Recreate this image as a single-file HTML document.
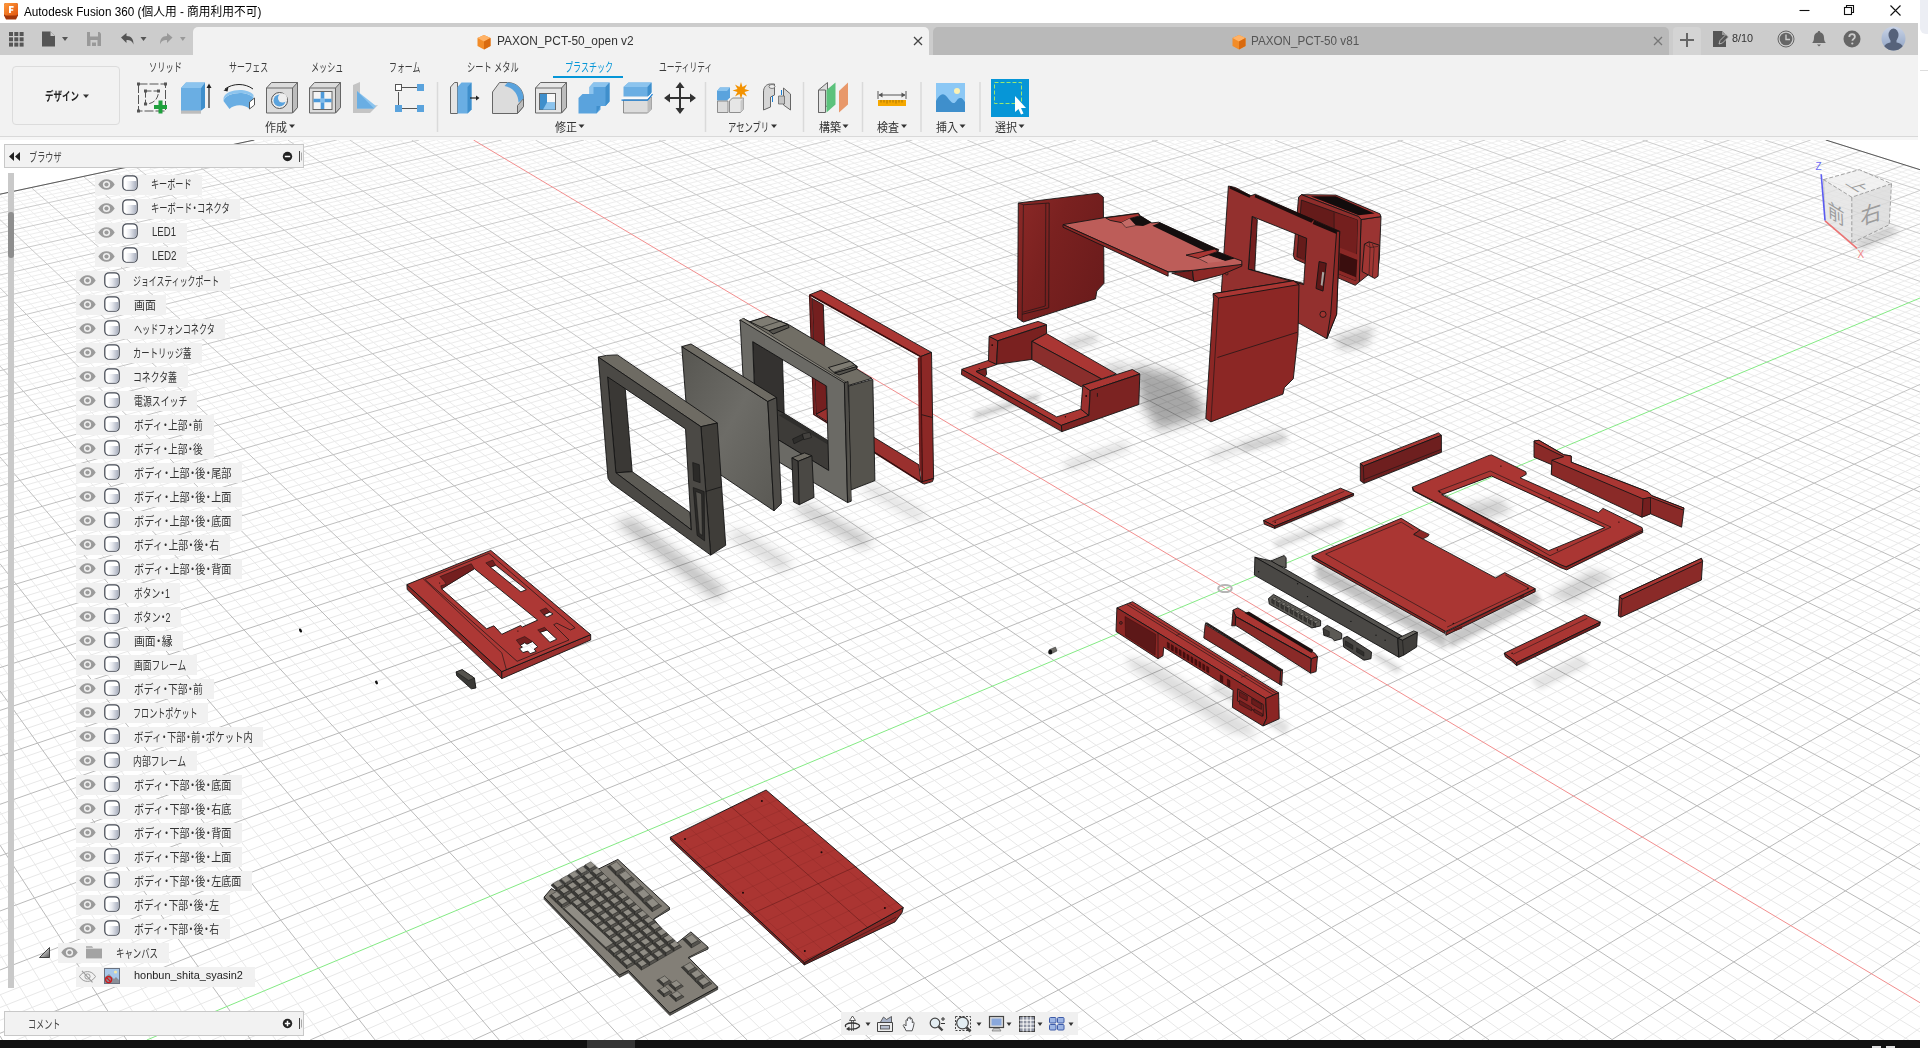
<!DOCTYPE html>
<html lang="ja"><head><meta charset="utf-8"><title>Autodesk Fusion 360</title>
<style>
html,body{margin:0;padding:0}
body{width:1928px;height:1048px;overflow:hidden;position:relative;background:#fff;font-family:"Liberation Sans","Noto Sans CJK JP",sans-serif;font-size:12px;color:#333}
#win{position:absolute;left:0;top:0;width:1920px;height:1040px;overflow:hidden;background:#fff}
.abs{position:absolute}
#titlebar{position:absolute;left:0;top:0;width:1920px;height:23px;background:#fff}
#tabbar{position:absolute;left:0;top:23px;width:1918px;height:32px;background:#cccccc}
#toolbar{position:absolute;left:0;top:55px;width:1918px;overflow:hidden;height:85px;background:#f2f2f2}
#vp{position:absolute;left:0;top:140px;width:1920px;height:900px;background:#fff;overflow:hidden}
.t{position:absolute;white-space:nowrap;line-height:1;transform-origin:0 0}
.d{display:inline-block;margin:0 -0.22em}
.row{position:absolute;height:20px;background:#f1f1f1}
</style></head><body>

<div id="win">
<div id="titlebar">
<svg class="abs" style="left:4px;top:3px" width="14" height="17" viewBox="0 0 14 17"><defs><linearGradient id="fl" x1="0" y1="0" x2="1" y2="1"><stop offset="0" stop-color="#ff9a3c"/><stop offset="1" stop-color="#e2560f"/></linearGradient></defs><path d="M2 0h10a2 2 0 0 1 2 2v10.5l-2 4H2l-2-4V2a2 2 0 0 1 2-2z" fill="#a3360a"/><rect x="0" y="0" width="14" height="12.5" rx="2" fill="url(#fl)"/><path d="M5 3h4.6v1.7H6.9v1.5h2.3v1.6H6.9V10H5z" fill="#fff"/></svg>
<svg class="abs" style="left:1790px;top:0" width="130" height="23" viewBox="0 0 130 23" fill="none" stroke="#111" stroke-width="1.1"><path d="M9.5 10.5h10"/><rect x="54.5" y="7.5" width="7" height="7"/><path d="M56.5 7.5v-2h7v7h-2"/><path d="M100.5 5.5l10 10M110.5 5.5l-10 10"/></svg>
</div>
<div id="tabbar">
<svg class="abs" style="left:0;top:0" width="193" height="32" viewBox="0 0 193 32">
<g fill="#555"><rect x="9" y="9" width="4" height="4"/><rect x="14.3" y="9" width="4" height="4"/><rect x="19.6" y="9" width="4" height="4"/><rect x="9" y="14.3" width="4" height="4"/><rect x="14.3" y="14.3" width="4" height="4"/><rect x="19.6" y="14.3" width="4" height="4"/><rect x="9" y="19.6" width="4" height="4"/><rect x="14.3" y="19.6" width="4" height="4"/><rect x="19.6" y="19.6" width="4" height="4"/>
<path d="M42 8.5h8.5l4.5 4.5v10.500h-13z"/><path d="M62 14l3 4 3-4z"/>
<path d="M140.500 14l3 4 3-4z"/></g>
<path d="M50.500 8.500v4.500h4.500" fill="#ccc"/>
<g fill="#999"><path d="M87 9h12.500l1.500 1.500V23H87z"/><path d="M180 14l2.800 4 2.800-4z"/></g>
<path d="M90 9h8v4.500h-8zM90.500 17h7v6h-7z" fill="#ccc"/><rect x="92" y="19.500" width="4" height="3.500" fill="#999"/>
<path d="M121 14.500l5.500-4.500v3c5 0 7 3 7 8.500-1.500-3.500-3-4.500-7-4.500v3z" fill="#555"/>
<path d="M172.500 14.500l-5.500-4.500v3c-5 0-7 3-7 8.500 1.500-3.500 3-4.500 7-4.500v3z" fill="#999"/>
</svg>
<div class="abs" style="left:193px;top:4px;width:736px;height:28px;background:#f2f2f2;border-radius:5px 5px 0 0"></div>
<div class="abs" style="left:933px;top:4px;width:736px;height:28px;background:#b9b9b9;border-radius:5px 5px 0 0"></div>
<div class="abs" style="left:1673px;top:4px;width:28px;height:28px;background:#d4d4d4;border-radius:4px 4px 0 0"></div>
<svg class="abs" style="left:476px;top:11px" width="16" height="16" viewBox="0 0 16 16"><path d="M8 1l6.500 3v8L8 15.500 1.500 12V4z" fill="#f28c28"/><path d="M8 1l6.500 3L8 7.500 1.500 4z" fill="#ffb266"/><path d="M8 7.500l6.500-3.500v8L8 15.500z" fill="#d96a0f"/></svg>
<svg class="abs" style="left:1231px;top:11px" width="16" height="16" viewBox="0 0 16 16"><path d="M8 1l6.500 3v8L8 15.500 1.500 12V4z" fill="#f28c28"/><path d="M8 1l6.500 3L8 7.500 1.500 4z" fill="#ffb266"/><path d="M8 7.500l6.500-3.500v8L8 15.500z" fill="#d96a0f"/></svg>
<svg class="abs" style="left:913px;top:13px" width="10" height="10" viewBox="0 0 10 10" stroke="#444" stroke-width="1.3"><path d="M1 1l8 8M9 1l-8 8"/></svg>
<svg class="abs" style="left:1653px;top:13px" width="10" height="10" viewBox="0 0 10 10" stroke="#777" stroke-width="1.3"><path d="M1 1l8 8M9 1l-8 8"/></svg>
<svg class="abs" style="left:1680px;top:10px" width="14" height="14" viewBox="0 0 14 14" stroke="#666" stroke-width="2"><path d="M7 0v14M0 7h14"/></svg>
<svg class="abs" style="left:1712px;top:8px" width="17" height="17" viewBox="0 0 17 17"><path d="M1 0h9l4 4v12H1z" fill="#555"/><path d="M10 0v4h4" fill="#999"/><path d="M7 13l1-3.500 6-6 2.500 2.500-6 6z" fill="#555" stroke="#ccc" stroke-width=".8"/></svg>
<svg class="abs" style="left:1777px;top:7px" width="18" height="18" viewBox="0 0 18 18"><circle cx="9" cy="9" r="8" fill="none" stroke="#666" stroke-width="1"/><circle cx="9" cy="9" r="6.300" fill="#666"/><path d="M9 4.500V9.500h4" stroke="#ccc" stroke-width="1.400" fill="none"/></svg>
<svg class="abs" style="left:1811px;top:7px" width="16" height="18" viewBox="0 0 16 18"><path d="M8 1c.8 0 1.200.5 1.200 1.200 2.600.6 3.800 2.800 3.800 5.300 0 3 .8 4.500 2 5.500H1c1.200-1 2-2.500 2-5.500 0-2.500 1.200-4.700 3.800-5.300C6.800 1.500 7.200 1 8 1z" fill="#666"/><path d="M6 14.500h4L8 16.500z" fill="#666"/></svg>
<svg class="abs" style="left:1843px;top:7px" width="18" height="18" viewBox="0 0 18 18"><circle cx="9" cy="9" r="8.500" fill="#666"/><path d="M6.300 7c0-1.800 1.200-2.800 2.800-2.800s2.800 1 2.800 2.500c0 2-2.500 2.200-2.500 4" stroke="#ccc" stroke-width="1.800" fill="none"/><circle cx="9.300" cy="13.500" r="1.100" fill="#ccc"/></svg>
<svg class="abs" style="left:1881px;top:3px" width="25" height="25" viewBox="0 0 25 25"><defs><linearGradient id="av" x1="0" y1="0" x2="0" y2="1"><stop offset="0" stop-color="#c9d3e6"/><stop offset="1" stop-color="#8fa3c4"/></linearGradient><clipPath id="avc"><circle cx="12.500" cy="12.500" r="12"/></clipPath></defs><circle cx="12.500" cy="12.500" r="12" fill="url(#av)"/><g clip-path="url(#avc)" fill="#56627a"><ellipse cx="12.500" cy="9" rx="5" ry="6.500"/><path d="M2 25c0-6 4-8 7.500-8.500V14h6v2.500C19 17 23 19 23 25z"/></g></svg>
</div>
<div id="toolbar">
<div class="abs" style="left:0;top:81px;width:1920px;height:1px;background:#d9d9d9"></div>
<div class="abs" style="left:0;top:82px;width:1920px;height:3px;background:#f6f6f6"></div>
<div class="abs" style="left:12px;top:10.500px;width:108px;height:59px;border:1px solid #dcdcdc;border-radius:4px;box-sizing:border-box"></div>
<div class="abs" style="left:553px;top:21px;width:70px;height:2px;background:#0696d7"></div>
<svg class="abs" style="left:0;top:0" width="1100" height="82" viewBox="0 55 1100 82">
<g fill="#333"><path d="M83 94.500h6l-3 3.500z"/><path d="M289 124.500h6l-3 3.500z"/><path d="M578.500 124.500h6l-3 3.500z"/><path d="M771 124.500h6l-3 3.500z"/><path d="M842.500 124.500h6l-3 3.500z"/><path d="M901 124.500h6l-3 3.500z"/><path d="M959.500 124.500h6l-3 3.500z"/><path d="M1018.500 124.500h6l-3 3.500z"/></g>
<g stroke="#dadada" stroke-width="1.500"><path d="M437.500 82v50M705.500 82v50M803.500 82v50M862.500 82v50M921 82v50M980 82v50"/></g>
<!-- sketch -->
<g fill="none" stroke="#555" stroke-width="1"><path d="M138.500 84h27v27h-27z" stroke-dasharray="9 2"/><path d="M145.500 91h13c0 8-5 13-13 13z" stroke-dasharray="6 2"/></g>
<g fill="#555"><rect x="137" y="82.500" width="3" height="3"/><rect x="164" y="82.500" width="3" height="3"/><rect x="137" y="109.500" width="3" height="3"/><rect x="144" y="89.500" width="3" height="3"/><rect x="157" y="89.500" width="3" height="3"/><rect x="144" y="102.500" width="3" height="3"/></g>
<path d="M160.500 100.500v13M154 107h13" stroke="#1ea03c" stroke-width="4" fill="none"/>
<!-- extrude -->
<path d="M181 110l4-3h20l-4 3v3.500h-20z" fill="#c9c9c9"/><path d="M181 110h20v3.500h-20z" fill="#bdbdbd"/>
<path d="M181 88l5-5.500h19v25l-4 3h-20z" fill="#6aaee3"/><path d="M201 88l4-5.500v25l-4 3z" fill="#3f8fcc"/><path d="M181 88l5-5.500h19l-4 5.500z" fill="#8cc4ee"/>
<path d="M209 108V86" stroke="#222" stroke-width="1.200"/><path d="M206.500 88l2.500-4.500 2.500 4.500z" fill="#222"/>
<!-- revolve -->
<path d="M223.500 101c2-9 24-11 30-3l-4 11c-5-5-15-5-20 0z" fill="#6aaee3"/><path d="M223.500 101c2-9 24-11 30-3v-3c-6-8-28-6-30 3z" fill="#8cc4ee"/><path d="M249.500 102l5-4v7l-5 4z" fill="#fff" stroke="#555" stroke-width="1"/>
<path d="M225 89c8-6 20-6 28 0" stroke="#222" stroke-width="1" fill="none"/><path d="M223.500 90.500l5-3.500-1 4.500z" fill="#222"/>
<!-- hole -->
<path d="M266.500 88l5-5.500h26v25l-5 5.500h-26z" fill="#dcdcdc" stroke="#666" stroke-width="1"/><path d="M292.500 88l5-5.500v25l-5 5.500z" fill="#bdbdbd" stroke="#666" stroke-width="1"/><path d="M266.500 88h26v25" fill="none" stroke="#666" stroke-width="1"/>
<circle cx="279.500" cy="100.500" r="8" fill="#eee" stroke="#555" stroke-width="1"/><circle cx="279.500" cy="100.500" r="6" fill="#5aa3dd"/><circle cx="282.500" cy="98" r="4.500" fill="#eee"/>
<!-- mesh box -->
<path d="M309.500 88l5-5.500h26v25l-5 5.500h-26z" fill="#dcdcdc" stroke="#666" stroke-width="1"/><path d="M335.500 88l5-5.500v25l-5 5.500z" fill="#bdbdbd" stroke="#666" stroke-width="1"/><path d="M309.500 88h26v25" fill="none" stroke="#666" stroke-width="1"/>
<rect x="313" y="91.500" width="19" height="18" fill="#f4f4f4" stroke="#666" stroke-width="1"/><path d="M320.700 92v17h3.600V92zM313.500 98.700h18v3.600h-18z" fill="#4d9ada"/><path d="M320.700 98.700h3.600v3.600h-3.600z" fill="#7fbdee"/>
<!-- rib -->
<path d="M353 85l7-3v26l18-3-8 8h-17z" fill="#c4c4c4"/><path d="M357 91l19 15-2 2.500h-17z" fill="#8cc4ee"/><path d="M357 91v17.500h17z" fill="#6aaee3"/>
<!-- pattern -->
<path d="M398.500 92v16M402 87.500h18M402 108.500h18" stroke="#555" stroke-width="1" fill="none"/><rect x="395.500" y="84.500" width="6" height="6" fill="#fff" stroke="#555"/><rect x="417" y="84" width="7" height="7" fill="#5aa3dd"/><rect x="395" y="105" width="7" height="7" fill="#5aa3dd"/><rect x="417" y="105" width="7" height="7" fill="#5aa3dd"/>
<!-- press pull -->
<path d="M450.500 87l4-4.500h3v31h-7z" fill="#e4e4e4" stroke="#666" stroke-width="1"/><path d="M457.500 87l4-4.500h10v27l-4 4h-10z" fill="#6aaee3"/><path d="M467.500 87l4-4.500v27l-4 4z" fill="#3f8fcc"/>
<path d="M470 98h7" stroke="#222" stroke-width="1.200"/><path d="M476 95.500l3.500 2.500-3.500 2.500z" fill="#222"/>
<!-- fillet -->
<path d="M492.500 113.500V92l7-9.500h8c9 0 16 7 16 16v8l-6 7z" fill="#dcdcdc" stroke="#666" stroke-width="1"/><path d="M517.500 113.500v-8l6-7v8z" fill="#bdbdbd" stroke="#666" stroke-width="1"/><path d="M504.500 86l3-3.500c9 0 16 7 16 16l-5 4c0-9-6-15-14-16.500z" fill="#5aa3dd"/>
<!-- shell -->
<path d="M535.500 88l5-5.500h26v25l-5 5.500h-26z" fill="#e6e6e6" stroke="#666" stroke-width="1"/><path d="M561.500 88l5-5.500v25l-5 5.500z" fill="#bdbdbd" stroke="#666" stroke-width="1"/><path d="M535.500 88h26v25" fill="none" stroke="#666" stroke-width="1"/>
<rect x="539.500" y="93.500" width="16" height="16" fill="#f8f8f8" stroke="#666" stroke-width="1"/><path d="M540 94h7v8.500h8v7h-15z" fill="#3f8fcc"/><path d="M547 102.500h8v7h-12z" fill="#8cc4ee"/>
<!-- combine -->
<path d="M578.500 98l4-4h7v-7l4-4.500h16v19l-4 4.500h-5v3.500l-4 4h-18z" fill="#5aa3dd"/><path d="M578.500 98l4-4h7v-7l4-4.500h16l-4 4.500h-12v7h-11z" fill="#8cc4ee"/><path d="M605.500 87l4-4.500v19l-4 4.500zM596.500 106h4l-4 7.500z" fill="#3f8fcc"/>
<!-- split -->
<path d="M623.500 100h24l4-3v12l-4 4h-24z" fill="#dcdcdc" stroke="#777" stroke-width=".8"/><path d="M647.500 100l4-3v12l-4 4z" fill="#bdbdbd"/>
<path d="M623.500 87l5-4.500h23v11l-4 3h-24z" fill="#6aaee3"/><path d="M623.500 87l5-4.500h23l-4 4.500z" fill="#8cc4ee"/><path d="M647.500 87l4-4.500v11l-4 3z" fill="#3f8fcc"/>
<path d="M621.500 100.200h26l5-6" stroke="#1a7fd4" stroke-width="1.300" fill="none"/><path d="M621.500 98.200h26l5-6" stroke="#fff" stroke-width="1" fill="none"/>
<!-- move -->
<path d="M680 84v28M666 98h28" stroke="#333" stroke-width="2"/><path d="M680 82l4.500 6h-9zM680 114l4.500-6h-9zM664 98l6-4.500v9zM696 98l-6-4.500v9z" fill="#333"/>
<!-- assembly new component -->
<path d="M717 91l3-3.500h10l0 10-3 3h-10z" fill="#5aa3dd"/><path d="M717 91l3-3.500h10l-3 3.500z" fill="#8cc4ee"/>
<path d="M717.500 101h10.500v11.500h-10.500z" fill="#dcdcdc" stroke="#777" stroke-width=".8"/><path d="M729.500 101l3-3h11v11l-3 3.500h-11z" fill="#e6e6e6" stroke="#777" stroke-width=".8"/><path d="M740.500 101l3-3v11l-3 3.500z" fill="#c9c9c9"/>
<path d="M741 82l1.500 5 4.500-2.500-2.500 4.500 5 1.500-5 1.500 2.500 4.500-4.500-2.500-1.500 5-1.500-5-4.500 2.500 2.500-4.500-5-1.500 5-1.500-2.500-4.500 4.500 2.500z" fill="#f39200"/>
<!-- joint -->
<path d="M763.500 110V92c0-5 3-8 7-8h4v11l-4 2v10z" fill="#d6d6d6" stroke="#666" stroke-width="1"/><ellipse cx="772" cy="86.500" rx="3" ry="2" fill="#eee" stroke="#666" stroke-width=".8"/>
<path d="M783.500 88l7 6v16l-7-5z" fill="#d6d6d6" stroke="#666" stroke-width="1"/><path d="M778.500 96h6v8h-6z" fill="#c4c4c4" stroke="#666" stroke-width=".8"/><path d="M772.500 96v6M781.500 90v5" stroke="#1a7fd4" stroke-width="1"/>
<!-- construct -->
<path d="M818.500 90l9-7.500v23l-9 7z" fill="#dcdcdc" stroke="#666" stroke-width="1"/><path d="M818.500 90h7v22.500h-7z" fill="#e4e4e4" stroke="#666" stroke-width="1"/>
<path d="M826.500 90l9-7.500v22l-9 8z" fill="#5cc27c"/><path d="M839 91l9-8.500v22l-9 8z" fill="#e8986a"/>
<!-- inspect -->
<path d="M878 91v8M906 91v8M879 95h26" stroke="#555" stroke-width="1" fill="none"/><path d="M878.500 95l4-2.500v5zM905.500 95l-4-2.500v5z" fill="#555"/><rect x="878" y="100" width="28" height="6" fill="#f5a800"/><path d="M881 100v2.500M884 100v2.500M887 100v3.500M890 100v2.500M893 100v2.500M896 100v3.500M899 100v2.500M902 100v2.500" stroke="#7a5200" stroke-width=".6"/>
<!-- insert -->
<rect x="936" y="83" width="29" height="29" fill="#8cc8f5"/><path d="M936 101c3-6 6-8 9-6s5 7 8 8 4-5 7-5 3 2 5 4v10h-29z" fill="#3f8fcc"/><circle cx="957" cy="91" r="3" fill="#fbf1b4"/>
<!-- select -->
<rect x="991" y="79" width="38" height="38" fill="#0696d7"/><rect x="994.500" y="82.500" width="27" height="21" fill="none" stroke="#9be870" stroke-width="1" stroke-dasharray="4 2"/><path d="M1015 96v16l3.500-3 2.500 5.500 2.500-1-2.500-5.500h5z" fill="#fff"/>
</svg>
</div>

<div id="vp">
<svg class="abs" style="left:0;top:0" width="1920" height="900" viewBox="0 0 1920 900" fill="none"><defs><path id="gmin" d="M0.0 57.9L270.9 0.0M0.0 61.7L287.4 0.0M0.0 65.5L303.9 0.0M0.0 69.3L320.4 0.0M0.0 77.0L353.4 0.0M0.0 81.0L369.9 0.0M0.0 84.9L386.4 0.0M0.0 88.9L402.9 0.0M0.0 97.0L435.8 0.0M0.0 101.1L452.3 0.0M0.0 105.2L468.8 0.0M0.0 109.3L485.2 0.0M0.0 117.7L518.1 0.0M0.0 122.0L534.6 0.0M0.0 126.3L551.1 0.0M0.0 130.6L567.5 0.0M0.0 139.4L600.4 0.0M0.0 143.8L616.9 0.0M0.0 148.3L633.3 0.0M0.0 152.8L649.8 0.0M0.0 162.0L682.6 0.0M0.0 166.6L699.1 0.0M0.0 171.3L715.5 0.0M0.0 176.0L731.9 0.0M0.0 185.5L764.8 0.0M0.0 190.4L781.2 0.0M0.0 195.3L797.6 0.0M0.0 200.2L814.0 0.0M0.0 210.2L846.9 0.0M0.0 215.2L863.3 0.0M0.0 220.4L879.7 0.0M0.0 225.5L896.1 0.0M0.0 236.0L928.9 0.0M0.0 241.3L945.3 0.0M0.0 246.6L961.7 0.0M0.0 252.0L978.1 0.0M0.0 263.0L1010.8 0.0M-0.0 268.5L1027.2 0.0M0.0 274.1L1043.6 0.0M0.0 279.8L1060.0 0.0M0.0 291.3L1092.7 0.0M0.0 297.1L1109.1 0.0M0.0 303.0L1125.5 0.0M0.0 309.0L1141.8 0.0M0.0 321.0L1174.6 0.0M0.0 327.1L1190.9 0.0M0.0 333.3L1207.3 0.0M0.0 339.6L1223.6 0.0M0.0 352.3L1256.3 0.0M0.0 358.7L1272.7 0.0M0.0 365.2L1289.0 0.0M0.0 371.8L1305.4 0.0M0.0 385.2L1338.0 0.0M0.0 391.9L1354.4 0.0M0.0 398.8L1370.7 0.0M0.0 405.7L1387.0 0.0M0.0 419.8L1419.7 0.0M0.0 427.0L1436.0 0.0M0.0 434.2L1452.3 0.0M0.0 441.5L1468.6 0.0M0.0 456.4L1501.3 0.0M0.0 463.9L1517.6 0.0M0.0 471.6L1533.9 0.0M0.0 479.3L1550.2 0.0M0.0 495.0L1582.8 0.0M0.0 503.0L1599.1 0.0M0.0 511.1L1615.4 0.0M0.0 519.3L1631.7 0.0M0.0 535.9L1664.3 0.0M0.0 544.4L1680.5 0.0M0.0 553.0L1696.8 0.0M0.0 561.6L1713.1 0.0M0.0 579.3L1745.6 0.0M0.0 588.3L1761.9 0.0M0.0 597.4L1778.2 0.0M0.0 606.6L1794.5 0.0M0.0 625.4L1826.4 0.2M0.0 634.9L1834.9 2.9M0.0 644.6L1843.4 5.6M0.0 654.4L1852.0 8.3M0.0 674.4L1869.3 13.7M0.0 684.6L1878.1 16.5M0.0 694.9L1886.9 19.3M0.0 705.3L1895.7 22.1M0.0 726.7L1913.6 27.7M0.0 737.5L1920.0 31.5M0.0 748.6L1920.0 37.7M0.0 759.7L1920.0 44.0M0.0 782.5L1920.0 56.9M0.0 794.2L1920.0 63.5M0.0 806.0L1920.0 70.2M0.0 817.9L1920.0 76.9M0.0 842.3L1920.0 90.7M0.0 854.8L1920.0 97.8M0.0 867.5L1920.0 104.9M-0.0 880.3L1920.0 112.2M16.2 900.0L1920.0 127.0M48.8 900.0L1920.0 134.6M81.5 900.0L1920.0 142.2M114.2 900.0L1920.0 150.1M179.5 900.0L1920.0 166.0M212.1 900.0L1920.0 174.2M244.8 900.0L1920.0 182.5M277.4 900.0L1920.0 190.9M342.7 900.0L1920.0 208.2M375.3 900.0L1920.0 217.0M407.9 900.0L1920.0 226.0M440.5 900.0L1920.0 235.1M505.8 900.0L1920.0 253.8M538.4 900.0L1920.0 263.4M571.0 900.0L1920.0 273.1M603.5 900.0L1920.0 283.0M668.7 900.0L1920.0 303.4M701.3 900.0L1920.0 313.8M733.9 900.0L1920.0 324.4M766.4 900.0L1920.0 335.2M831.5 900.0L1920.0 357.4M864.1 900.0L1920.0 368.8M896.6 900.0L1920.0 380.4M929.2 900.0L1920.0 392.2M994.2 900.0L1920.0 416.5M1026.8 900.0L1920.0 429.0M1059.3 900.0L1920.0 441.8M1091.8 900.0L1920.0 454.8M1156.8 900.0L1920.0 481.5M1189.3 900.0L1920.0 495.3M1221.8 900.0L1920.0 509.4M1254.3 900.0L1920.0 523.7M1319.3 900.0L1920.0 553.3M1351.7 900.0L1920.0 568.6M1384.2 900.0L1920.0 584.2M1416.7 900.0L1920.0 600.1M1481.6 900.0L1920.0 633.0M1514.1 900.0L1920.0 650.0M1546.5 900.0L1920.0 667.3M1578.9 900.0L1920.0 685.1M1643.8 900.0L1920.0 721.9M1676.2 900.0L1920.0 741.0M1708.7 900.0L1920.0 760.5M1741.1 900.0L1920.0 780.4M1805.9 900.0L1920.0 821.8M1838.3 900.0L1920.0 843.3M1870.7 900.0L1920.0 865.4M1903.1 900.0L1920.0 888.0M0.0 854.2L27.3 900.0M0.0 814.4L52.1 900.0M0.0 776.4L77.0 900.0M0.0 740.0L101.8 900.0M0.0 671.7L151.5 900.0M0.0 639.7L176.4 900.0M0.0 608.9L201.2 900.0M0.0 579.3L226.1 900.0M0.0 523.6L275.8 900.0M0.0 497.2L300.6 900.0M0.0 471.8L325.4 900.0M0.0 447.3L350.2 900.0M0.0 400.9L399.9 900.0M0.0 378.8L424.7 900.0M0.0 357.5L449.5 900.0M0.0 336.9L474.3 900.0M0.0 297.6L524.0 900.0M0.0 278.9L548.8 900.0M0.0 260.8L573.6 900.0M0.0 243.2L598.4 900.0M0.0 209.5L648.0 900.0M0.0 193.4L672.8 900.0M0.0 177.8L697.5 900.0M0.0 162.6L722.3 900.0M0.0 133.5L771.9 900.0M0.0 119.5L796.7 900.0M0.0 105.9L821.4 900.0M0.0 92.6L846.2 900.0M0.0 67.1L895.7 900.0M0.0 54.9L920.5 900.0M10.0 52.0L945.3 900.0M20.6 49.8L970.0 900.0M41.7 45.3L1019.5 900.0M52.2 43.0L1044.3 900.0M62.6 40.8L1069.0 900.0M73.0 38.6L1093.8 900.0M93.6 34.2L1143.2 900.0M103.8 32.1L1168.0 900.0M114.0 29.9L1192.7 900.0M124.1 27.7L1217.4 900.0M144.2 23.5L1266.9 900.0M154.2 21.3L1291.6 900.0M164.1 19.2L1316.3 900.0M174.0 17.1L1341.0 900.0M193.6 12.9L1390.4 900.0M203.4 10.9L1415.1 900.0M213.1 8.8L1439.9 900.0M222.8 6.7L1464.6 900.0M242.0 2.7L1513.9 900.0M251.5 0.6L1538.6 900.0M263.0 0.0L1563.3 900.0M275.4 0.0L1588.0 900.0M300.2 0.0L1637.4 900.0M312.6 0.0L1662.0 900.0M325.0 0.0L1686.7 900.0M337.3 0.0L1711.4 900.0M362.1 0.0L1760.7 900.0M374.5 0.0L1785.4 900.0M386.9 0.0L1810.0 900.0M399.3 0.0L1834.7 900.0M424.0 0.0L1884.0 900.0M436.4 0.0L1908.7 900.0M448.8 0.0L1920.0 891.9M461.1 0.0L1920.0 877.2M485.9 0.0L1920.0 848.4M498.3 0.0L1920.0 834.4M510.6 0.0L1920.0 820.5M523.0 0.0L1920.0 806.9M547.7 0.0L1920.0 780.4M560.1 0.0L1920.0 767.4M572.4 0.0L1920.0 754.6M584.8 0.0L1920.0 742.0M609.5 0.0L1920.0 717.5M621.9 0.0L1920.0 705.4M634.2 0.0L1920.0 693.6M646.6 0.0L1920.0 681.9M671.3 0.0L1920.0 659.1M683.6 0.0L1920.0 647.9M696.0 0.0L1920.0 636.9M708.3 0.0L1920.0 626.1M733.0 0.0L1920.0 604.8M745.3 0.0L1920.0 594.4M757.7 0.0L1920.0 584.1M770.0 0.0L1920.0 574.0M794.7 0.0L1920.0 554.2M807.0 0.0L1920.0 544.5M819.4 0.0L1920.0 534.9M831.7 0.0L1920.0 525.4M856.4 0.0L1920.0 506.9M868.7 0.0L1920.0 497.8M881.0 0.0L1920.0 488.8M893.3 0.0L1920.0 479.9M918.0 0.0L1920.0 462.5M930.3 -0.0L1920.0 454.0M942.6 -0.0L1920.0 445.6M954.9 0.0L1920.0 437.3M979.6 -0.0L1920.0 420.9M991.9 0.0L1920.0 412.9M1004.2 0.0L1920.0 405.0M1016.5 0.0L1920.0 397.2M1041.1 0.0L1920.0 381.8M1053.4 0.0L1920.0 374.2M1065.7 -0.0L1920.0 366.8M1078.0 0.0L1920.0 359.4M1102.6 0.0L1920.0 344.9M1114.9 0.0L1920.0 337.8M1127.2 0.0L1920.0 330.8M1139.5 0.0L1920.0 323.8M1164.1 0.0L1920.0 310.1M1176.4 0.0L1920.0 303.4M1188.7 0.0L1920.0 296.7M1201.0 0.0L1920.0 290.1M1225.5 0.0L1920.0 277.2M1237.8 0.0L1920.0 270.8M1250.1 0.0L1920.0 264.5M1262.4 0.0L1920.0 258.3M1286.9 0.0L1920.0 246.0M1299.2 0.0L1920.0 240.0M1311.5 0.0L1920.0 234.0M1323.8 0.0L1920.0 228.1M1348.3 0.0L1920.0 216.5M1360.6 0.0L1920.0 210.8M1372.9 -0.0L1920.0 205.1M1385.1 0.0L1920.0 199.5M1409.7 0.0L1920.0 188.5M1421.9 0.0L1920.0 183.0M1434.2 0.0L1920.0 177.6M1446.4 0.0L1920.0 172.3M1471.0 0.0L1920.0 161.8M1483.2 0.0L1920.0 156.6M1495.5 0.0L1920.0 151.5M1507.7 0.0L1920.0 146.4M1532.2 0.0L1920.0 136.4M1544.5 0.0L1920.0 131.5M1556.7 0.0L1920.0 126.6M1569.0 0.0L1920.0 121.7M1593.5 0.0L1920.0 112.2M1605.7 0.0L1920.0 107.5M1617.9 0.0L1920.0 102.8M1630.2 0.0L1920.0 98.2M1654.6 0.0L1920.0 89.1M1666.9 0.0L1920.0 84.6M1679.1 0.0L1920.0 80.2M1691.3 0.0L1920.0 75.8M1715.8 0.0L1920.0 67.1M1728.0 0.0L1920.0 62.8M1740.3 0.0L1920.0 58.5M1752.5 0.0L1920.0 54.3M1776.9 0.0L1920.0 46.0M1789.2 0.0L1920.0 41.9M1801.4 0.0L1920.0 37.8M1813.6 0.0L1920.0 33.7"/><path id="gmaj" d="M0.0 54.2L254.4 -0.0M0.0 73.2L336.9 0.0M0.0 92.9L419.3 0.0M0.0 113.5L501.7 0.0M0.0 135.0L584.0 0.0M0.0 157.4L666.2 0.0M0.0 180.7L748.4 -0.0M0.0 205.2L830.4 0.0M0.0 230.7L912.5 0.0M0.0 257.5L994.5 0.0M0.0 285.5L1076.4 0.0M0.0 315.0L1158.2 0.0M-0.0 345.9L1240.0 0.0M0.0 378.4L1321.7 0.0M0.0 412.7L1403.4 0.0M0.0 448.9L1485.0 0.0M0.0 487.1L1566.5 0.0M0.0 527.6L1648.0 0.0M0.0 570.4L1729.4 0.0M0.0 615.9L1810.7 0.0M0.0 664.3L1860.7 11.0M0.0 715.9L1904.6 24.9M0.0 771.0L1920.0 50.4M0.0 830.0L1920.0 83.8M0.0 893.3L1920.0 119.5M310.1 900.0L1920.0 199.5M473.2 900.0L1920.0 244.4M636.1 900.0L1920.0 293.1M799.0 900.0L1920.0 346.2M961.7 900.0L1920.0 404.3M1124.3 900.0L1920.0 468.0M1286.8 900.0L1920.0 538.4M1449.1 900.0L1920.0 616.3M1611.4 900.0L1920.0 703.3M1773.5 900.0L1920.0 800.9M0.0 895.9L2.4 900.0M0.0 705.1L126.7 900.0M0.0 550.9L250.9 900.0M0.0 423.7L375.1 900.0M0.0 317.0L499.2 900.0M0.0 226.1L623.2 900.0M0.0 147.8L747.1 900.0M0.0 79.7L871.0 900.0M31.2 47.5L994.8 900.0M83.3 36.4L1118.5 900.0M134.2 25.6L1242.2 900.0M183.9 15.0L1365.7 900.0M232.4 4.7L1489.2 900.0M287.8 0.0L1612.7 900.0M349.7 0.0L1736.1 900.0M411.6 0.0L1859.4 900.0M535.4 0.0L1920.0 793.6M597.2 0.0L1920.0 729.7M658.9 0.0L1920.0 670.4M720.7 0.0L1920.0 615.4M782.4 0.0L1920.0 564.0M844.0 0.0L1920.0 516.1M905.7 0.0L1920.0 471.2M967.2 0.0L1920.0 429.0M1028.8 0.0L1920.0 389.4M1090.3 0.0L1920.0 352.1M1151.8 0.0L1920.0 316.9M1213.3 0.0L1920.0 283.6M1274.7 0.0L1920.0 252.1M1336.0 0.0L1920.0 222.3M1397.4 0.0L1920.0 194.0M1458.7 0.0L1920.0 167.0M1520.0 0.0L1920.0 141.4M1581.2 0.0L1920.0 116.9M1642.4 0.0L1920.0 93.6M1703.6 0.0L1920.0 71.4M1764.7 0.0L1920.0 50.1M1825.8 0.0L1920.0 29.7"/></defs><use href="#gmin" stroke="#e8e8e8" stroke-width="1"/><use href="#gmaj" stroke="#bababa" stroke-width="1"/><defs><linearGradient id="fade" x1="0" y1="0" x2="0" y2="1"><stop offset="0" stop-color="#fff" stop-opacity=".3"/><stop offset=".55" stop-color="#fff" stop-opacity="0"/></linearGradient></defs><rect x="0" y="0" width="1920" height="900" fill="url(#fade)"/><path d="M473.5 0.0L1920.0 862.7" stroke="#f28e8e" stroke-width="1"/><path d="M146.8 900.0L1920.0 158.0" stroke="#84ea84" stroke-width="1"/><path d="M0.0 54.2L254.4 -0.0M1825.8 0.0L1920.0 29.7" stroke="#5a5a5a" stroke-width="1"/></svg>
<svg class="abs" style="left:0;top:0" width="1920" height="900" viewBox="0 140 1920 900">
<defs><filter id="b3" x="-30%" y="-30%" width="160%" height="160%"><feGaussianBlur stdDeviation="2.5"/></filter><filter id="b4" x="-30%" y="-30%" width="160%" height="160%"><feGaussianBlur stdDeviation="4"/></filter><filter id="b6" x="-30%" y="-30%" width="160%" height="160%"><feGaussianBlur stdDeviation="6"/></filter><filter id="b8" x="-30%" y="-30%" width="160%" height="160%"><feGaussianBlur stdDeviation="8"/></filter><linearGradient id="gpanel" x1="0" y1="0" x2="1" y2="1"><stop offset="0" stop-color="#565550"/><stop offset=".5" stop-color="#6d6c67"/><stop offset="1" stop-color="#5a5954"/></linearGradient><linearGradient id="gE" x1="0" y1="0" x2="1" y2="0.6"><stop offset="0" stop-color="#8c2927"/><stop offset=".45" stop-color="#7a2120"/><stop offset="1" stop-color="#6c1c1c"/></linearGradient><linearGradient id="gR" x1="0" y1="0" x2="1" y2="1"><stop offset="0" stop-color="#962e2c"/><stop offset="1" stop-color="#7e2423"/></linearGradient><pattern id="grill" width="1.6" height="1.6" patternUnits="userSpaceOnUse" patternTransform="rotate(30)"><rect width="1.6" height="1.6" fill="#7a2120"/><circle cx=".8" cy=".8" r=".55" fill="#2a0808"/></pattern></defs>
<polygon points="615.0,522.0 632.0,518.0 726.0,590.0 716.0,600.0" fill="#000" opacity="0.26" filter="url(#b6)"/>
<polygon points="726.0,534.0 740.0,530.0 792.0,562.0 784.0,572.0" fill="#000" opacity="0.16" filter="url(#b6)"/>
<polygon points="792.0,508.0 806.0,504.0 874.0,540.0 862.0,548.0" fill="#000" opacity="0.24" filter="url(#b6)"/>
<polygon points="858.0,487.0 870.0,483.0 927.0,514.0 918.0,521.0" fill="#000" opacity="0.14" filter="url(#b6)"/>
<polygon points="1064.0,342.0 1095.0,334.0 1098.0,341.0 1067.0,349.0" fill="#000" opacity="0.22" filter="url(#b4)"/>
<polygon points="1131.0,365.0 1178.0,375.0 1199.0,398.0 1207.0,417.0 1158.0,430.0 1142.0,404.0" fill="#000" opacity="0.34" filter="url(#b6)"/>
<polygon points="973.0,413.0 1038.0,393.0 1040.0,399.0 975.0,419.0" fill="#000" opacity="0.2" filter="url(#b3)"/>
<polygon points="1064.0,463.0 1126.0,442.0 1129.0,449.0 1067.0,470.0" fill="#000" opacity="0.16" filter="url(#b4)"/>
<polygon points="1209.0,453.0 1284.0,429.0 1286.0,436.0 1211.0,460.0" fill="#000" opacity="0.14" filter="url(#b4)"/>
<polygon points="1334.0,337.0 1375.0,326.0 1367.0,346.0 1340.0,350.0" fill="#000" opacity="0.2" filter="url(#b4)"/>
<polygon points="1100.0,366.0 1125.0,362.0 1130.0,374.0 1105.0,380.0" fill="#000" opacity="0.16" filter="url(#b4)"/>
<polygon points="1316.0,562.0 1446.0,634.0 1446.0,649.0 1316.0,577.0" fill="#000" opacity="0.24" filter="url(#b3)"/>
<polygon points="1446.0,634.0 1536.0,591.0 1541.0,601.0 1450.0,648.0" fill="#000" opacity="0.22" filter="url(#b3)"/>
<polygon points="1462.0,505.0 1500.0,498.0 1512.0,512.0 1470.0,522.0" fill="#000" opacity="0.18" filter="url(#b4)"/>
<polygon points="1548.0,596.0 1592.0,570.0 1615.0,576.0 1572.0,602.0" fill="#000" opacity="0.18" filter="url(#b4)"/>
<polygon points="1272.0,542.0 1340.0,518.0 1345.0,524.0 1278.0,548.0" fill="#000" opacity="0.14" filter="url(#b3)"/>
<polygon points="1240.0,445.0 1285.0,434.0 1288.0,442.0 1245.0,452.0" fill="#000" opacity="0.12" filter="url(#b3)"/>
<polygon points="1372.0,656.0 1378.0,653.0 1402.0,668.0 1397.0,674.0" fill="#000" opacity="0.14" filter="url(#b3)"/>
<polygon points="1530.0,680.0 1580.0,655.0 1590.0,665.0 1540.0,690.0" fill="#000" opacity="0.1" filter="url(#b3)"/>
<polygon points="1126.0,656.0 1160.0,666.0 1250.0,724.0 1258.0,738.0 1228.0,732.0 1130.0,668.0" fill="#000" opacity="0.13" filter="url(#b4)"/>
<polygon points="1215.0,680.0 1290.0,725.0 1285.0,735.0 1210.0,690.0" fill="#000" opacity="0.12" filter="url(#b3)"/>
<polygon points="812.2,298.5 823.3,304.8 826.9,408.5 816.0,414.4" fill="#741f1f" stroke="#141414" stroke-width="0.9" stroke-linejoin="round"/>
<polygon points="816.0,414.4 826.9,408.5 918.9,464.8 921.0,482.0" fill="#9a302e" stroke="#141414" stroke-width="0.9" stroke-linejoin="round"/>
<polygon points="809.7,294.7 821.2,290.1 931.5,352.4 920.6,356.6" fill="#aa3633" stroke="#141414" stroke-width="0.9" stroke-linejoin="round"/>
<polygon points="920.6,356.6 931.5,352.4 933.6,478.4 922.0,482.6" fill="#8c2826" stroke="#141414" stroke-width="0.9" stroke-linejoin="round"/>
<polyline points="809.7,294.7 920.6,356.6 922.0,482.6 813.9,414.4 809.7,294.7" fill="none" stroke="#3a0d0d" stroke-width="1.6"/>
<polyline points="920.6,414.4 932.5,417.5" fill="none" stroke="#141414" stroke-width="0.8"/>
<polygon points="917.8,358.1 920.6,356.6 922.0,482.6 919.3,465.8" fill="#741f1f"/>
<polygon points="809.7,294.7 812.2,298.5 816.0,414.4 813.9,414.4" fill="#741f1f"/>
<polygon points="921.0,482.0 933.6,478.4 932.5,481.6 924.1,484.1" fill="#8c2826" stroke="#141414" stroke-width="0.9" stroke-linejoin="round"/>
<polygon points="743.6,318.6 750.0,321.8 767.6,316.3 788.5,324.5 850.1,361.2 857.4,366.6 856.5,368.9 871.9,378.4 847.4,385.7 845.1,382.9" fill="#716e65" stroke="#141414" stroke-width="0.9" stroke-linejoin="round"/>
<polygon points="750.0,321.8 767.6,316.3 788.0,324.5 769.0,330.8" fill="#7f7c73" stroke="#141414" stroke-width="0.9" stroke-linejoin="round"/>
<polyline points="761.3,327.2 781.7,320.6" fill="none" stroke="#141414" stroke-width="0.6"/>
<polygon points="769.0,330.8 788.0,324.5 789.1,327.5 773.1,334.0" fill="#55534d" stroke="#141414" stroke-width="0.9" stroke-linejoin="round"/>
<polygon points="828.4,367.5 850.1,361.2 856.9,366.6 834.7,373.0" fill="#7f7c73" stroke="#141414" stroke-width="0.9" stroke-linejoin="round"/>
<polyline points="833.8,372.3 854.6,365.0" fill="none" stroke="#141414" stroke-width="0.6"/>
<polygon points="834.7,373.0 856.9,366.6 856.5,369.0 839.2,375.0" fill="#55534d" stroke="#141414" stroke-width="0.9" stroke-linejoin="round"/>
<polygon points="739.5,320.4 743.2,318.3 846.0,382.2 843.3,384.0" fill="#8a877e" stroke="#141414" stroke-width="0.6" stroke-linejoin="round"/>
<polygon points="848.6,386.1 872.8,379.4 874.9,480.6 850.7,490.0" fill="#55534d" stroke="#141414" stroke-width="0.9" stroke-linejoin="round"/>
<polygon points="752.7,341.6 782.5,359.4 784.2,414.4 755.2,398.7" fill="#343230" stroke="#141414" stroke-width="0.9" stroke-linejoin="round"/>
<polygon points="755.2,398.7 784.2,413.4 828.7,441.1 828.7,470.5 755.6,426.0" fill="#3d3b38" stroke="#141414" stroke-width="0.9" stroke-linejoin="round"/>
<polygon points="778.7,415.1 784.2,413.4 828.7,441.1 828.7,444.9 782.5,417.6" fill="#2f2e2c"/>
<path d="M740.1,319.9 L844.4,382.9 L847.6,502.6 L746.4,442.8Z M752.7,341.6 L826.6,386.1 L828.7,470.5 L755.6,426.0Z" fill="#6b6a65" fill-rule="evenodd" stroke="#141414" stroke-width="0.9" stroke-linejoin="round"/>
<polygon points="844.4,382.9 848.0,381.5 851.2,501.2 847.6,502.6" fill="#4e4c48" stroke="#141414" stroke-width="0.9" stroke-linejoin="round"/>
<polygon points="848.0,392.4 850.7,490.0 851.2,501.2 848.0,495.3" fill="#55534d"/>
<polygon points="792.6,439.0 802.4,434.4 803.9,439.0 794.0,443.8" fill="#2e2d2b" stroke="#141414" stroke-width="0.6" stroke-linejoin="round"/>
<polygon points="802.4,434.0 809.8,432.3 811.5,437.5 803.9,439.6" fill="#44423f" stroke="#141414" stroke-width="0.6" stroke-linejoin="round"/>
<polygon points="791.9,457.9 804.5,452.9 811.9,455.8 798.2,461.3" fill="#6e6b63" stroke="#141414" stroke-width="0.9" stroke-linejoin="round"/>
<polygon points="791.9,457.9 798.2,461.3 799.3,504.7 793.6,502.0" fill="#3f3d3a" stroke="#141414" stroke-width="0.9" stroke-linejoin="round"/>
<polygon points="798.2,461.3 811.9,455.8 814.0,497.4 799.3,504.7" fill="#4a4844" stroke="#141414" stroke-width="0.9" stroke-linejoin="round"/>
<polygon points="681.8,346.6 767.8,401.5 774.0,510.8 689.9,454.2" fill="url(#gpanel)" stroke="#141414" stroke-width="0.9" stroke-linejoin="round"/>
<polygon points="681.8,346.6 691.0,344.0 776.6,397.5 767.8,401.5" fill="#6e6b63" stroke="#141414" stroke-width="0.9" stroke-linejoin="round"/>
<polygon points="767.8,401.5 776.6,397.5 781.4,503.6 774.0,510.8" fill="#4d4b47" stroke="#141414" stroke-width="0.9" stroke-linejoin="round"/>
<polygon points="607.6,376.9 625.1,387.2 632.2,471.7 615.9,472.8" fill="#3a3835" stroke="#141414" stroke-width="0.9" stroke-linejoin="round"/>
<polygon points="615.9,472.8 632.2,471.7 689.9,512.3 691.4,529.9" fill="#5d5b55" stroke="#141414" stroke-width="0.9" stroke-linejoin="round"/>
<polygon points="598.3,357.1 606.5,355.4 617.4,354.9 717.3,423.0 700.9,426.7" fill="#6e6b63" stroke="#141414" stroke-width="0.9" stroke-linejoin="round"/>
<polygon points="700.9,426.7 717.3,423.0 725.7,545.3 710.7,555.1" fill="#3f3d39" stroke="#141414" stroke-width="0.9" stroke-linejoin="round"/>
<path d="M598.3,357.1 L700.9,426.7 L710.7,555.1 L610.9,482.7 L608.0,478.3Z M607.6,376.9 L685.5,428.9 L691.4,529.9 L615.9,472.8Z" fill="#4b4945" fill-rule="evenodd" stroke="#141414" stroke-width="0.9" stroke-linejoin="round"/>
<polyline points="705.7,491.5 721.9,486.7" fill="none" stroke="#141414" stroke-width="0.8"/>
<polygon points="692.7,462.5 699.3,464.7 700.2,482.7 693.6,480.5" fill="#2b2a28" stroke="#141414" stroke-width="0.6" stroke-linejoin="round"/>
<polygon points="693.2,487.5 704.2,491.5 704.6,540.9 697.1,535.4" fill="#2b2a28" stroke="#141414" stroke-width="0.6" stroke-linejoin="round"/>
<polygon points="695.8,491.5 701.5,493.7 702.4,535.4 699.3,533.2" fill="#55534e" stroke="#141414" stroke-width="0.5" stroke-linejoin="round"/>
<polygon points="1361.0,219.5 1381.0,216.6 1379.3,259.0 1378.1,267.0 1359.3,281.9" fill="#9a3432" stroke="#141414" stroke-width="0.9" stroke-linejoin="round"/>
<polygon points="1301.4,194.7 1335.8,195.1 1379.9,213.8 1381.0,216.6 1361.0,219.5 1358.7,216.6" fill="#aa3633" stroke="#141414" stroke-width="0.9" stroke-linejoin="round"/>
<polygon points="1310.6,196.3 1335.8,196.3 1374.7,213.4 1358.7,215.3" fill="#120c0c"/>
<polygon points="1298.6,197.2 1301.4,194.7 1358.7,216.6 1361.0,219.5 1359.3,281.9 1355.2,285.3 1294.6,259.0 1293.4,255.5" fill="#8f2d2b" stroke="#141414" stroke-width="0.9" stroke-linejoin="round"/>
<polygon points="1301.4,200.0 1357.5,220.1 1355.8,280.7 1296.9,256.7" fill="#651b1a" stroke="#141414" stroke-width="0.7" stroke-linejoin="round"/>
<polygon points="1334.1,212.6 1357.5,220.1 1356.4,254.4 1334.1,245.2" fill="#741f1e"/>
<polygon points="1334.1,245.2 1357.5,254.4 1357.3,260.1 1340.4,253.3 1334.1,248.7" fill="#8a2826"/>
<polygon points="1340.4,253.3 1357.3,260.1 1355.8,277.3 1339.2,270.4" fill="#3a0e0e"/>
<polygon points="1296.9,256.7 1339.2,270.4 1355.8,277.3 1355.8,280.7" fill="#8a2826"/>
<polyline points="1334.1,212.6 1334.1,248.7" fill="none" stroke="#141414" stroke-width="0.5"/>
<polygon points="1364.4,244.1 1369.0,241.8 1379.3,245.2 1378.1,276.2 1374.7,278.4 1362.1,271.6" fill="#a03633" stroke="#141414" stroke-width="0.9" stroke-linejoin="round"/>
<polyline points="1369.0,241.8 1370.1,247.5 1369.0,275.0" fill="none" stroke="#141414" stroke-width="0.5"/>
<polyline points="1372.4,244.1 1374.1,248.7 1372.4,277.3" fill="none" stroke="#141414" stroke-width="0.5"/>
<polyline points="1364.4,244.1 1370.1,247.5 1378.1,246.4" fill="none" stroke="#141414" stroke-width="0.5"/>
<polygon points="1252.1,216.4 1257.3,219.5 1254.7,271.0 1248.3,269.2" fill="#741f1f" stroke="#141414" stroke-width="0.9" stroke-linejoin="round"/>
<polygon points="1248.3,269.2 1254.7,271.0 1303.7,289.0 1303.1,283.3" fill="#9a302e" stroke="#141414" stroke-width="0.9" stroke-linejoin="round"/>
<path d="M1228.4,186.0 L1235.4,187.5 L1250.8,195.8 L1255.2,194.2 L1339.7,231.3 L1336.6,314.3 L1326.8,338.7 L1300.6,324.1 L1221.2,293.7Z M1252.1,216.4 L1306.7,238.3 L1303.7,284.6 L1248.3,269.2Z" fill="#93302e" fill-rule="evenodd" stroke="#141414" stroke-width="0.9" stroke-linejoin="round"/>
<polygon points="1230.2,186.0 1250.8,195.2 1249.6,197.8 1229.5,188.5" fill="#1a0c0c"/>
<polygon points="1255.2,194.5 1314.0,219.5 1311.4,222.8 1254.7,197.3" fill="#1a0c0c"/>
<polygon points="1314.0,220.2 1339.7,231.3 1337.7,234.4 1312.7,224.1" fill="#1a0c0c"/>
<polygon points="1319.1,261.5 1326.3,263.3 1323.0,291.1 1316.0,288.5" fill="#5c1717" stroke="#141414" stroke-width="0.9" stroke-linejoin="round"/>
<polygon points="1322.2,271.8 1324.3,272.5 1322.5,285.9 1320.7,284.9" fill="#a8a4a0"/>
<circle cx="1323.0" cy="314.3" r="3.1" fill="#a03330" stroke="#141414" stroke-width="0.8"/>
<polygon points="1336.6,231.3 1339.7,231.3 1336.6,314.3 1326.8,338.7 1330.7,314.3" fill="#8c2826" stroke="#141414" stroke-width="0.9" stroke-linejoin="round"/>
<polygon points="1018.3,203.0 1098.1,193.2 1103.3,197.0 1104.0,283.3 1096.8,291.1 1095.5,298.8 1023.4,322.0 1017.5,318.1" fill="url(#gE)" stroke="#141414" stroke-width="0.9" stroke-linejoin="round"/>
<polyline points="1023.4,204.8 1049.2,203.0 1048.7,307.8 1022.1,314.3" fill="none" stroke="#141414" stroke-width="0.7"/>
<polyline points="1045.8,203.5 1045.3,306.0 1022.9,312.2" fill="none" stroke="#141414" stroke-width="0.6"/>
<polyline points="1018.3,203.0 1023.4,204.8 1022.1,322.0" fill="none" stroke="#141414" stroke-width="0.6"/>
<polygon points="1171.7,273.0 1192.5,270.4 1193.5,280.9 1178.9,275.6" fill="#741f1f" stroke="#141414" stroke-width="0.9" stroke-linejoin="round"/>
<polygon points="1192.5,270.4 1241.8,264.1 1241.8,266.1 1221.8,274.7 1193.9,281.9" fill="#8c2826" stroke="#141414" stroke-width="0.9" stroke-linejoin="round"/>
<polygon points="1063.0,224.6 1105.2,217.5 1138.5,213.2 1140.2,216.1 1151.7,222.9 1158.8,222.2 1218.9,249.8 1217.5,251.6 1234.7,258.4 1241.8,260.9 1241.8,264.4 1192.5,270.4 1168.1,271.9" fill="#bd5d59" stroke="#141414" stroke-width="0.9" stroke-linejoin="round"/>
<polygon points="1129.5,218.4 1141.0,215.8 1151.7,222.6 1143.1,226.1 1135.9,225.5 1130.5,221.2" fill="#140e0e"/>
<polygon points="1152.4,225.8 1160.0,222.6 1218.7,249.8 1206.8,252.1" fill="#140e0e"/>
<polygon points="1207.5,254.7 1217.8,251.8 1234.7,258.4 1225.0,261.0" fill="#140e0e"/>
<polygon points="1105.6,217.8 1138.1,213.5 1140.0,215.8 1129.5,218.6 1121.6,222.6 1110.2,220.4" fill="#aa3633" stroke="#141414" stroke-width="0.9" stroke-linejoin="round"/>
<polygon points="1121.6,222.6 1129.5,218.6 1135.9,225.5 1125.9,227.5" fill="#c46a66"/>
<polyline points="1121.6,222.6 1125.9,227.5 1135.9,225.5" fill="none" stroke="#141414" stroke-width="0.5"/>
<polygon points="1186.0,255.1 1214.7,249.0 1218.2,251.3 1198.2,258.4" fill="#aa3633" stroke="#141414" stroke-width="0.9" stroke-linejoin="round"/>
<polygon points="1198.2,258.4 1208.9,255.8 1225.0,261.0 1207.5,263.0" fill="#c46a66"/>
<polyline points="1198.2,258.4 1207.5,263.0" fill="none" stroke="#141414" stroke-width="0.5"/>
<polygon points="1063.0,224.6 1168.1,271.9 1168.1,276.2 1063.0,227.2" fill="#8c2826" stroke="#141414" stroke-width="0.9" stroke-linejoin="round"/>
<polyline points="1168.1,271.9 1192.5,270.4" fill="none" stroke="#141414" stroke-width="0.7"/>
<circle cx="1226.8" cy="273.7" r="1.3" fill="#8a2826" stroke="#141414" stroke-width="0.6"/>
<polygon points="1213.0,293.7 1293.3,280.8 1299.0,284.6 1298.0,334.9 1293.3,378.7 1284.3,387.7 1283.0,394.1 1210.9,421.9 1205.8,418.6 1213.5,298.8" fill="#8c2725" stroke="#141414" stroke-width="0.9" stroke-linejoin="round"/>
<polygon points="1213.0,293.7 1293.3,280.8 1299.0,284.6 1218.6,298.0" fill="#aa3633" stroke="#141414" stroke-width="0.9" stroke-linejoin="round"/>
<polyline points="1217.4,357.5 1297.2,332.3" fill="none" stroke="#141414" stroke-width="0.7"/>
<polyline points="1218.6,298.0 1210.9,421.9" fill="none" stroke="#141414" stroke-width="0.6"/>
<polygon points="961.8,369.3 1061.4,425.4 1061.9,431.6 961.5,374.5" fill="#8c2826" stroke="#141414" stroke-width="0.9" stroke-linejoin="round"/>
<polygon points="961.8,369.3 989.1,360.2 996.6,364.6 986.0,368.3 976.1,371.4 1056.7,416.9 1080.9,409.2 1088.7,415.4 1061.4,425.4" fill="#aa3633" stroke="#141414" stroke-width="0.9" stroke-linejoin="round"/>
<polygon points="976.1,371.4 986.0,368.3 986.6,374.5 984.8,376.4" fill="#741f1f" stroke="#141414" stroke-width="0.9" stroke-linejoin="round"/>
<polygon points="989.1,336.3 997.8,340.8 996.6,364.3 988.5,360.9" fill="#8e2c2a" stroke="#141414" stroke-width="0.9" stroke-linejoin="round"/>
<polygon points="989.1,336.3 1038.1,321.4 1046.5,324.6 997.8,340.8" fill="#aa3633" stroke="#141414" stroke-width="0.9" stroke-linejoin="round"/>
<polygon points="997.8,340.8 1046.5,324.9 1046.5,333.6 1031.9,341.3 1031.9,359.4 996.6,364.3" fill="#7a2120" stroke="#141414" stroke-width="0.9" stroke-linejoin="round"/>
<polygon points="1031.9,341.3 1046.5,333.6 1116.3,373.9 1101.6,379.0" fill="#aa3633" stroke="#141414" stroke-width="0.9" stroke-linejoin="round"/>
<polygon points="1031.9,341.3 1101.6,379.0 1082.8,385.4 1081.5,386.9 1031.9,359.6" fill="#8a2e2c" stroke="#141414" stroke-width="0.9" stroke-linejoin="round"/>
<polygon points="1082.8,385.4 1090.2,390.6 1088.7,415.4 1080.9,409.2" fill="#9a302e" stroke="#141414" stroke-width="0.9" stroke-linejoin="round"/>
<polygon points="1082.8,385.4 1132.4,369.5 1139.8,373.9 1090.2,390.6" fill="#aa3633" stroke="#141414" stroke-width="0.9" stroke-linejoin="round"/>
<polygon points="1090.2,390.6 1139.8,374.1 1138.8,404.5 1061.9,431.6 1061.4,425.4 1089.0,415.4" fill="#7c2322" stroke="#141414" stroke-width="0.9" stroke-linejoin="round"/>
<circle cx="992.2" cy="345.1" r="0.9" fill="#1a0808"/>
<circle cx="1086.2" cy="396.0" r="0.9" fill="#1a0808"/>
<circle cx="1065.4" cy="416.7" r="0.7" fill="#1a0808"/>
<circle cx="979.2" cy="368.5" r="0.6" fill="#1a0808"/>
<polyline points="1097.4,393.1 1097.4,396.8" fill="none" stroke="#141414" stroke-width="0.8"/>
<polygon points="1360.3,463.4 1438.5,432.9 1441.4,435.4 1363.3,466.1" fill="#aa3633" stroke="#141414" stroke-width="0.9" stroke-linejoin="round"/>
<polygon points="1363.3,466.1 1441.4,435.4 1441.4,452.3 1364.0,483.3 1360.3,480.8 1360.3,463.4" fill="#6e1f1f" stroke="#141414" stroke-width="0.9" stroke-linejoin="round"/>
<polyline points="1363.3,466.1 1364.0,483.3" fill="none" stroke="#141414" stroke-width="0.6"/>
<polyline points="1364.0,479.5 1441.4,449.3" fill="none" stroke="#141414" stroke-width="0.6"/>
<polygon points="1263.6,520.5 1340.5,488.2 1353.6,493.7 1274.7,526.2" fill="#aa3633" stroke="#141414" stroke-width="0.9" stroke-linejoin="round"/>
<polygon points="1263.6,520.5 1274.7,526.2 1274.7,528.4 1264.3,524.2" fill="#8c2826" stroke="#141414" stroke-width="0.9" stroke-linejoin="round"/>
<polygon points="1274.7,526.2 1353.6,493.7 1353.6,495.7 1274.7,528.4" fill="#741f1f" stroke="#141414" stroke-width="0.9" stroke-linejoin="round"/>
<polyline points="1272.3,521.7 1344.2,491.4" fill="none" stroke="#141414" stroke-width="0.5"/>
<circle cx="1275.2" cy="522.2" r="0.7" fill="#1a0808"/>
<polygon points="1412.3,487.2 1559.9,563.9 1566.1,566.9 1642.1,529.5 1642.8,532.5 1566.6,569.9 1559.9,567.4 1413.0,490.7" fill="#8c2826" stroke="#141414" stroke-width="0.9" stroke-linejoin="round"/>
<polygon points="1439.2,491.7 1490.2,472.3 1491.5,476.0 1441.7,494.7" fill="#741f1f"/>
<polygon points="1490.2,472.3 1608.5,527.1 1604.7,527.6 1491.5,476.0" fill="#741f1f"/>
<path d="M1412.3,487.2 L1489.0,455.4 L1491.5,454.9 L1525.8,471.8 L1526.3,474.3 L1520.1,477.8 L1598.5,512.6 L1603.0,508.4 L1642.1,527.6 L1642.8,530.8 L1566.1,566.9 L1559.9,564.4 L1414.3,491.0Z M1441.7,494.7 L1491.5,476.0 L1604.7,527.6 L1548.7,550.7Z" fill="#aa3633" fill-rule="evenodd" stroke="#141414" stroke-width="0.9" stroke-linejoin="round"/>
<polyline points="1437.9,491.0 1490.2,471.0 1611.0,527.1 1550.0,555.7 1437.9,491.0" fill="none" stroke="#141414" stroke-width="0.6"/>
<polyline points="1566.1,566.9 1642.1,529.5" fill="none" stroke="#141414" stroke-width="0.6"/>
<circle cx="1500.9" cy="466.1" r="0.7" fill="#1a0808"/>
<circle cx="1549.2" cy="497.7" r="0.7" fill="#1a0808"/>
<circle cx="1618.9" cy="522.1" r="0.7" fill="#1a0808"/>
<circle cx="1557.4" cy="550.0" r="0.7" fill="#1a0808"/>
<circle cx="1439.7" cy="491.7" r="0.7" fill="#1a0808"/>
<polygon points="1534.0,441.1 1538.9,440.3 1563.7,454.7 1571.2,456.0 1571.2,462.2 1648.1,491.9 1651.8,495.7 1684.0,508.1 1681.6,527.2 1650.5,513.8 1641.9,517.2 1551.3,474.6 1551.8,464.7 1534.0,457.2" fill="#8a2a28" stroke="#141414" stroke-width="0.9" stroke-linejoin="round"/>
<polygon points="1534.0,441.1 1538.9,440.3 1563.7,454.7 1571.2,456.0 1571.2,462.2 1648.1,491.9 1651.8,495.7 1684.0,508.1 1682.8,509.8 1650.5,497.4 1643.1,498.9 1551.8,460.2 1563.7,456.7 1535.2,442.8" fill="#aa3633" stroke="#141414" stroke-width="0.9" stroke-linejoin="round"/>
<polyline points="1551.8,460.2 1551.3,474.6" fill="none" stroke="#141414" stroke-width="0.6"/>
<polyline points="1643.1,498.9 1641.9,517.2" fill="none" stroke="#141414" stroke-width="0.6"/>
<polyline points="1650.5,497.4 1650.5,513.8" fill="none" stroke="#141414" stroke-width="0.6"/>
<polygon points="1643.1,498.9 1650.5,497.4 1650.5,513.8 1641.9,517.2" fill="#741f1f" stroke="#141414" stroke-width="0.6" stroke-linejoin="round"/>
<polygon points="1311.9,556.0 1444.7,629.6 1444.7,633.4 1312.4,558.9" fill="#8c2826" stroke="#141414" stroke-width="0.9" stroke-linejoin="round"/>
<polygon points="1445.9,632.1 1535.2,588.7 1535.2,591.7 1445.9,635.3" fill="#8c2826" stroke="#141414" stroke-width="0.9" stroke-linejoin="round"/>
<polygon points="1453.3,629.6 1462.0,625.9 1462.0,628.4 1454.6,631.3" fill="#5c1717"/>
<polygon points="1519.1,596.6 1524.0,594.4 1524.0,596.6 1520.1,598.6" fill="#5c1717"/>
<polygon points="1311.9,555.9 1401.2,518.3 1420.1,530 1413.8,534.4 1422.9,538.9 1495.7,577.9 1504.8,572.7 1535.2,588.7 1445.5,631.5" fill="#aa3633" stroke="#141414" stroke-width="0.9" stroke-linejoin="round"/>
<polygon points="1420.1,530 1429.2,534.4 1428.1,536.3 1422.9,538.9 1413.8,534.4" fill="#8c2826" stroke="#141414" stroke-width="0.7"/>
<polyline points="1325.6,554.0 1401.3,522.2 1413.7,529.7" fill="none" stroke="#141414" stroke-width="0.6"/>
<polyline points="1325.6,554.0 1445.9,621.4" fill="none" stroke="#141414" stroke-width="0.6"/>
<polyline points="1447.1,627.1 1529.0,588.2 1505.4,575.0" fill="none" stroke="#141414" stroke-width="0.6"/>
<circle cx="1527.8" cy="588.7" r="0.7" fill="#1a0808"/>
<circle cx="1453.3" cy="623.4" r="0.7" fill="#1a0808"/>
<polygon points="1619.5,596.1 1701.4,558.4 1702.6,561.4 1701.4,580.0 1620.8,617.2 1618.3,616.0" fill="#8a2a28" stroke="#141414" stroke-width="0.9" stroke-linejoin="round"/>
<polygon points="1619.5,596.1 1701.4,558.4 1702.6,561.4 1622.0,599.1" fill="#aa3633" stroke="#141414" stroke-width="0.9" stroke-linejoin="round"/>
<polyline points="1622.0,599.1 1620.8,617.2" fill="none" stroke="#141414" stroke-width="0.6"/>
<polygon points="1504.2,653.2 1584.8,614.7 1600.4,622.2 1516.6,662.6" fill="#aa3633" stroke="#141414" stroke-width="0.9" stroke-linejoin="round"/>
<polygon points="1504.2,653.2 1516.6,662.6 1516.6,665.6 1511.6,661.1 1505.4,656.9" fill="#8c2826" stroke="#141414" stroke-width="0.9" stroke-linejoin="round"/>
<polygon points="1516.6,662.6 1600.4,622.2 1599.7,625.4 1516.6,665.6" fill="#741f1f" stroke="#141414" stroke-width="0.9" stroke-linejoin="round"/>
<polyline points="1512.9,654.4 1587.3,618.4" fill="none" stroke="#141414" stroke-width="0.5"/>
<circle cx="1512.1" cy="653.2" r="0.7" fill="#1a0808"/>
<polygon points="1271.0,560.9 1284.2,555.5 1286.1,557.9 1286.1,567.9 1277.2,565.1" fill="#5d5b56" stroke="#141414" stroke-width="0.9" stroke-linejoin="round"/>
<polygon points="1254.9,557.2 1271.0,560.9 1402.5,636.3 1397.8,638.3" fill="#55534f" stroke="#141414" stroke-width="0.9" stroke-linejoin="round"/>
<polygon points="1254.9,557.2 1397.8,638.3 1398.8,657.2 1254.4,575.1" fill="#4a4845" stroke="#141414" stroke-width="0.9" stroke-linejoin="round"/>
<polygon points="1397.8,638.3 1413.7,630.9 1417.4,632.4 1402.5,640.3" fill="#6a6862" stroke="#141414" stroke-width="0.9" stroke-linejoin="round"/>
<polygon points="1402.5,640.3 1417.4,632.4 1416.6,647.0 1403.7,655.2 1398.8,657.2 1397.8,638.3" fill="#403e3b" stroke="#141414" stroke-width="0.9" stroke-linejoin="round"/>
<polyline points="1402.5,640.3 1403.7,655.2" fill="none" stroke="#141414" stroke-width="0.6"/>
<circle cx="1258.6" cy="571.8" r="0.7" fill="#151515"/>
<circle cx="1297.6" cy="583.7" r="0.7" fill="#151515"/>
<circle cx="1307.5" cy="596.6" r="0.7" fill="#151515"/>
<circle cx="1350.9" cy="621.4" r="0.7" fill="#151515"/>
<circle cx="1376.0" cy="635.3" r="0.7" fill="#151515"/>
<circle cx="1385.1" cy="640.3" r="0.7" fill="#151515"/>
<polygon points="1268.5,598.6 1273.5,594.4 1320.6,620.5 1320.6,625.9 1311.9,627.9 1269.3,604.1" fill="#5c5a55" stroke="#141414" stroke-width="0.9" stroke-linejoin="round"/>
<polygon points="1271.8,599.1 1274.7,597.4 1277.2,598.9 1274.2,600.6" fill="#77756f" stroke="#141414" stroke-width="0.4" stroke-linejoin="round"/>
<polygon points="1271.8,599.1 1274.2,600.6 1274.2,604.6 1271.8,602.8" fill="#3c3a37" stroke="#141414" stroke-width="0.4" stroke-linejoin="round"/>
<polygon points="1276.3,601.7 1279.3,599.9 1281.8,601.4 1278.8,603.1" fill="#77756f" stroke="#141414" stroke-width="0.4" stroke-linejoin="round"/>
<polygon points="1276.3,601.7 1278.8,603.1 1278.8,607.1 1276.3,605.4" fill="#3c3a37" stroke="#141414" stroke-width="0.4" stroke-linejoin="round"/>
<polygon points="1280.9,604.2 1283.9,602.4 1286.4,603.9 1283.4,605.7" fill="#77756f" stroke="#141414" stroke-width="0.4" stroke-linejoin="round"/>
<polygon points="1280.9,604.2 1283.4,605.7 1283.4,609.6 1280.9,607.9" fill="#3c3a37" stroke="#141414" stroke-width="0.4" stroke-linejoin="round"/>
<polygon points="1285.5,606.7 1288.5,605.0 1291.0,606.5 1288.0,608.2" fill="#77756f" stroke="#141414" stroke-width="0.4" stroke-linejoin="round"/>
<polygon points="1285.5,606.7 1288.0,608.2 1288.0,612.2 1285.5,610.4" fill="#3c3a37" stroke="#141414" stroke-width="0.4" stroke-linejoin="round"/>
<polygon points="1290.1,609.2 1293.1,607.5 1295.6,609.0 1292.6,610.7" fill="#77756f" stroke="#141414" stroke-width="0.4" stroke-linejoin="round"/>
<polygon points="1290.1,609.2 1292.6,610.7 1292.6,614.7 1290.1,613.0" fill="#3c3a37" stroke="#141414" stroke-width="0.4" stroke-linejoin="round"/>
<polygon points="1294.7,611.8 1297.7,610.0 1300.2,611.5 1297.2,613.3" fill="#77756f" stroke="#141414" stroke-width="0.4" stroke-linejoin="round"/>
<polygon points="1294.7,611.8 1297.2,613.3 1297.2,617.2 1294.7,615.5" fill="#3c3a37" stroke="#141414" stroke-width="0.4" stroke-linejoin="round"/>
<polygon points="1299.3,614.3 1302.3,612.6 1304.8,614.1 1301.8,615.8" fill="#77756f" stroke="#141414" stroke-width="0.4" stroke-linejoin="round"/>
<polygon points="1299.3,614.3 1301.8,615.8 1301.8,619.8 1299.3,618.0" fill="#3c3a37" stroke="#141414" stroke-width="0.4" stroke-linejoin="round"/>
<polygon points="1303.9,616.8 1306.9,615.1 1309.3,616.6 1306.4,618.3" fill="#77756f" stroke="#141414" stroke-width="0.4" stroke-linejoin="round"/>
<polygon points="1303.9,616.8 1306.4,618.3 1306.4,622.3 1303.9,620.6" fill="#3c3a37" stroke="#141414" stroke-width="0.4" stroke-linejoin="round"/>
<polygon points="1308.5,619.4 1311.4,617.6 1313.9,619.1 1311.0,620.9" fill="#77756f" stroke="#141414" stroke-width="0.4" stroke-linejoin="round"/>
<polygon points="1308.5,619.4 1311.0,620.9 1311.0,624.8 1308.5,623.1" fill="#3c3a37" stroke="#141414" stroke-width="0.4" stroke-linejoin="round"/>
<polygon points="1313.1,621.9 1316.0,620.2 1318.5,621.6 1315.5,623.4" fill="#77756f" stroke="#141414" stroke-width="0.4" stroke-linejoin="round"/>
<polygon points="1313.1,621.9 1315.5,623.4 1315.5,627.4 1313.1,625.6" fill="#3c3a37" stroke="#141414" stroke-width="0.4" stroke-linejoin="round"/>
<polygon points="1323.1,628.4 1327.3,625.4 1341.7,633.4 1341.7,638.8 1334.3,640.8 1332.3,638.3 1326.8,636.3 1323.9,635.3" fill="#5c5a55" stroke="#141414" stroke-width="0.9" stroke-linejoin="round"/>
<polygon points="1323.1,628.4 1329.3,631.6 1329.3,635.8 1323.9,635.3" fill="#3c3a37" stroke="#141414" stroke-width="0.4" stroke-linejoin="round"/>
<polygon points="1343.0,638.3 1347.2,636.3 1371.5,652.0 1371.0,658.7 1364.0,660.2 1343.7,647.0" fill="#4a4845" stroke="#141414" stroke-width="0.9" stroke-linejoin="round"/>
<polygon points="1345.4,640.8 1352.9,645.3 1352.9,649.5 1345.4,645.3" fill="#2f2e2c" stroke="#141414" stroke-width="0.4" stroke-linejoin="round"/>
<polygon points="1356.6,647.7 1364.0,652.2 1364.0,656.2 1356.6,652.0" fill="#2f2e2c" stroke="#141414" stroke-width="0.4" stroke-linejoin="round"/>
<polygon points="1233.1,610.0 1237.7,607.9 1314.7,653.0 1317.5,656.6 1311.5,658.7 1235.7,616.5" fill="#aa3633" stroke="#141414" stroke-width="0.9" stroke-linejoin="round"/>
<polygon points="1235.7,616.5 1311.1,658.7 1310.4,673.0 1235.3,625.1" fill="#8a2a28" stroke="#141414" stroke-width="0.9" stroke-linejoin="round"/>
<polygon points="1311.5,658.7 1317.5,656.6 1316.1,671.6 1310.4,673.3" fill="#8c2826" stroke="#141414" stroke-width="0.9" stroke-linejoin="round"/>
<polygon points="1233.1,610.0 1235.7,616.5 1235.3,625.8 1231.7,625.8" fill="#741f1f" stroke="#141414" stroke-width="0.9" stroke-linejoin="round"/>
<polygon points="1244.6,612.9 1248.8,611.5 1313.3,650.1 1311.5,653.0" fill="#1c1010"/>
<polyline points="1235.7,616.5 1311.5,658.7" fill="none" stroke="#141414" stroke-width="0.6"/>
<polygon points="1205.2,624.3 1280.6,670.9 1280.0,684.5 1203.8,637.9" fill="#8a2a28" stroke="#141414" stroke-width="0.9" stroke-linejoin="round"/>
<polygon points="1205.2,623.2 1207.1,622.9 1282.5,669.9 1280.6,671.3" fill="#2a1414" stroke="#141414" stroke-width="0.9" stroke-linejoin="round"/>
<polygon points="1280.6,671.3 1282.5,669.9 1281.8,685.6 1280.0,684.5" fill="#8c2826" stroke="#141414" stroke-width="0.9" stroke-linejoin="round"/>
<polygon points="1116.9,607.9 1132.6,601.7 1278.6,692.8 1265.7,698.5" fill="#aa3633" stroke="#141414" stroke-width="0.9" stroke-linejoin="round"/>
<polyline points="1126.5,604.3 1273.9,695.2" fill="none" stroke="#141414" stroke-width="0.6"/>
<polyline points="1129.3,603.2 1276.3,693.8" fill="none" stroke="#141414" stroke-width="0.6"/>
<polyline points="1175.9,635.8 1180.1,633.7" fill="none" stroke="#141414" stroke-width="0.5"/>
<polyline points="1241.0,677.3 1247.4,675.2" fill="none" stroke="#141414" stroke-width="0.5"/>
<polygon points="1116.9,607.9 1265.7,698.5 1266.7,718.1 1262.9,726.0 1232.4,707.4 1233.1,690.2 1163.7,647.2 1163.0,655.8 1158.0,658.7 1116.0,631.5" fill="#8c2725" stroke="#141414" stroke-width="0.9" stroke-linejoin="round"/>
<polygon points="1265.7,698.5 1278.6,692.8 1279.2,718.8 1263.2,726.0 1266.7,718.1" fill="#8a2523" stroke="#141414" stroke-width="0.9" stroke-linejoin="round"/>
<polygon points="1125.0,616.5 1155.8,634.4 1155.1,655.1 1125.5,635.8" fill="url(#grill)" stroke="#3a0c0c" stroke-width="0.5" stroke-linejoin="round"/>
<circle cx="1120.9" cy="622.9" r="1.4" fill="#7a2120" stroke="#141414" stroke-width="0.7"/>
<polygon points="1167.3,642.1 1169.4,643.4 1169.4,648.8 1167.3,647.5" fill="#4a1010" stroke="#2a0808" stroke-width="0.4" stroke-linejoin="round"/>
<polygon points="1171.2,644.5 1173.4,645.8 1173.4,651.2 1171.2,649.9" fill="#4a1010" stroke="#2a0808" stroke-width="0.4" stroke-linejoin="round"/>
<polygon points="1175.1,646.9 1177.3,648.2 1177.3,653.6 1175.1,652.3" fill="#4a1010" stroke="#2a0808" stroke-width="0.4" stroke-linejoin="round"/>
<polygon points="1179.1,649.3 1181.2,650.6 1181.2,656.0 1179.1,654.7" fill="#4a1010" stroke="#2a0808" stroke-width="0.4" stroke-linejoin="round"/>
<polygon points="1183.0,651.7 1185.2,653.0 1185.2,658.4 1183.0,657.2" fill="#4a1010" stroke="#2a0808" stroke-width="0.4" stroke-linejoin="round"/>
<polygon points="1186.9,654.1 1189.1,655.4 1189.1,660.8 1186.9,659.6" fill="#4a1010" stroke="#2a0808" stroke-width="0.4" stroke-linejoin="round"/>
<polygon points="1190.9,656.5 1193.0,657.8 1193.0,663.3 1190.9,662.0" fill="#4a1010" stroke="#2a0808" stroke-width="0.4" stroke-linejoin="round"/>
<polygon points="1194.8,658.9 1197.0,660.2 1197.0,665.7 1194.8,664.4" fill="#4a1010" stroke="#2a0808" stroke-width="0.4" stroke-linejoin="round"/>
<polygon points="1198.8,661.3 1200.9,662.6 1200.9,668.1 1198.8,666.8" fill="#4a1010" stroke="#2a0808" stroke-width="0.4" stroke-linejoin="round"/>
<polygon points="1202.7,663.7 1204.8,665.0 1204.8,670.5 1202.7,669.2" fill="#4a1010" stroke="#2a0808" stroke-width="0.4" stroke-linejoin="round"/>
<polygon points="1206.6,666.1 1208.8,667.4 1208.8,672.9 1206.6,671.6" fill="#4a1010" stroke="#2a0808" stroke-width="0.4" stroke-linejoin="round"/>
<polygon points="1220.2,674.7 1222.8,676.3 1222.8,682.7 1220.2,681.2" fill="#4a1010" stroke="#2a0808" stroke-width="0.4" stroke-linejoin="round"/>
<polygon points="1227.4,679.0 1230.0,680.6 1230.0,687.0 1227.4,685.5" fill="#4a1010" stroke="#2a0808" stroke-width="0.4" stroke-linejoin="round"/>
<polyline points="1237.7,688.8 1263.2,704.5 1263.2,715.9 1237.4,700.9 1237.7,688.8" fill="none" stroke="#141414" stroke-width="0.8"/>
<polygon points="1239.5,691.6 1247.4,696.2 1247.1,700.9 1239.5,696.6" fill="#6a1b1b" stroke="#141414" stroke-width="0.5" stroke-linejoin="round"/>
<polygon points="1251.7,698.5 1261.4,704.2 1261.4,709.5 1251.7,703.8" fill="#6a1b1b" stroke="#141414" stroke-width="0.5" stroke-linejoin="round"/>
<polygon points="1239.5,700.2 1251.7,707.4 1251.7,710.9 1239.5,704.2" fill="#6a1b1b" stroke="#141414" stroke-width="0.5" stroke-linejoin="round"/>
<polygon points="1253.9,708.8 1262.4,713.8 1262.4,716.7 1253.9,711.9" fill="#6a1b1b" stroke="#141414" stroke-width="0.5" stroke-linejoin="round"/>
<polyline points="1158.0,632.9 1158.0,658.7" fill="none" stroke="#141414" stroke-width="0.6"/>
<polygon points="406.9,584.6 501.8,671.6 501.8,678.6 407.2,589.6" fill="#8c2826" stroke="#141414" stroke-width="0.9" stroke-linejoin="round"/>
<polygon points="501.8,671.6 590.7,634.6 590.7,640.0 501.8,678.6" fill="#9a302e" stroke="#141414" stroke-width="0.9" stroke-linejoin="round"/>
<path d="M406.9,584.6 L490.8,550.4 L590.7,634.6 L501.8,671.6Z M441.6,588.8 L474.4,568.7 L537.7,620.1 L522.4,627.0 L520.5,625.5 L501.8,634.3 L493.9,625.8 L486.6,628.8Z M490.4,567.2 L495.7,565.2 L526.3,589.6 L520.9,591.9Z M543.8,614.8 L549.9,612.0 L553.0,614.0 L546.9,617.1Z M540.0,632.3 L546.9,630.0 L556.8,639.2 L549.9,642.3Z M520.2,645.3 L524.7,642.6 L527.0,644.1 L532.4,641.5 L537.7,646.8 L534.2,649.1 L536.2,651.4 L530.1,653.7 L527.8,651.1 L522.9,652.6 L519.4,648.7 L522.4,647.1Z" fill="#ad3835" fill-rule="evenodd" stroke="#141414" stroke-width="0.9" stroke-linejoin="round"/>
<polyline points="424.8,579.4 488.9,553.4 575.1,627.8 570.5,630.0 556.8,623.2 553.7,624.7 569.0,640.0 517.1,661.3 425.5,580.0" fill="none" stroke="#141414" stroke-width="0.7"/>
<polyline points="422.5,578.2 501.8,652.9 506.4,669.7" fill="none" stroke="#141414" stroke-width="0.6"/>
<polygon points="440.0,576.6 471.3,563.7 474.4,568.7 441.6,588.8 440.8,585.8 446.1,584.3 444.6,581.5" fill="#741f1f" stroke="#141414" stroke-width="0.5" stroke-linejoin="round"/>
<polygon points="485.8,562.9 492.7,560.1 495.7,565.2 490.4,567.2" fill="#741f1f" stroke="#141414" stroke-width="0.5" stroke-linejoin="round"/>
<polygon points="540.0,610.5 546.1,607.9 549.9,612.0 543.8,614.8" fill="#741f1f" stroke="#141414" stroke-width="0.5" stroke-linejoin="round"/>
<polygon points="537.7,630.0 544.6,627.3 546.9,630.0 540.0,632.3" fill="#741f1f" stroke="#141414" stroke-width="0.5" stroke-linejoin="round"/>
<polygon points="516.3,640.0 524.7,636.5 532.4,641.5 527.0,644.1 524.7,642.6 520.2,645.3" fill="#741f1f" stroke="#141414" stroke-width="0.5" stroke-linejoin="round"/>
<circle cx="439.6" cy="583.0" r="0.6" fill="#1a0808"/>
<circle cx="517.9" cy="631.1" r="0.6" fill="#1a0808"/>
<polygon points="456.1,672.0 462.2,669.7 474.4,678.1 475.9,688.0 471.3,688.8 456.8,675.8" fill="#3a3936" stroke="#141414" stroke-width="0.9" stroke-linejoin="round"/>
<polygon points="456.1,672.0 462.2,669.7 474.4,678.1 468.6,680.4" fill="#55534e" stroke="#141414" stroke-width="0.5" stroke-linejoin="round"/>
<polygon points="670.3,837.2 804.3,962.5 804.3,964.9 670.7,840.1" fill="#8c2826" stroke="#141414" stroke-width="0.9" stroke-linejoin="round"/>
<polygon points="804.3,962.5 903.3,907.6 902.1,912.4 895.0,921.9 804.3,964.9" fill="#8c2826" stroke="#141414" stroke-width="0.9" stroke-linejoin="round"/>
<polyline points="804.3,963.7 896.1,917.2" fill="none" stroke="#141414" stroke-width="0.5"/>
<polygon points="670.3,837.2 766.1,790.0 903.3,907.6 804.3,962.5" fill="#ab3532" stroke="#141414" stroke-width="0.9" stroke-linejoin="round"/>
<clipPath id="n1c"><polygon points="670.3,837.2 766.1,790.0 903.3,907.6 804.3,962.5"/></clipPath><g clip-path="url(#n1c)" fill="none"><use href="#gmaj" transform="translate(0,140)" stroke="#3a0a0a" stroke-opacity=".45" stroke-width="0.8"/><use href="#gmin" transform="translate(0,140)" stroke="#3a0a0a" stroke-opacity=".12" stroke-width="0.8"/></g>
<circle cx="685.0" cy="838.9" r="1.0" fill="#1a0808"/>
<circle cx="761.9" cy="801.0" r="1.0" fill="#1a0808"/>
<circle cx="821.5" cy="852.3" r="1.0" fill="#1a0808"/>
<circle cx="743.0" cy="892.8" r="1.0" fill="#1a0808"/>
<circle cx="884.9" cy="908.1" r="1.0" fill="#1a0808"/>
<circle cx="804.8" cy="951.0" r="1.0" fill="#1a0808"/>
<polygon points="544.1,897.1 619.5,974.9 628.4,970.4 669.8,1013.1 717.7,987.1 717.7,989.5 669.8,1015.5 628.4,972.8 619.5,977.4 544.1,899.3" fill="#5d5b55" stroke="#141414" stroke-width="0.6" stroke-linejoin="round"/>
<polygon points="544.1,897.1 551.4,888.6 554.9,890.6 617.9,859.4 669.5,907.6 669.5,909.7 653.6,919.0 674.7,944.9 690.9,931.9 707.9,947.0 707.9,949.0 688.5,957.4 717.7,987.1 669.8,1013.1 628.4,970.4 619.5,974.9" fill="#837f77" stroke="#141414" stroke-width="0.9" stroke-linejoin="round"/>
<polygon points="669.5,907.6 669.5,909.7 653.6,919.4 653.6,919.0" fill="#6f6d66" stroke="#141414" stroke-width="0.5" stroke-linejoin="round"/>
<polygon points="707.9,947.0 707.9,949.0 688.5,958.4 688.5,957.4" fill="#6f6d66" stroke="#141414" stroke-width="0.5" stroke-linejoin="round"/>
<polygon points="583.3,866.4 589.5,872.2 589.8,868.8 585.4,864.8" fill="#3b3a37" stroke="#1c1c1a" stroke-width="0.45" stroke-linejoin="round"/>
<polygon points="589.5,872.2 597.3,867.7 595.2,865.7 589.8,868.8" fill="#55534e" stroke="#1c1c1a" stroke-width="0.45" stroke-linejoin="round"/>
<polygon points="585.4,864.8 589.8,868.8 595.2,865.7 590.8,861.7" fill="#908d85" stroke="#1c1c1a" stroke-width="0.45" stroke-linejoin="round"/>
<polygon points="589.8,872.4 596.0,878.2 596.3,874.8 591.9,870.9" fill="#3b3a37" stroke="#1c1c1a" stroke-width="0.45" stroke-linejoin="round"/>
<polygon points="596.0,878.2 603.8,873.9 601.7,871.7 596.3,874.8" fill="#55534e" stroke="#1c1c1a" stroke-width="0.45" stroke-linejoin="round"/>
<polygon points="591.9,870.9 596.3,874.8 601.7,871.7 597.3,867.8" fill="#908d85" stroke="#1c1c1a" stroke-width="0.45" stroke-linejoin="round"/>
<polygon points="596.3,878.6 602.5,884.4 602.8,881.0 598.4,876.9" fill="#3b3a37" stroke="#1c1c1a" stroke-width="0.45" stroke-linejoin="round"/>
<polygon points="602.5,884.4 610.3,879.9 608.1,877.9 602.8,881.0" fill="#55534e" stroke="#1c1c1a" stroke-width="0.45" stroke-linejoin="round"/>
<polygon points="598.4,876.9 602.8,881.0 608.1,877.9 603.8,873.9" fill="#908d85" stroke="#1c1c1a" stroke-width="0.45" stroke-linejoin="round"/>
<polygon points="602.8,884.6 609.0,890.4 609.3,887.0 604.9,883.1" fill="#3b3a37" stroke="#1c1c1a" stroke-width="0.45" stroke-linejoin="round"/>
<polygon points="609.0,890.4 616.7,886.0 614.6,883.9 609.3,887.0" fill="#55534e" stroke="#1c1c1a" stroke-width="0.45" stroke-linejoin="round"/>
<polygon points="604.9,883.1 609.3,887.0 614.6,883.9 610.3,880.0" fill="#908d85" stroke="#1c1c1a" stroke-width="0.45" stroke-linejoin="round"/>
<polygon points="609.3,890.7 615.5,896.6 615.8,893.2 611.4,889.1" fill="#3b3a37" stroke="#1c1c1a" stroke-width="0.45" stroke-linejoin="round"/>
<polygon points="615.5,896.6 623.2,892.0 621.1,890.1 615.8,893.2" fill="#55534e" stroke="#1c1c1a" stroke-width="0.45" stroke-linejoin="round"/>
<polygon points="611.4,889.1 615.8,893.2 621.1,890.1 616.7,886.0" fill="#908d85" stroke="#1c1c1a" stroke-width="0.45" stroke-linejoin="round"/>
<polygon points="615.8,896.7 621.9,902.6 622.3,899.2 617.9,895.3" fill="#3b3a37" stroke="#1c1c1a" stroke-width="0.45" stroke-linejoin="round"/>
<polygon points="621.9,902.6 629.7,898.2 627.6,896.1 622.3,899.2" fill="#55534e" stroke="#1c1c1a" stroke-width="0.45" stroke-linejoin="round"/>
<polygon points="617.9,895.3 622.3,899.2 627.6,896.1 623.2,892.2" fill="#908d85" stroke="#1c1c1a" stroke-width="0.45" stroke-linejoin="round"/>
<polygon points="622.3,902.9 628.4,908.7 628.8,905.3 624.4,901.3" fill="#3b3a37" stroke="#1c1c1a" stroke-width="0.45" stroke-linejoin="round"/>
<polygon points="628.4,908.7 636.2,904.2 634.1,902.2 628.8,905.3" fill="#55534e" stroke="#1c1c1a" stroke-width="0.45" stroke-linejoin="round"/>
<polygon points="624.4,901.3 628.8,905.3 634.1,902.2 629.7,898.2" fill="#908d85" stroke="#1c1c1a" stroke-width="0.45" stroke-linejoin="round"/>
<polygon points="628.8,908.9 634.9,914.7 635.2,911.3 630.9,907.4" fill="#3b3a37" stroke="#1c1c1a" stroke-width="0.45" stroke-linejoin="round"/>
<polygon points="634.9,914.7 642.7,910.4 640.6,908.3 635.2,911.3" fill="#55534e" stroke="#1c1c1a" stroke-width="0.45" stroke-linejoin="round"/>
<polygon points="630.9,907.4 635.2,911.3 640.6,908.3 636.2,904.4" fill="#908d85" stroke="#1c1c1a" stroke-width="0.45" stroke-linejoin="round"/>
<polygon points="635.2,915.1 641.4,920.9 641.7,917.5 637.4,913.4" fill="#3b3a37" stroke="#1c1c1a" stroke-width="0.45" stroke-linejoin="round"/>
<polygon points="641.4,920.9 649.2,916.4 647.1,914.4 641.7,917.5" fill="#55534e" stroke="#1c1c1a" stroke-width="0.45" stroke-linejoin="round"/>
<polygon points="637.4,913.4 641.7,917.5 647.1,914.4 642.7,910.4" fill="#908d85" stroke="#1c1c1a" stroke-width="0.45" stroke-linejoin="round"/>
<polygon points="641.7,921.1 647.9,926.9 648.2,923.5 643.8,919.6" fill="#3b3a37" stroke="#1c1c1a" stroke-width="0.45" stroke-linejoin="round"/>
<polygon points="647.9,926.9 655.7,922.5 653.6,920.4 648.2,923.5" fill="#55534e" stroke="#1c1c1a" stroke-width="0.45" stroke-linejoin="round"/>
<polygon points="643.8,919.6 648.2,923.5 653.6,920.4 649.2,916.5" fill="#908d85" stroke="#1c1c1a" stroke-width="0.45" stroke-linejoin="round"/>
<polygon points="648.2,927.2 654.4,933.1 654.7,929.7 650.3,925.6" fill="#3b3a37" stroke="#1c1c1a" stroke-width="0.45" stroke-linejoin="round"/>
<polygon points="654.4,933.1 662.2,928.5 660.1,926.6 654.7,929.7" fill="#55534e" stroke="#1c1c1a" stroke-width="0.45" stroke-linejoin="round"/>
<polygon points="650.3,925.6 654.7,929.7 660.1,926.6 655.7,922.5" fill="#908d85" stroke="#1c1c1a" stroke-width="0.45" stroke-linejoin="round"/>
<polygon points="654.7,933.2 660.9,939.1 661.2,935.7 656.8,931.8" fill="#3b3a37" stroke="#1c1c1a" stroke-width="0.45" stroke-linejoin="round"/>
<polygon points="660.9,939.1 668.7,934.7 666.6,932.6 661.2,935.7" fill="#55534e" stroke="#1c1c1a" stroke-width="0.45" stroke-linejoin="round"/>
<polygon points="656.8,931.8 661.2,935.7 666.6,932.6 662.2,928.7" fill="#908d85" stroke="#1c1c1a" stroke-width="0.45" stroke-linejoin="round"/>
<polygon points="661.2,939.4 667.4,945.2 667.7,941.8 663.3,937.8" fill="#3b3a37" stroke="#1c1c1a" stroke-width="0.45" stroke-linejoin="round"/>
<polygon points="667.4,945.2 675.2,940.7 673.1,938.8 667.7,941.8" fill="#55534e" stroke="#1c1c1a" stroke-width="0.45" stroke-linejoin="round"/>
<polygon points="663.3,937.8 667.7,941.8 673.1,938.8 668.7,934.7" fill="#908d85" stroke="#1c1c1a" stroke-width="0.45" stroke-linejoin="round"/>
<polygon points="667.7,945.4 673.9,951.2 674.2,947.8 669.8,943.9" fill="#3b3a37" stroke="#1c1c1a" stroke-width="0.45" stroke-linejoin="round"/>
<polygon points="673.9,951.2 681.7,946.9 679.5,944.8 674.2,947.8" fill="#55534e" stroke="#1c1c1a" stroke-width="0.45" stroke-linejoin="round"/>
<polygon points="669.8,943.9 674.2,947.8 679.5,944.8 675.2,940.9" fill="#908d85" stroke="#1c1c1a" stroke-width="0.45" stroke-linejoin="round"/>
<polygon points="575.2,871.1 581.4,876.9 581.7,873.5 577.3,869.5" fill="#3b3a37" stroke="#1c1c1a" stroke-width="0.45" stroke-linejoin="round"/>
<polygon points="581.4,876.9 589.2,872.4 587.1,870.4 581.7,873.5" fill="#55534e" stroke="#1c1c1a" stroke-width="0.45" stroke-linejoin="round"/>
<polygon points="577.3,869.5 581.7,873.5 587.1,870.4 582.7,866.4" fill="#908d85" stroke="#1c1c1a" stroke-width="0.45" stroke-linejoin="round"/>
<polygon points="581.7,877.1 587.9,882.9 588.2,879.5 583.8,875.6" fill="#3b3a37" stroke="#1c1c1a" stroke-width="0.45" stroke-linejoin="round"/>
<polygon points="587.9,882.9 595.7,878.6 593.5,876.4 588.2,879.5" fill="#55534e" stroke="#1c1c1a" stroke-width="0.45" stroke-linejoin="round"/>
<polygon points="583.8,875.6 588.2,879.5 593.5,876.4 589.2,872.6" fill="#908d85" stroke="#1c1c1a" stroke-width="0.45" stroke-linejoin="round"/>
<polygon points="588.2,883.3 594.4,889.1 594.7,885.7 590.3,881.6" fill="#3b3a37" stroke="#1c1c1a" stroke-width="0.45" stroke-linejoin="round"/>
<polygon points="594.4,889.1 602.1,884.6 600.0,882.6 594.7,885.7" fill="#55534e" stroke="#1c1c1a" stroke-width="0.45" stroke-linejoin="round"/>
<polygon points="590.3,881.6 594.7,885.7 600.0,882.6 595.7,878.6" fill="#908d85" stroke="#1c1c1a" stroke-width="0.45" stroke-linejoin="round"/>
<polygon points="594.7,889.3 600.8,895.1 601.2,891.7 596.8,887.8" fill="#3b3a37" stroke="#1c1c1a" stroke-width="0.45" stroke-linejoin="round"/>
<polygon points="600.8,895.1 608.6,890.7 606.5,888.6 601.2,891.7" fill="#55534e" stroke="#1c1c1a" stroke-width="0.45" stroke-linejoin="round"/>
<polygon points="596.8,887.8 601.2,891.7 606.5,888.6 602.1,884.7" fill="#908d85" stroke="#1c1c1a" stroke-width="0.45" stroke-linejoin="round"/>
<polygon points="601.2,895.4 607.3,901.3 607.7,897.9 603.3,893.8" fill="#3b3a37" stroke="#1c1c1a" stroke-width="0.45" stroke-linejoin="round"/>
<polygon points="607.3,901.3 615.1,896.7 613.0,894.8 607.7,897.9" fill="#55534e" stroke="#1c1c1a" stroke-width="0.45" stroke-linejoin="round"/>
<polygon points="603.3,893.8 607.7,897.9 613.0,894.8 608.6,890.7" fill="#908d85" stroke="#1c1c1a" stroke-width="0.45" stroke-linejoin="round"/>
<polygon points="607.7,901.4 613.8,907.3 614.2,903.9 609.8,900.0" fill="#3b3a37" stroke="#1c1c1a" stroke-width="0.45" stroke-linejoin="round"/>
<polygon points="613.8,907.3 621.6,902.9 619.5,900.8 614.2,903.9" fill="#55534e" stroke="#1c1c1a" stroke-width="0.45" stroke-linejoin="round"/>
<polygon points="609.8,900.0 614.2,903.9 619.5,900.8 615.1,896.9" fill="#908d85" stroke="#1c1c1a" stroke-width="0.45" stroke-linejoin="round"/>
<polygon points="614.2,907.6 620.3,913.4 620.6,910.0 616.3,906.0" fill="#3b3a37" stroke="#1c1c1a" stroke-width="0.45" stroke-linejoin="round"/>
<polygon points="620.3,913.4 628.1,908.9 626.0,907.0 620.6,910.0" fill="#55534e" stroke="#1c1c1a" stroke-width="0.45" stroke-linejoin="round"/>
<polygon points="616.3,906.0 620.6,910.0 626.0,907.0 621.6,902.9" fill="#908d85" stroke="#1c1c1a" stroke-width="0.45" stroke-linejoin="round"/>
<polygon points="620.6,913.6 626.8,919.4 627.1,916.0 622.8,912.1" fill="#3b3a37" stroke="#1c1c1a" stroke-width="0.45" stroke-linejoin="round"/>
<polygon points="626.8,919.4 634.6,915.1 632.5,913.0 627.1,916.0" fill="#55534e" stroke="#1c1c1a" stroke-width="0.45" stroke-linejoin="round"/>
<polygon points="622.8,912.1 627.1,916.0 632.5,913.0 628.1,909.1" fill="#908d85" stroke="#1c1c1a" stroke-width="0.45" stroke-linejoin="round"/>
<polygon points="627.1,919.8 633.3,925.6 633.6,922.2 629.2,918.1" fill="#3b3a37" stroke="#1c1c1a" stroke-width="0.45" stroke-linejoin="round"/>
<polygon points="633.3,925.6 641.1,921.1 639.0,919.1 633.6,922.2" fill="#55534e" stroke="#1c1c1a" stroke-width="0.45" stroke-linejoin="round"/>
<polygon points="629.2,918.1 633.6,922.2 639.0,919.1 634.6,915.1" fill="#908d85" stroke="#1c1c1a" stroke-width="0.45" stroke-linejoin="round"/>
<polygon points="633.6,925.8 639.8,931.6 640.1,928.2 635.7,924.3" fill="#3b3a37" stroke="#1c1c1a" stroke-width="0.45" stroke-linejoin="round"/>
<polygon points="639.8,931.6 647.6,927.2 645.5,925.1 640.1,928.2" fill="#55534e" stroke="#1c1c1a" stroke-width="0.45" stroke-linejoin="round"/>
<polygon points="635.7,924.3 640.1,928.2 645.5,925.1 641.1,921.2" fill="#908d85" stroke="#1c1c1a" stroke-width="0.45" stroke-linejoin="round"/>
<polygon points="640.1,931.9 646.3,937.8 646.6,934.4 642.2,930.3" fill="#3b3a37" stroke="#1c1c1a" stroke-width="0.45" stroke-linejoin="round"/>
<polygon points="646.3,937.8 654.1,933.2 652.0,931.3 646.6,934.4" fill="#55534e" stroke="#1c1c1a" stroke-width="0.45" stroke-linejoin="round"/>
<polygon points="642.2,930.3 646.6,934.4 652.0,931.3 647.6,927.2" fill="#908d85" stroke="#1c1c1a" stroke-width="0.45" stroke-linejoin="round"/>
<polygon points="646.6,937.9 652.8,943.8 653.1,940.4 648.7,936.5" fill="#3b3a37" stroke="#1c1c1a" stroke-width="0.45" stroke-linejoin="round"/>
<polygon points="652.8,943.8 660.6,939.4 658.4,937.3 653.1,940.4" fill="#55534e" stroke="#1c1c1a" stroke-width="0.45" stroke-linejoin="round"/>
<polygon points="648.7,936.5 653.1,940.4 658.4,937.3 654.1,933.4" fill="#908d85" stroke="#1c1c1a" stroke-width="0.45" stroke-linejoin="round"/>
<polygon points="653.1,944.1 659.3,950.0 659.6,946.5 655.2,942.5" fill="#3b3a37" stroke="#1c1c1a" stroke-width="0.45" stroke-linejoin="round"/>
<polygon points="659.3,950.0 667.0,945.4 664.9,943.5 659.6,946.5" fill="#55534e" stroke="#1c1c1a" stroke-width="0.45" stroke-linejoin="round"/>
<polygon points="655.2,942.5 659.6,946.5 664.9,943.5 660.6,939.4" fill="#908d85" stroke="#1c1c1a" stroke-width="0.45" stroke-linejoin="round"/>
<polygon points="659.6,950.1 665.8,956.0 666.1,952.5 661.7,948.7" fill="#3b3a37" stroke="#1c1c1a" stroke-width="0.45" stroke-linejoin="round"/>
<polygon points="665.8,956.0 673.5,951.6 671.4,949.5 666.1,952.5" fill="#55534e" stroke="#1c1c1a" stroke-width="0.45" stroke-linejoin="round"/>
<polygon points="661.7,948.7 666.1,952.5 671.4,949.5 667.0,945.6" fill="#908d85" stroke="#1c1c1a" stroke-width="0.45" stroke-linejoin="round"/>
<polygon points="567.1,875.8 573.3,881.6 573.6,878.2 569.2,874.2" fill="#3b3a37" stroke="#1c1c1a" stroke-width="0.45" stroke-linejoin="round"/>
<polygon points="573.3,881.6 581.1,877.1 578.9,875.2 573.6,878.2" fill="#55534e" stroke="#1c1c1a" stroke-width="0.45" stroke-linejoin="round"/>
<polygon points="569.2,874.2 573.6,878.2 578.9,875.2 574.6,871.1" fill="#908d85" stroke="#1c1c1a" stroke-width="0.45" stroke-linejoin="round"/>
<polygon points="573.6,881.8 579.8,887.6 580.1,884.2 575.7,880.3" fill="#3b3a37" stroke="#1c1c1a" stroke-width="0.45" stroke-linejoin="round"/>
<polygon points="579.8,887.6 587.5,883.3 585.4,881.2 580.1,884.2" fill="#55534e" stroke="#1c1c1a" stroke-width="0.45" stroke-linejoin="round"/>
<polygon points="575.7,880.3 580.1,884.2 585.4,881.2 581.1,877.3" fill="#908d85" stroke="#1c1c1a" stroke-width="0.45" stroke-linejoin="round"/>
<polygon points="580.1,888.0 586.2,893.8 586.6,890.4 582.2,886.3" fill="#3b3a37" stroke="#1c1c1a" stroke-width="0.45" stroke-linejoin="round"/>
<polygon points="586.2,893.8 594.0,889.3 591.9,887.3 586.6,890.4" fill="#55534e" stroke="#1c1c1a" stroke-width="0.45" stroke-linejoin="round"/>
<polygon points="582.2,886.3 586.6,890.4 591.9,887.3 587.5,883.3" fill="#908d85" stroke="#1c1c1a" stroke-width="0.45" stroke-linejoin="round"/>
<polygon points="586.6,894.0 592.7,899.8 593.1,896.4 588.7,892.5" fill="#3b3a37" stroke="#1c1c1a" stroke-width="0.45" stroke-linejoin="round"/>
<polygon points="592.7,899.8 600.5,895.4 598.4,893.3 593.1,896.4" fill="#55534e" stroke="#1c1c1a" stroke-width="0.45" stroke-linejoin="round"/>
<polygon points="588.7,892.5 593.1,896.4 598.4,893.3 594.0,889.4" fill="#908d85" stroke="#1c1c1a" stroke-width="0.45" stroke-linejoin="round"/>
<polygon points="593.1,900.1 599.2,906.0 599.5,902.6 595.2,898.5" fill="#3b3a37" stroke="#1c1c1a" stroke-width="0.45" stroke-linejoin="round"/>
<polygon points="599.2,906.0 607.0,901.4 604.9,899.5 599.5,902.6" fill="#55534e" stroke="#1c1c1a" stroke-width="0.45" stroke-linejoin="round"/>
<polygon points="595.2,898.5 599.5,902.6 604.9,899.5 600.5,895.4" fill="#908d85" stroke="#1c1c1a" stroke-width="0.45" stroke-linejoin="round"/>
<polygon points="599.5,906.1 605.7,912.0 606.0,908.6 601.7,904.7" fill="#3b3a37" stroke="#1c1c1a" stroke-width="0.45" stroke-linejoin="round"/>
<polygon points="605.7,912.0 613.5,907.6 611.4,905.5 606.0,908.6" fill="#55534e" stroke="#1c1c1a" stroke-width="0.45" stroke-linejoin="round"/>
<polygon points="601.7,904.7 606.0,908.6 611.4,905.5 607.0,901.6" fill="#908d85" stroke="#1c1c1a" stroke-width="0.45" stroke-linejoin="round"/>
<polygon points="606.0,912.3 612.2,918.1 612.5,914.7 608.1,910.7" fill="#3b3a37" stroke="#1c1c1a" stroke-width="0.45" stroke-linejoin="round"/>
<polygon points="612.2,918.1 620.0,913.6 617.9,911.7 612.5,914.7" fill="#55534e" stroke="#1c1c1a" stroke-width="0.45" stroke-linejoin="round"/>
<polygon points="608.1,910.7 612.5,914.7 617.9,911.7 613.5,907.6" fill="#908d85" stroke="#1c1c1a" stroke-width="0.45" stroke-linejoin="round"/>
<polygon points="612.5,918.3 618.7,924.2 619.0,920.7 614.6,916.9" fill="#3b3a37" stroke="#1c1c1a" stroke-width="0.45" stroke-linejoin="round"/>
<polygon points="618.7,924.2 626.5,919.8 624.4,917.7 619.0,920.7" fill="#55534e" stroke="#1c1c1a" stroke-width="0.45" stroke-linejoin="round"/>
<polygon points="614.6,916.9 619.0,920.7 624.4,917.7 620.0,913.8" fill="#908d85" stroke="#1c1c1a" stroke-width="0.45" stroke-linejoin="round"/>
<polygon points="619.0,924.5 625.2,930.3 625.5,926.9 621.1,922.9" fill="#3b3a37" stroke="#1c1c1a" stroke-width="0.45" stroke-linejoin="round"/>
<polygon points="625.2,930.3 633.0,925.8 630.9,923.8 625.5,926.9" fill="#55534e" stroke="#1c1c1a" stroke-width="0.45" stroke-linejoin="round"/>
<polygon points="621.1,922.9 625.5,926.9 630.9,923.8 626.5,919.8" fill="#908d85" stroke="#1c1c1a" stroke-width="0.45" stroke-linejoin="round"/>
<polygon points="625.5,930.5 631.7,936.3 632.0,932.9 627.6,929.0" fill="#3b3a37" stroke="#1c1c1a" stroke-width="0.45" stroke-linejoin="round"/>
<polygon points="631.7,936.3 639.5,931.9 637.4,929.8 632.0,932.9" fill="#55534e" stroke="#1c1c1a" stroke-width="0.45" stroke-linejoin="round"/>
<polygon points="627.6,929.0 632.0,932.9 637.4,929.8 633.0,925.9" fill="#908d85" stroke="#1c1c1a" stroke-width="0.45" stroke-linejoin="round"/>
<polygon points="632.0,936.6 638.2,942.5 638.5,939.1 634.1,935.0" fill="#3b3a37" stroke="#1c1c1a" stroke-width="0.45" stroke-linejoin="round"/>
<polygon points="638.2,942.5 646.0,937.9 643.8,936.0 638.5,939.1" fill="#55534e" stroke="#1c1c1a" stroke-width="0.45" stroke-linejoin="round"/>
<polygon points="634.1,935.0 638.5,939.1 643.8,936.0 639.5,931.9" fill="#908d85" stroke="#1c1c1a" stroke-width="0.45" stroke-linejoin="round"/>
<polygon points="638.5,942.6 644.7,948.5 645.0,945.1 640.6,941.2" fill="#3b3a37" stroke="#1c1c1a" stroke-width="0.45" stroke-linejoin="round"/>
<polygon points="644.7,948.5 652.4,944.1 650.3,942.0 645.0,945.1" fill="#55534e" stroke="#1c1c1a" stroke-width="0.45" stroke-linejoin="round"/>
<polygon points="640.6,941.2 645.0,945.1 650.3,942.0 646.0,938.1" fill="#908d85" stroke="#1c1c1a" stroke-width="0.45" stroke-linejoin="round"/>
<polygon points="645.0,948.8 651.1,954.7 651.5,951.2 647.1,947.2" fill="#3b3a37" stroke="#1c1c1a" stroke-width="0.45" stroke-linejoin="round"/>
<polygon points="651.1,954.7 658.9,950.1 656.8,948.2 651.5,951.2" fill="#55534e" stroke="#1c1c1a" stroke-width="0.45" stroke-linejoin="round"/>
<polygon points="647.1,947.2 651.5,951.2 656.8,948.2 652.4,944.1" fill="#908d85" stroke="#1c1c1a" stroke-width="0.45" stroke-linejoin="round"/>
<polygon points="651.5,954.8 657.6,960.7 658.0,957.3 653.6,953.4" fill="#3b3a37" stroke="#1c1c1a" stroke-width="0.45" stroke-linejoin="round"/>
<polygon points="657.6,960.7 665.4,956.3 663.3,954.2 658.0,957.3" fill="#55534e" stroke="#1c1c1a" stroke-width="0.45" stroke-linejoin="round"/>
<polygon points="653.6,953.4 658.0,957.3 663.3,954.2 658.9,950.3" fill="#908d85" stroke="#1c1c1a" stroke-width="0.45" stroke-linejoin="round"/>
<polygon points="559.0,880.5 565.2,886.3 565.5,882.9 561.1,878.9" fill="#3b3a37" stroke="#1c1c1a" stroke-width="0.45" stroke-linejoin="round"/>
<polygon points="565.2,886.3 572.9,881.8 570.8,879.9 565.5,882.9" fill="#55534e" stroke="#1c1c1a" stroke-width="0.45" stroke-linejoin="round"/>
<polygon points="561.1,878.9 565.5,882.9 570.8,879.9 566.4,875.8" fill="#908d85" stroke="#1c1c1a" stroke-width="0.45" stroke-linejoin="round"/>
<polygon points="565.5,886.5 571.6,892.3 572.0,888.9 567.6,885.0" fill="#3b3a37" stroke="#1c1c1a" stroke-width="0.45" stroke-linejoin="round"/>
<polygon points="571.6,892.3 579.4,888.0 577.3,885.9 572.0,888.9" fill="#55534e" stroke="#1c1c1a" stroke-width="0.45" stroke-linejoin="round"/>
<polygon points="567.6,885.0 572.0,888.9 577.3,885.9 572.9,882.0" fill="#908d85" stroke="#1c1c1a" stroke-width="0.45" stroke-linejoin="round"/>
<polygon points="572.0,892.7 578.1,898.5 578.5,895.1 574.1,891.1" fill="#3b3a37" stroke="#1c1c1a" stroke-width="0.45" stroke-linejoin="round"/>
<polygon points="578.1,898.5 585.9,894.0 583.8,892.0 578.5,895.1" fill="#55534e" stroke="#1c1c1a" stroke-width="0.45" stroke-linejoin="round"/>
<polygon points="574.1,891.1 578.5,895.1 583.8,892.0 579.4,888.0" fill="#908d85" stroke="#1c1c1a" stroke-width="0.45" stroke-linejoin="round"/>
<polygon points="578.5,898.7 584.6,904.5 584.9,901.1 580.6,897.2" fill="#3b3a37" stroke="#1c1c1a" stroke-width="0.45" stroke-linejoin="round"/>
<polygon points="584.6,904.5 592.4,900.1 590.3,898.0 584.9,901.1" fill="#55534e" stroke="#1c1c1a" stroke-width="0.45" stroke-linejoin="round"/>
<polygon points="580.6,897.2 584.9,901.1 590.3,898.0 585.9,894.1" fill="#908d85" stroke="#1c1c1a" stroke-width="0.45" stroke-linejoin="round"/>
<polygon points="584.9,904.8 591.1,910.7 591.4,907.3 587.1,903.2" fill="#3b3a37" stroke="#1c1c1a" stroke-width="0.45" stroke-linejoin="round"/>
<polygon points="591.1,910.7 598.9,906.1 596.8,904.2 591.4,907.3" fill="#55534e" stroke="#1c1c1a" stroke-width="0.45" stroke-linejoin="round"/>
<polygon points="587.1,903.2 591.4,907.3 596.8,904.2 592.4,900.1" fill="#908d85" stroke="#1c1c1a" stroke-width="0.45" stroke-linejoin="round"/>
<polygon points="591.4,910.8 597.6,916.7 597.9,913.3 593.5,909.4" fill="#3b3a37" stroke="#1c1c1a" stroke-width="0.45" stroke-linejoin="round"/>
<polygon points="597.6,916.7 605.4,912.3 603.3,910.2 597.9,913.3" fill="#55534e" stroke="#1c1c1a" stroke-width="0.45" stroke-linejoin="round"/>
<polygon points="593.5,909.4 597.9,913.3 603.3,910.2 598.9,906.3" fill="#908d85" stroke="#1c1c1a" stroke-width="0.45" stroke-linejoin="round"/>
<polygon points="597.9,917.0 604.1,922.9 604.4,919.4 600.0,915.4" fill="#3b3a37" stroke="#1c1c1a" stroke-width="0.45" stroke-linejoin="round"/>
<polygon points="604.1,922.9 611.9,918.3 609.8,916.4 604.4,919.4" fill="#55534e" stroke="#1c1c1a" stroke-width="0.45" stroke-linejoin="round"/>
<polygon points="600.0,915.4 604.4,919.4 609.8,916.4 605.4,912.3" fill="#908d85" stroke="#1c1c1a" stroke-width="0.45" stroke-linejoin="round"/>
<polygon points="604.4,923.0 610.6,928.9 610.9,925.5 606.5,921.6" fill="#3b3a37" stroke="#1c1c1a" stroke-width="0.45" stroke-linejoin="round"/>
<polygon points="610.6,928.9 618.4,924.5 616.3,922.4 610.9,925.5" fill="#55534e" stroke="#1c1c1a" stroke-width="0.45" stroke-linejoin="round"/>
<polygon points="606.5,921.6 610.9,925.5 616.3,922.4 611.9,918.5" fill="#908d85" stroke="#1c1c1a" stroke-width="0.45" stroke-linejoin="round"/>
<polygon points="610.9,929.2 617.1,935.0 617.4,931.6 613.0,927.6" fill="#3b3a37" stroke="#1c1c1a" stroke-width="0.45" stroke-linejoin="round"/>
<polygon points="617.1,935.0 624.9,930.5 622.8,928.5 617.4,931.6" fill="#55534e" stroke="#1c1c1a" stroke-width="0.45" stroke-linejoin="round"/>
<polygon points="613.0,927.6 617.4,931.6 622.8,928.5 618.4,924.5" fill="#908d85" stroke="#1c1c1a" stroke-width="0.45" stroke-linejoin="round"/>
<polygon points="617.4,935.2 623.6,941.0 623.9,937.6 619.5,933.7" fill="#3b3a37" stroke="#1c1c1a" stroke-width="0.45" stroke-linejoin="round"/>
<polygon points="623.6,941.0 631.4,936.6 629.2,934.5 623.9,937.6" fill="#55534e" stroke="#1c1c1a" stroke-width="0.45" stroke-linejoin="round"/>
<polygon points="619.5,933.7 623.9,937.6 629.2,934.5 624.9,930.6" fill="#908d85" stroke="#1c1c1a" stroke-width="0.45" stroke-linejoin="round"/>
<polygon points="623.9,941.4 630.1,947.2 630.4,943.8 626.0,939.7" fill="#3b3a37" stroke="#1c1c1a" stroke-width="0.45" stroke-linejoin="round"/>
<polygon points="630.1,947.2 637.8,942.6 635.7,940.7 630.4,943.8" fill="#55534e" stroke="#1c1c1a" stroke-width="0.45" stroke-linejoin="round"/>
<polygon points="626.0,939.7 630.4,943.8 635.7,940.7 631.4,936.6" fill="#908d85" stroke="#1c1c1a" stroke-width="0.45" stroke-linejoin="round"/>
<polygon points="630.4,947.4 636.5,953.2 636.9,949.8 632.5,945.9" fill="#3b3a37" stroke="#1c1c1a" stroke-width="0.45" stroke-linejoin="round"/>
<polygon points="636.5,953.2 644.3,948.8 642.2,946.7 636.9,949.8" fill="#55534e" stroke="#1c1c1a" stroke-width="0.45" stroke-linejoin="round"/>
<polygon points="632.5,945.9 636.9,949.8 642.2,946.7 637.8,942.8" fill="#908d85" stroke="#1c1c1a" stroke-width="0.45" stroke-linejoin="round"/>
<polygon points="636.9,953.5 643.0,959.4 643.4,956.0 639.0,951.9" fill="#3b3a37" stroke="#1c1c1a" stroke-width="0.45" stroke-linejoin="round"/>
<polygon points="643.0,959.4 650.8,954.8 648.7,952.9 643.4,956.0" fill="#55534e" stroke="#1c1c1a" stroke-width="0.45" stroke-linejoin="round"/>
<polygon points="639.0,951.9 643.4,956.0 648.7,952.9 644.3,948.8" fill="#908d85" stroke="#1c1c1a" stroke-width="0.45" stroke-linejoin="round"/>
<polygon points="643.4,959.5 649.5,965.4 649.8,962.0 645.5,958.1" fill="#3b3a37" stroke="#1c1c1a" stroke-width="0.45" stroke-linejoin="round"/>
<polygon points="649.5,965.4 657.3,961.0 655.2,958.9 649.8,962.0" fill="#55534e" stroke="#1c1c1a" stroke-width="0.45" stroke-linejoin="round"/>
<polygon points="645.5,958.1 649.8,962.0 655.2,958.9 650.8,955.0" fill="#908d85" stroke="#1c1c1a" stroke-width="0.45" stroke-linejoin="round"/>
<polygon points="550.9,885.2 557.0,891.1 557.4,887.6 553.0,883.6" fill="#3b3a37" stroke="#1c1c1a" stroke-width="0.45" stroke-linejoin="round"/>
<polygon points="557.0,891.1 564.8,886.5 562.7,884.6 557.4,887.6" fill="#55534e" stroke="#1c1c1a" stroke-width="0.45" stroke-linejoin="round"/>
<polygon points="553.0,883.6 557.4,887.6 562.7,884.6 558.3,880.5" fill="#908d85" stroke="#1c1c1a" stroke-width="0.45" stroke-linejoin="round"/>
<polygon points="557.4,891.2 563.5,897.1 563.9,893.6 559.5,889.8" fill="#3b3a37" stroke="#1c1c1a" stroke-width="0.45" stroke-linejoin="round"/>
<polygon points="563.5,897.1 571.3,892.7 569.2,890.6 563.9,893.6" fill="#55534e" stroke="#1c1c1a" stroke-width="0.45" stroke-linejoin="round"/>
<polygon points="559.5,889.8 563.9,893.6 569.2,890.6 564.8,886.7" fill="#908d85" stroke="#1c1c1a" stroke-width="0.45" stroke-linejoin="round"/>
<polygon points="563.9,897.4 570.0,903.2 570.3,899.8 566.0,895.8" fill="#3b3a37" stroke="#1c1c1a" stroke-width="0.45" stroke-linejoin="round"/>
<polygon points="570.0,903.2 577.8,898.7 575.7,896.7 570.3,899.8" fill="#55534e" stroke="#1c1c1a" stroke-width="0.45" stroke-linejoin="round"/>
<polygon points="566.0,895.8 570.3,899.8 575.7,896.7 571.3,892.7" fill="#908d85" stroke="#1c1c1a" stroke-width="0.45" stroke-linejoin="round"/>
<polygon points="570.3,903.4 576.5,909.2 576.8,905.8 572.5,901.9" fill="#3b3a37" stroke="#1c1c1a" stroke-width="0.45" stroke-linejoin="round"/>
<polygon points="576.5,909.2 584.3,904.8 582.2,902.7 576.8,905.8" fill="#55534e" stroke="#1c1c1a" stroke-width="0.45" stroke-linejoin="round"/>
<polygon points="572.5,901.9 576.8,905.8 582.2,902.7 577.8,898.8" fill="#908d85" stroke="#1c1c1a" stroke-width="0.45" stroke-linejoin="round"/>
<polygon points="576.8,909.5 583.0,915.4 583.3,912.0 578.9,907.9" fill="#3b3a37" stroke="#1c1c1a" stroke-width="0.45" stroke-linejoin="round"/>
<polygon points="583.0,915.4 590.8,910.8 588.7,908.9 583.3,912.0" fill="#55534e" stroke="#1c1c1a" stroke-width="0.45" stroke-linejoin="round"/>
<polygon points="578.9,907.9 583.3,912.0 588.7,908.9 584.3,904.8" fill="#908d85" stroke="#1c1c1a" stroke-width="0.45" stroke-linejoin="round"/>
<polygon points="583.3,915.6 589.5,921.4 589.8,918.0 585.4,914.1" fill="#3b3a37" stroke="#1c1c1a" stroke-width="0.45" stroke-linejoin="round"/>
<polygon points="589.5,921.4 597.3,917.0 595.2,914.9 589.8,918.0" fill="#55534e" stroke="#1c1c1a" stroke-width="0.45" stroke-linejoin="round"/>
<polygon points="585.4,914.1 589.8,918.0 595.2,914.9 590.8,911.0" fill="#908d85" stroke="#1c1c1a" stroke-width="0.45" stroke-linejoin="round"/>
<polygon points="589.8,921.7 596.0,927.6 596.3,924.2 591.9,920.1" fill="#3b3a37" stroke="#1c1c1a" stroke-width="0.45" stroke-linejoin="round"/>
<polygon points="596.0,927.6 603.8,923.0 601.7,921.1 596.3,924.2" fill="#55534e" stroke="#1c1c1a" stroke-width="0.45" stroke-linejoin="round"/>
<polygon points="591.9,920.1 596.3,924.2 601.7,921.1 597.3,917.0" fill="#908d85" stroke="#1c1c1a" stroke-width="0.45" stroke-linejoin="round"/>
<polygon points="596.3,927.7 602.5,933.6 602.8,930.2 598.4,926.3" fill="#3b3a37" stroke="#1c1c1a" stroke-width="0.45" stroke-linejoin="round"/>
<polygon points="602.5,933.6 610.3,929.2 608.1,927.1 602.8,930.2" fill="#55534e" stroke="#1c1c1a" stroke-width="0.45" stroke-linejoin="round"/>
<polygon points="598.4,926.3 602.8,930.2 608.1,927.1 603.8,923.2" fill="#908d85" stroke="#1c1c1a" stroke-width="0.45" stroke-linejoin="round"/>
<polygon points="602.8,933.9 609.0,939.7 609.3,936.3 604.9,932.3" fill="#3b3a37" stroke="#1c1c1a" stroke-width="0.45" stroke-linejoin="round"/>
<polygon points="609.0,939.7 616.7,935.2 614.6,933.2 609.3,936.3" fill="#55534e" stroke="#1c1c1a" stroke-width="0.45" stroke-linejoin="round"/>
<polygon points="604.9,932.3 609.3,936.3 614.6,933.2 610.3,929.2" fill="#908d85" stroke="#1c1c1a" stroke-width="0.45" stroke-linejoin="round"/>
<polygon points="609.3,939.9 615.5,945.7 615.8,942.3 611.4,938.4" fill="#3b3a37" stroke="#1c1c1a" stroke-width="0.45" stroke-linejoin="round"/>
<polygon points="615.5,945.7 623.2,941.4 621.1,939.2 615.8,942.3" fill="#55534e" stroke="#1c1c1a" stroke-width="0.45" stroke-linejoin="round"/>
<polygon points="611.4,938.4 615.8,942.3 621.1,939.2 616.7,935.3" fill="#908d85" stroke="#1c1c1a" stroke-width="0.45" stroke-linejoin="round"/>
<polygon points="615.8,946.1 621.9,951.9 622.3,948.5 617.9,944.4" fill="#3b3a37" stroke="#1c1c1a" stroke-width="0.45" stroke-linejoin="round"/>
<polygon points="621.9,951.9 629.7,947.4 627.6,945.4 622.3,948.5" fill="#55534e" stroke="#1c1c1a" stroke-width="0.45" stroke-linejoin="round"/>
<polygon points="617.9,944.4 622.3,948.5 627.6,945.4 623.2,941.4" fill="#908d85" stroke="#1c1c1a" stroke-width="0.45" stroke-linejoin="round"/>
<polygon points="622.3,952.1 628.4,957.9 628.8,954.5 624.4,950.6" fill="#3b3a37" stroke="#1c1c1a" stroke-width="0.45" stroke-linejoin="round"/>
<polygon points="628.4,957.9 636.2,953.5 634.1,951.4 628.8,954.5" fill="#55534e" stroke="#1c1c1a" stroke-width="0.45" stroke-linejoin="round"/>
<polygon points="624.4,950.6 628.8,954.5 634.1,951.4 629.7,947.5" fill="#908d85" stroke="#1c1c1a" stroke-width="0.45" stroke-linejoin="round"/>
<polygon points="628.8,958.2 634.9,964.1 635.2,960.7 630.9,956.6" fill="#3b3a37" stroke="#1c1c1a" stroke-width="0.45" stroke-linejoin="round"/>
<polygon points="634.9,964.1 642.7,959.5 640.6,957.6 635.2,960.7" fill="#55534e" stroke="#1c1c1a" stroke-width="0.45" stroke-linejoin="round"/>
<polygon points="630.9,956.6 635.2,960.7 640.6,957.6 636.2,953.5" fill="#908d85" stroke="#1c1c1a" stroke-width="0.45" stroke-linejoin="round"/>
<polygon points="635.2,964.2 641.4,970.1 641.7,966.7 637.4,962.8" fill="#3b3a37" stroke="#1c1c1a" stroke-width="0.45" stroke-linejoin="round"/>
<polygon points="641.4,970.1 649.2,965.7 647.1,963.6 641.7,966.7" fill="#55534e" stroke="#1c1c1a" stroke-width="0.45" stroke-linejoin="round"/>
<polygon points="637.4,962.8 641.7,966.7 647.1,963.6 642.7,959.7" fill="#908d85" stroke="#1c1c1a" stroke-width="0.45" stroke-linejoin="round"/>
<polygon points="549.2,895.9 555.4,901.8 555.7,898.4 551.4,894.5" fill="#3b3a37" stroke="#1c1c1a" stroke-width="0.45" stroke-linejoin="round"/>
<polygon points="555.4,901.8 563.2,897.4 561.1,895.3 555.7,898.4" fill="#55534e" stroke="#1c1c1a" stroke-width="0.45" stroke-linejoin="round"/>
<polygon points="551.4,894.5 555.7,898.4 561.1,895.3 556.7,891.4" fill="#908d85" stroke="#1c1c1a" stroke-width="0.45" stroke-linejoin="round"/>
<polygon points="555.7,902.1 561.9,907.9 562.2,904.5 557.8,900.5" fill="#3b3a37" stroke="#1c1c1a" stroke-width="0.45" stroke-linejoin="round"/>
<polygon points="561.9,907.9 569.7,903.4 567.6,901.4 562.2,904.5" fill="#55534e" stroke="#1c1c1a" stroke-width="0.45" stroke-linejoin="round"/>
<polygon points="557.8,900.5 562.2,904.5 567.6,901.4 563.2,897.4" fill="#908d85" stroke="#1c1c1a" stroke-width="0.45" stroke-linejoin="round"/>
<polygon points="607.7,950.8 613.8,956.6 614.2,953.2 609.8,949.1" fill="#3b3a37" stroke="#1c1c1a" stroke-width="0.45" stroke-linejoin="round"/>
<polygon points="613.8,956.6 621.6,952.1 619.5,950.1 614.2,953.2" fill="#55534e" stroke="#1c1c1a" stroke-width="0.45" stroke-linejoin="round"/>
<polygon points="609.8,949.1 614.2,953.2 619.5,950.1 615.1,946.1" fill="#908d85" stroke="#1c1c1a" stroke-width="0.45" stroke-linejoin="round"/>
<polygon points="614.2,956.8 620.3,962.6 620.6,959.2 616.3,955.3" fill="#3b3a37" stroke="#1c1c1a" stroke-width="0.45" stroke-linejoin="round"/>
<polygon points="620.3,962.6 628.1,958.2 626.0,956.1 620.6,959.2" fill="#55534e" stroke="#1c1c1a" stroke-width="0.45" stroke-linejoin="round"/>
<polygon points="616.3,955.3 620.6,959.2 626.0,956.1 621.6,952.2" fill="#908d85" stroke="#1c1c1a" stroke-width="0.45" stroke-linejoin="round"/>
<polygon points="620.6,962.9 626.8,968.8 627.1,965.4 622.8,961.3" fill="#3b3a37" stroke="#1c1c1a" stroke-width="0.45" stroke-linejoin="round"/>
<polygon points="626.8,968.8 634.6,964.2 632.5,962.3 627.1,965.4" fill="#55534e" stroke="#1c1c1a" stroke-width="0.45" stroke-linejoin="round"/>
<polygon points="622.8,961.3 627.1,965.4 632.5,962.3 628.1,958.2" fill="#908d85" stroke="#1c1c1a" stroke-width="0.45" stroke-linejoin="round"/>
<polygon points="562.4,908.6 607.0,950.3 605.9,947.4 564.0,908.3" fill="#3b3a37" stroke="#1c1c1a" stroke-width="0.45" stroke-linejoin="round"/>
<polygon points="607.0,950.3 615.0,945.6 613.3,943.0 605.9,947.4" fill="#55534e" stroke="#1c1c1a" stroke-width="0.45" stroke-linejoin="round"/>
<polygon points="564.0,908.3 605.9,947.4 613.3,943.0 571.5,903.9" fill="#908d85" stroke="#1c1c1a" stroke-width="0.45" stroke-linejoin="round"/>
<polygon points="607.2,866.6 615.9,875.3 616.1,871.4 610.1,865.4" fill="#3b3a37" stroke="#1c1c1a" stroke-width="0.45" stroke-linejoin="round"/>
<polygon points="615.9,875.3 625.3,869.8 622.4,867.7 616.1,871.4" fill="#55534e" stroke="#1c1c1a" stroke-width="0.45" stroke-linejoin="round"/>
<polygon points="610.1,865.4 616.1,871.4 622.4,867.7 616.4,861.7" fill="#908d85" stroke="#1c1c1a" stroke-width="0.45" stroke-linejoin="round"/>
<polygon points="616.3,875.6 625.0,884.4 625.2,880.5 619.2,874.5" fill="#3b3a37" stroke="#1c1c1a" stroke-width="0.45" stroke-linejoin="round"/>
<polygon points="625.0,884.4 634.4,878.9 631.5,876.8 625.2,880.5" fill="#55534e" stroke="#1c1c1a" stroke-width="0.45" stroke-linejoin="round"/>
<polygon points="619.2,874.5 625.2,880.5 631.5,876.8 625.5,870.8" fill="#908d85" stroke="#1c1c1a" stroke-width="0.45" stroke-linejoin="round"/>
<polygon points="625.3,884.7 634.1,893.5 634.3,889.6 628.3,883.6" fill="#3b3a37" stroke="#1c1c1a" stroke-width="0.45" stroke-linejoin="round"/>
<polygon points="634.1,893.5 643.5,888.0 640.6,885.9 634.3,889.6" fill="#55534e" stroke="#1c1c1a" stroke-width="0.45" stroke-linejoin="round"/>
<polygon points="628.3,883.6 634.3,889.6 640.6,885.9 634.6,879.9" fill="#908d85" stroke="#1c1c1a" stroke-width="0.45" stroke-linejoin="round"/>
<polygon points="634.4,893.8 643.2,902.6 643.4,898.7 637.4,892.7" fill="#3b3a37" stroke="#1c1c1a" stroke-width="0.45" stroke-linejoin="round"/>
<polygon points="643.2,902.6 652.6,897.1 649.7,894.9 643.4,898.7" fill="#55534e" stroke="#1c1c1a" stroke-width="0.45" stroke-linejoin="round"/>
<polygon points="637.4,892.7 643.4,898.7 649.7,894.9 643.7,888.9" fill="#908d85" stroke="#1c1c1a" stroke-width="0.45" stroke-linejoin="round"/>
<polygon points="643.5,902.9 652.3,911.7 652.4,907.8 646.4,901.8" fill="#3b3a37" stroke="#1c1c1a" stroke-width="0.45" stroke-linejoin="round"/>
<polygon points="652.3,911.7 661.7,906.1 658.8,904.0 652.4,907.8" fill="#55534e" stroke="#1c1c1a" stroke-width="0.45" stroke-linejoin="round"/>
<polygon points="646.4,901.8 652.4,907.8 658.8,904.0 652.8,898.0" fill="#908d85" stroke="#1c1c1a" stroke-width="0.45" stroke-linejoin="round"/>
<polygon points="682.6,939.2 691.4,948.0 691.5,944.1 685.5,938.1" fill="#3b3a37" stroke="#1c1c1a" stroke-width="0.45" stroke-linejoin="round"/>
<polygon points="691.4,948.0 700.8,942.5 697.9,940.4 691.5,944.1" fill="#55534e" stroke="#1c1c1a" stroke-width="0.45" stroke-linejoin="round"/>
<polygon points="685.5,938.1 691.5,944.1 697.9,940.4 691.9,934.4" fill="#908d85" stroke="#1c1c1a" stroke-width="0.45" stroke-linejoin="round"/>
<polygon points="656.7,980.3 663.5,986.6 663.6,983.4 658.9,979.2" fill="#3b3a37" stroke="#1c1c1a" stroke-width="0.45" stroke-linejoin="round"/>
<polygon points="663.5,986.6 671.6,981.9 669.3,980.1 663.6,983.4" fill="#55534e" stroke="#1c1c1a" stroke-width="0.45" stroke-linejoin="round"/>
<polygon points="658.9,979.2 663.6,983.4 669.3,980.1 664.6,975.9" fill="#908d85" stroke="#1c1c1a" stroke-width="0.45" stroke-linejoin="round"/>
<polygon points="668.5,984.7 675.3,991.0 675.5,987.8 670.8,983.5" fill="#3b3a37" stroke="#1c1c1a" stroke-width="0.45" stroke-linejoin="round"/>
<polygon points="675.3,991.0 683.4,986.3 681.2,984.5 675.5,987.8" fill="#55534e" stroke="#1c1c1a" stroke-width="0.45" stroke-linejoin="round"/>
<polygon points="670.8,983.5 675.5,987.8 681.2,984.5 676.5,980.3" fill="#908d85" stroke="#1c1c1a" stroke-width="0.45" stroke-linejoin="round"/>
<polygon points="657.2,990.7 664.0,997.0 664.1,993.8 659.4,989.5" fill="#3b3a37" stroke="#1c1c1a" stroke-width="0.45" stroke-linejoin="round"/>
<polygon points="664.0,997.0 672.1,992.3 669.8,990.5 664.1,993.8" fill="#55534e" stroke="#1c1c1a" stroke-width="0.45" stroke-linejoin="round"/>
<polygon points="659.4,989.5 664.1,993.8 669.8,990.5 665.1,986.3" fill="#908d85" stroke="#1c1c1a" stroke-width="0.45" stroke-linejoin="round"/>
<polygon points="669.2,995.2 676.0,1001.5 676.1,998.3 671.4,994.1" fill="#3b3a37" stroke="#1c1c1a" stroke-width="0.45" stroke-linejoin="round"/>
<polygon points="676.0,1001.5 684.1,996.8 681.8,995.1 676.1,998.3" fill="#55534e" stroke="#1c1c1a" stroke-width="0.45" stroke-linejoin="round"/>
<polygon points="671.4,994.1 676.1,998.3 681.8,995.1 677.1,990.8" fill="#908d85" stroke="#1c1c1a" stroke-width="0.45" stroke-linejoin="round"/>
<polygon points="681.2,967.3 688.1,974.3 688.5,970.9 683.6,966.2" fill="#3b3a37" stroke="#1c1c1a" stroke-width="0.45" stroke-linejoin="round"/>
<polygon points="688.1,974.3 697.4,968.9 695.0,967.2 688.5,970.9" fill="#55534e" stroke="#1c1c1a" stroke-width="0.45" stroke-linejoin="round"/>
<polygon points="683.6,966.2 688.5,970.9 695.0,967.2 690.1,962.4" fill="#908d85" stroke="#1c1c1a" stroke-width="0.45" stroke-linejoin="round"/>
<polygon points="688.5,974.6 695.4,981.6 695.8,978.2 690.9,973.5" fill="#3b3a37" stroke="#1c1c1a" stroke-width="0.45" stroke-linejoin="round"/>
<polygon points="695.4,981.6 704.7,976.2 702.3,974.5 695.8,978.2" fill="#55534e" stroke="#1c1c1a" stroke-width="0.45" stroke-linejoin="round"/>
<polygon points="690.9,973.5 695.8,978.2 702.3,974.5 697.4,969.7" fill="#908d85" stroke="#1c1c1a" stroke-width="0.45" stroke-linejoin="round"/>
<polygon points="695.8,981.9 702.7,988.9 703.1,985.5 698.2,980.8" fill="#3b3a37" stroke="#1c1c1a" stroke-width="0.45" stroke-linejoin="round"/>
<polygon points="702.7,988.9 712.0,983.5 709.6,981.8 703.1,985.5" fill="#55534e" stroke="#1c1c1a" stroke-width="0.45" stroke-linejoin="round"/>
<polygon points="698.2,980.8 703.1,985.5 709.6,981.8 704.7,977.0" fill="#908d85" stroke="#1c1c1a" stroke-width="0.45" stroke-linejoin="round"/>
<ellipse cx="300.5" cy="630.5" rx="1.3" ry="2.2" fill="#111" transform="rotate(-25 300.5 630.5)"/>
<ellipse cx="376.5" cy="682.5" rx="1.3" ry="2" fill="#111" transform="rotate(-25 376.5 682.5)"/>
<polygon points="1049.5,649.5 1055.5,647.0 1057.0,651.0 1051.0,654.0" fill="#6d6b66" stroke="#141414" stroke-width="0.4" stroke-linejoin="round"/>
<ellipse cx="1050.2" cy="652" rx="2" ry="2.6" fill="#111"/>
<ellipse cx="1225" cy="588.5" rx="6.8" ry="3.6" fill="none" stroke="#b5b5b5" stroke-width="2"/>
</svg>
</div>
<!-- browser header -->
<div class="abs" style="left:4px;top:144px;width:300px;height:24px;background:#f2f2f2;border:1px solid #c8c8c8;box-sizing:border-box"></div>
<svg class="abs" style="left:9px;top:152px" width="12" height="9" viewBox="0 0 12 9"><path d="M5 0v9L0 4.500zM11 0v9L6 4.500z" fill="#222"/></svg>
<svg class="abs" style="left:282px;top:151px" width="22" height="11" viewBox="0 0 22 11"><circle cx="5.500" cy="5.500" r="4.700" fill="#222"/><path d="M2.800 5.500h5.400" stroke="#fff" stroke-width="1.500"/><path d="M17.500 0v11" stroke="#444" stroke-width="1"/><path d="M19.500 1.500v8" stroke="#aaa" stroke-width="1"/></svg>
<!-- scrollbar -->
<div class="abs" style="left:8px;top:173px;width:6px;height:815px;background:#c9c9c9"></div>
<div class="abs" style="left:8px;top:212px;width:6px;height:46px;background:#8e8e8e;border-radius:3px"></div>
<!-- comment -->
<div class="abs" style="left:4px;top:1011px;width:300px;height:25px;background:#f2f2f2;border:1px solid #c8c8c8;box-sizing:border-box"></div>
<svg class="abs" style="left:282px;top:1018px" width="22" height="11" viewBox="0 0 22 11"><circle cx="5.500" cy="5.500" r="4.700" fill="#222"/><path d="M2.800 5.500h5.400M5.500 2.800v5.400" stroke="#fff" stroke-width="1.500"/><path d="M17.500 0v11" stroke="#444" stroke-width="1"/><path d="M19.500 1.500v8" stroke="#aaa" stroke-width="1"/></svg>
<!-- nav bar -->
<div class="abs" style="left:841px;top:1012px;width:237px;height:23px;background:#f0f0f0"></div>
<svg class="abs" style="left:841px;top:1012px" width="237" height="23" viewBox="841 1012 237 23">
<g fill="#333"><path d="M865.500 1022.500h5l-2.500 3.500zM976.500 1022.500h5l-2.500 3.500zM1006.500 1022.500h5l-2.500 3.500zM1037.500 1022.500h5l-2.500 3.500zM1068.500 1022.500h5l-2.500 3.500z"/></g>
<path d="M852.500 1031v-12" stroke="#333" stroke-width="2.400"/><path d="M852.500 1031v-12" stroke="#fff" stroke-width=".8"/><path d="M849.500 1020.500l3-4.500 3 4.500z" fill="#fff" stroke="#333" stroke-width=".8"/><path d="M846 1027c-2-2 1-4 6-4s9 2 7 4-6 2.500-10 2" fill="none" stroke="#333" stroke-width="1.300"/><path d="M849.500 1026.500l-3.500 2.500 3.500 2z" fill="#333"/>
<path d="M877.500 1022.500h15v9h-15z" fill="#eee" stroke="#444" stroke-width="1"/><path d="M880.500 1022l3-5 3 2.500 5-3v5.500" fill="#aab4c8" stroke="#444" stroke-width=".8"/><rect x="880.500" y="1025.500" width="9" height="3.500" fill="#b9c0cf" stroke="#444" stroke-width=".8"/>
<path transform="translate(0 2.5)" d="M905 1025.500l-2-2.500c1-1.500 2.500-.5 3 .5v-5.500c0-1 1.500-1 1.500 0v-2c0-1 1.600-1 1.600 0v-.8c0-1 1.600-1 1.600 0v1.600c0-1 1.600-1 1.600 0v3.500c.5-1 2-1 1.800.5-.3 3-1.200 5-2 7.500h-6c-.5-1.500-1.500-3-2.100-3.800z" fill="#f4f6fa" stroke="#444" stroke-width=".9"/>
<circle cx="935" cy="1023" r="4.800" fill="#e3edf2" stroke="#444" stroke-width="1.200"/><path d="M938.500 1026.500l4 4" stroke="#444" stroke-width="2.400"/><path d="M943 1017v4M941 1019h4M941 1023.500h4" stroke="#333" stroke-width="1"/>
<rect x="955.500" y="1016.500" width="15" height="14" fill="none" stroke="#444" stroke-width="1" stroke-dasharray="2 1.500"/><circle cx="962.500" cy="1023" r="5.800" fill="#e3edf2" stroke="#444" stroke-width="1.200"/><path d="M966.500 1027.500l4 4" stroke="#444" stroke-width="2.600"/>
<rect x="989.500" y="1016.500" width="14" height="11" fill="#ddd" stroke="#444" stroke-width="1.200"/><rect x="991.500" y="1018.500" width="10" height="7" fill="#8aa8dc"/><path d="M993.500 1028.500h6l1.500 2.500h-9z" fill="#ccc" stroke="#666" stroke-width=".6"/>
<rect x="1019.500" y="1016.500" width="15" height="15" fill="#8f94a3" stroke="#444" stroke-width="1"/><path d="M1023.200 1016.500v15M1027 1016.500v15M1030.800 1016.500v15M1019.500 1020.200h15M1019.500 1024h15M1019.500 1027.800h15" stroke="#fff" stroke-width="1"/>
<g fill="#9db5e4" stroke="#3c5aa8" stroke-width="1"><rect x="1049.500" y="1017.500" width="6.500" height="5.500" rx="1"/><rect x="1057.500" y="1017.500" width="6.500" height="5.500" rx="1"/><rect x="1049.500" y="1024.500" width="6.500" height="5.500" rx="1"/><rect x="1057.500" y="1024.500" width="6.500" height="5.500" rx="1"/></g>
</svg>
<!-- view cube -->
<svg class="abs" style="left:1800px;top:150px" width="120" height="120" viewBox="1800 150 120 120">
<defs><filter id="vcb" x="-30%" y="-30%" width="160%" height="160%"><feGaussianBlur stdDeviation="3"/></filter></defs>
<polygon points="1852,243 1889,225 1900,232 1862,250" fill="#000" opacity=".18" filter="url(#vcb)"/>
<polygon points="1823.500,179.600 1859.400,169.700 1891.500,183.700 1851.800,197.200" fill="#efefef" fill-opacity=".8"/>
<polygon points="1823.500,179.600 1851.800,197.200 1851.800,243 1825,220.800" fill="#e2e2e2" fill-opacity=".8"/>
<polygon points="1851.800,197.200 1891.500,183.700 1889.200,224.700 1851.800,243" fill="#dadada" fill-opacity=".8"/>
<g fill="none" stroke="#8e8e8e" stroke-width=".8" stroke-dasharray="4 2"><path d="M1823.500 179.600L1859.400 169.700L1891.500 183.700L1851.800 197.200ZM1851.800 197.200V243M1891.500 183.700L1889.200 224.700L1851.800 243"/></g>
<path d="M1823.500 179.600L1825 220.800L1851.800 243" fill="none" stroke="#aaa" stroke-width=".6"/>
<g font-family='"Liberation Sans","Noto Sans CJK JP",sans-serif' fill="#9c9c9c" text-anchor="middle">
<text transform="matrix(.95 -.32 0 1 1871 222)" font-size="22">右</text>
<text transform="matrix(.85 .53 .04 1 1836.500 221)" font-size="20">前</text>
<text transform="matrix(.85 .53 -.964 .267 1852 188)" font-size="17">上</text>
</g>
<path d="M1821.200 174.300L1825 220.500" stroke="#5b5bf2" stroke-width="1.600"/>
<path d="M1825 220.800L1857 248.300" stroke="#ec7474" stroke-width="1.600"/>
<text x="1815.500" y="170" font-size="10" fill="#6a6af5" font-family='"Liberation Sans",sans-serif'>Z</text>
<text x="1857.500" y="258" font-size="10" fill="#f08585" font-family='"Liberation Sans",sans-serif'>X</text>
</svg>

<div class="row" style="left:94.5px;top:174.5px;width:107.0px"></div>
<svg class="abs" style="left:97.5px;top:178.5px" width="17" height="11" viewBox="0 0 17 11"><path d="M0.3 5.5C2.5 1.8 5.3 0.3 8.5 0.3s6 1.5 8.2 5.2C14.5 9.2 11.7 10.7 8.5 10.7S2.5 9.2 0.3 5.5z" fill="#9b9b9b"/><circle cx="8.5" cy="5.5" r="3.6" fill="#f0f0f0"/><circle cx="8.5" cy="5.5" r="2.1" fill="#9b9b9b"/></svg>
<svg class="abs" style="left:121px;top:174.2px" width="18" height="18" viewBox="0 0 18 18"><defs><linearGradient id="bg0" x1="0" x2="1"><stop offset="0" stop-color="#fff"/><stop offset=".4" stop-color="#e6e8ee"/><stop offset="1" stop-color="#a9afbe"/></linearGradient></defs><rect x="1.8" y="1.8" width="14.4" height="14.4" rx="4.3" fill="#fff" stroke="#454a54" stroke-width="1.25"/><path d="M4.9 7.1h10.5v5.4a3.2 3.2 0 0 1-3.2 3.2H4.9z" fill="url(#bg0)"/></svg>
<div class="row" style="left:94.5px;top:198.5px;width:145.5px"></div>
<svg class="abs" style="left:97.5px;top:202.5px" width="17" height="11" viewBox="0 0 17 11"><path d="M0.3 5.5C2.5 1.8 5.3 0.3 8.5 0.3s6 1.5 8.2 5.2C14.5 9.2 11.7 10.7 8.5 10.7S2.5 9.2 0.3 5.5z" fill="#9b9b9b"/><circle cx="8.5" cy="5.5" r="3.6" fill="#f0f0f0"/><circle cx="8.5" cy="5.5" r="2.1" fill="#9b9b9b"/></svg>
<svg class="abs" style="left:121px;top:198.2px" width="18" height="18" viewBox="0 0 18 18"><defs><linearGradient id="bg1" x1="0" x2="1"><stop offset="0" stop-color="#fff"/><stop offset=".4" stop-color="#e6e8ee"/><stop offset="1" stop-color="#a9afbe"/></linearGradient></defs><rect x="1.8" y="1.8" width="14.4" height="14.4" rx="4.3" fill="#fff" stroke="#454a54" stroke-width="1.25"/><path d="M4.9 7.1h10.5v5.4a3.2 3.2 0 0 1-3.2 3.2H4.9z" fill="url(#bg1)"/></svg>
<div class="row" style="left:94.5px;top:222.5px;width:92.0px"></div>
<svg class="abs" style="left:97.5px;top:226.5px" width="17" height="11" viewBox="0 0 17 11"><path d="M0.3 5.5C2.5 1.8 5.3 0.3 8.5 0.3s6 1.5 8.2 5.2C14.5 9.2 11.7 10.7 8.5 10.7S2.5 9.2 0.3 5.5z" fill="#9b9b9b"/><circle cx="8.5" cy="5.5" r="3.6" fill="#f0f0f0"/><circle cx="8.5" cy="5.5" r="2.1" fill="#9b9b9b"/></svg>
<svg class="abs" style="left:121px;top:222.2px" width="18" height="18" viewBox="0 0 18 18"><defs><linearGradient id="bg2" x1="0" x2="1"><stop offset="0" stop-color="#fff"/><stop offset=".4" stop-color="#e6e8ee"/><stop offset="1" stop-color="#a9afbe"/></linearGradient></defs><rect x="1.8" y="1.8" width="14.4" height="14.4" rx="4.3" fill="#fff" stroke="#454a54" stroke-width="1.25"/><path d="M4.9 7.1h10.5v5.4a3.2 3.2 0 0 1-3.2 3.2H4.9z" fill="url(#bg2)"/></svg>
<div class="row" style="left:94.5px;top:246.5px;width:92.6px"></div>
<svg class="abs" style="left:97.5px;top:250.5px" width="17" height="11" viewBox="0 0 17 11"><path d="M0.3 5.5C2.5 1.8 5.3 0.3 8.5 0.3s6 1.5 8.2 5.2C14.5 9.2 11.7 10.7 8.5 10.7S2.5 9.2 0.3 5.5z" fill="#9b9b9b"/><circle cx="8.5" cy="5.5" r="3.6" fill="#f0f0f0"/><circle cx="8.5" cy="5.5" r="2.1" fill="#9b9b9b"/></svg>
<svg class="abs" style="left:121px;top:246.2px" width="18" height="18" viewBox="0 0 18 18"><defs><linearGradient id="bg3" x1="0" x2="1"><stop offset="0" stop-color="#fff"/><stop offset=".4" stop-color="#e6e8ee"/><stop offset="1" stop-color="#a9afbe"/></linearGradient></defs><rect x="1.8" y="1.8" width="14.4" height="14.4" rx="4.3" fill="#fff" stroke="#454a54" stroke-width="1.25"/><path d="M4.9 7.1h10.5v5.4a3.2 3.2 0 0 1-3.2 3.2H4.9z" fill="url(#bg3)"/></svg>
<div class="row" style="left:76.3px;top:271.0px;width:153.7px"></div>
<svg class="abs" style="left:79.3px;top:275.0px" width="17" height="11" viewBox="0 0 17 11"><path d="M0.3 5.5C2.5 1.8 5.3 0.3 8.5 0.3s6 1.5 8.2 5.2C14.5 9.2 11.7 10.7 8.5 10.7S2.5 9.2 0.3 5.5z" fill="#9b9b9b"/><circle cx="8.5" cy="5.5" r="3.6" fill="#f0f0f0"/><circle cx="8.5" cy="5.5" r="2.1" fill="#9b9b9b"/></svg>
<svg class="abs" style="left:103px;top:270.7px" width="18" height="18" viewBox="0 0 18 18"><defs><linearGradient id="bg4" x1="0" x2="1"><stop offset="0" stop-color="#fff"/><stop offset=".4" stop-color="#e6e8ee"/><stop offset="1" stop-color="#a9afbe"/></linearGradient></defs><rect x="1.8" y="1.8" width="14.4" height="14.4" rx="4.3" fill="#fff" stroke="#454a54" stroke-width="1.25"/><path d="M4.9 7.1h10.5v5.4a3.2 3.2 0 0 1-3.2 3.2H4.9z" fill="url(#bg4)"/></svg>
<div class="row" style="left:76.3px;top:295.0px;width:90.0px"></div>
<svg class="abs" style="left:79.3px;top:299.0px" width="17" height="11" viewBox="0 0 17 11"><path d="M0.3 5.5C2.5 1.8 5.3 0.3 8.5 0.3s6 1.5 8.2 5.2C14.5 9.2 11.7 10.7 8.5 10.7S2.5 9.2 0.3 5.5z" fill="#9b9b9b"/><circle cx="8.5" cy="5.5" r="3.6" fill="#f0f0f0"/><circle cx="8.5" cy="5.5" r="2.1" fill="#9b9b9b"/></svg>
<svg class="abs" style="left:103px;top:294.7px" width="18" height="18" viewBox="0 0 18 18"><defs><linearGradient id="bg5" x1="0" x2="1"><stop offset="0" stop-color="#fff"/><stop offset=".4" stop-color="#e6e8ee"/><stop offset="1" stop-color="#a9afbe"/></linearGradient></defs><rect x="1.8" y="1.8" width="14.4" height="14.4" rx="4.3" fill="#fff" stroke="#454a54" stroke-width="1.25"/><path d="M4.9 7.1h10.5v5.4a3.2 3.2 0 0 1-3.2 3.2H4.9z" fill="url(#bg5)"/></svg>
<div class="row" style="left:76.3px;top:319.0px;width:148.8px"></div>
<svg class="abs" style="left:79.3px;top:323.0px" width="17" height="11" viewBox="0 0 17 11"><path d="M0.3 5.5C2.5 1.8 5.3 0.3 8.5 0.3s6 1.5 8.2 5.2C14.5 9.2 11.7 10.7 8.5 10.7S2.5 9.2 0.3 5.5z" fill="#9b9b9b"/><circle cx="8.5" cy="5.5" r="3.6" fill="#f0f0f0"/><circle cx="8.5" cy="5.5" r="2.1" fill="#9b9b9b"/></svg>
<svg class="abs" style="left:103px;top:318.7px" width="18" height="18" viewBox="0 0 18 18"><defs><linearGradient id="bg6" x1="0" x2="1"><stop offset="0" stop-color="#fff"/><stop offset=".4" stop-color="#e6e8ee"/><stop offset="1" stop-color="#a9afbe"/></linearGradient></defs><rect x="1.8" y="1.8" width="14.4" height="14.4" rx="4.3" fill="#fff" stroke="#454a54" stroke-width="1.25"/><path d="M4.9 7.1h10.5v5.4a3.2 3.2 0 0 1-3.2 3.2H4.9z" fill="url(#bg6)"/></svg>
<div class="row" style="left:76.3px;top:343.0px;width:125.8px"></div>
<svg class="abs" style="left:79.3px;top:347.0px" width="17" height="11" viewBox="0 0 17 11"><path d="M0.3 5.5C2.5 1.8 5.3 0.3 8.5 0.3s6 1.5 8.2 5.2C14.5 9.2 11.7 10.7 8.5 10.7S2.5 9.2 0.3 5.5z" fill="#9b9b9b"/><circle cx="8.5" cy="5.5" r="3.6" fill="#f0f0f0"/><circle cx="8.5" cy="5.5" r="2.1" fill="#9b9b9b"/></svg>
<svg class="abs" style="left:103px;top:342.7px" width="18" height="18" viewBox="0 0 18 18"><defs><linearGradient id="bg7" x1="0" x2="1"><stop offset="0" stop-color="#fff"/><stop offset=".4" stop-color="#e6e8ee"/><stop offset="1" stop-color="#a9afbe"/></linearGradient></defs><rect x="1.8" y="1.8" width="14.4" height="14.4" rx="4.3" fill="#fff" stroke="#454a54" stroke-width="1.25"/><path d="M4.9 7.1h10.5v5.4a3.2 3.2 0 0 1-3.2 3.2H4.9z" fill="url(#bg7)"/></svg>
<div class="row" style="left:76.3px;top:367.0px;width:111.6px"></div>
<svg class="abs" style="left:79.3px;top:371.0px" width="17" height="11" viewBox="0 0 17 11"><path d="M0.3 5.5C2.5 1.8 5.3 0.3 8.5 0.3s6 1.5 8.2 5.2C14.5 9.2 11.7 10.7 8.5 10.7S2.5 9.2 0.3 5.5z" fill="#9b9b9b"/><circle cx="8.5" cy="5.5" r="3.6" fill="#f0f0f0"/><circle cx="8.5" cy="5.5" r="2.1" fill="#9b9b9b"/></svg>
<svg class="abs" style="left:103px;top:366.7px" width="18" height="18" viewBox="0 0 18 18"><defs><linearGradient id="bg8" x1="0" x2="1"><stop offset="0" stop-color="#fff"/><stop offset=".4" stop-color="#e6e8ee"/><stop offset="1" stop-color="#a9afbe"/></linearGradient></defs><rect x="1.8" y="1.8" width="14.4" height="14.4" rx="4.3" fill="#fff" stroke="#454a54" stroke-width="1.25"/><path d="M4.9 7.1h10.5v5.4a3.2 3.2 0 0 1-3.2 3.2H4.9z" fill="url(#bg8)"/></svg>
<div class="row" style="left:76.3px;top:391.0px;width:120.8px"></div>
<svg class="abs" style="left:79.3px;top:395.0px" width="17" height="11" viewBox="0 0 17 11"><path d="M0.3 5.5C2.5 1.8 5.3 0.3 8.5 0.3s6 1.5 8.2 5.2C14.5 9.2 11.7 10.7 8.5 10.7S2.5 9.2 0.3 5.5z" fill="#9b9b9b"/><circle cx="8.5" cy="5.5" r="3.6" fill="#f0f0f0"/><circle cx="8.5" cy="5.5" r="2.1" fill="#9b9b9b"/></svg>
<svg class="abs" style="left:103px;top:390.7px" width="18" height="18" viewBox="0 0 18 18"><defs><linearGradient id="bg9" x1="0" x2="1"><stop offset="0" stop-color="#fff"/><stop offset=".4" stop-color="#e6e8ee"/><stop offset="1" stop-color="#a9afbe"/></linearGradient></defs><rect x="1.8" y="1.8" width="14.4" height="14.4" rx="4.3" fill="#fff" stroke="#454a54" stroke-width="1.25"/><path d="M4.9 7.1h10.5v5.4a3.2 3.2 0 0 1-3.2 3.2H4.9z" fill="url(#bg9)"/></svg>
<div class="row" style="left:76.3px;top:415.0px;width:137.7px"></div>
<svg class="abs" style="left:79.3px;top:419.0px" width="17" height="11" viewBox="0 0 17 11"><path d="M0.3 5.5C2.5 1.8 5.3 0.3 8.5 0.3s6 1.5 8.2 5.2C14.5 9.2 11.7 10.7 8.5 10.7S2.5 9.2 0.3 5.5z" fill="#9b9b9b"/><circle cx="8.5" cy="5.5" r="3.6" fill="#f0f0f0"/><circle cx="8.5" cy="5.5" r="2.1" fill="#9b9b9b"/></svg>
<svg class="abs" style="left:103px;top:414.7px" width="18" height="18" viewBox="0 0 18 18"><defs><linearGradient id="bg10" x1="0" x2="1"><stop offset="0" stop-color="#fff"/><stop offset=".4" stop-color="#e6e8ee"/><stop offset="1" stop-color="#a9afbe"/></linearGradient></defs><rect x="1.8" y="1.8" width="14.4" height="14.4" rx="4.3" fill="#fff" stroke="#454a54" stroke-width="1.25"/><path d="M4.9 7.1h10.5v5.4a3.2 3.2 0 0 1-3.2 3.2H4.9z" fill="url(#bg10)"/></svg>
<div class="row" style="left:76.3px;top:439.0px;width:137.7px"></div>
<svg class="abs" style="left:79.3px;top:443.0px" width="17" height="11" viewBox="0 0 17 11"><path d="M0.3 5.5C2.5 1.8 5.3 0.3 8.5 0.3s6 1.5 8.2 5.2C14.5 9.2 11.7 10.7 8.5 10.7S2.5 9.2 0.3 5.5z" fill="#9b9b9b"/><circle cx="8.5" cy="5.5" r="3.6" fill="#f0f0f0"/><circle cx="8.5" cy="5.5" r="2.1" fill="#9b9b9b"/></svg>
<svg class="abs" style="left:103px;top:438.7px" width="18" height="18" viewBox="0 0 18 18"><defs><linearGradient id="bg11" x1="0" x2="1"><stop offset="0" stop-color="#fff"/><stop offset=".4" stop-color="#e6e8ee"/><stop offset="1" stop-color="#a9afbe"/></linearGradient></defs><rect x="1.8" y="1.8" width="14.4" height="14.4" rx="4.3" fill="#fff" stroke="#454a54" stroke-width="1.25"/><path d="M4.9 7.1h10.5v5.4a3.2 3.2 0 0 1-3.2 3.2H4.9z" fill="url(#bg11)"/></svg>
<div class="row" style="left:76.3px;top:463.0px;width:166.2px"></div>
<svg class="abs" style="left:79.3px;top:467.0px" width="17" height="11" viewBox="0 0 17 11"><path d="M0.3 5.5C2.5 1.8 5.3 0.3 8.5 0.3s6 1.5 8.2 5.2C14.5 9.2 11.7 10.7 8.5 10.7S2.5 9.2 0.3 5.5z" fill="#9b9b9b"/><circle cx="8.5" cy="5.5" r="3.6" fill="#f0f0f0"/><circle cx="8.5" cy="5.5" r="2.1" fill="#9b9b9b"/></svg>
<svg class="abs" style="left:103px;top:462.7px" width="18" height="18" viewBox="0 0 18 18"><defs><linearGradient id="bg12" x1="0" x2="1"><stop offset="0" stop-color="#fff"/><stop offset=".4" stop-color="#e6e8ee"/><stop offset="1" stop-color="#a9afbe"/></linearGradient></defs><rect x="1.8" y="1.8" width="14.4" height="14.4" rx="4.3" fill="#fff" stroke="#454a54" stroke-width="1.25"/><path d="M4.9 7.1h10.5v5.4a3.2 3.2 0 0 1-3.2 3.2H4.9z" fill="url(#bg12)"/></svg>
<div class="row" style="left:76.3px;top:487.0px;width:166.2px"></div>
<svg class="abs" style="left:79.3px;top:491.0px" width="17" height="11" viewBox="0 0 17 11"><path d="M0.3 5.5C2.5 1.8 5.3 0.3 8.5 0.3s6 1.5 8.2 5.2C14.5 9.2 11.7 10.7 8.5 10.7S2.5 9.2 0.3 5.5z" fill="#9b9b9b"/><circle cx="8.5" cy="5.5" r="3.6" fill="#f0f0f0"/><circle cx="8.5" cy="5.5" r="2.1" fill="#9b9b9b"/></svg>
<svg class="abs" style="left:103px;top:486.7px" width="18" height="18" viewBox="0 0 18 18"><defs><linearGradient id="bg13" x1="0" x2="1"><stop offset="0" stop-color="#fff"/><stop offset=".4" stop-color="#e6e8ee"/><stop offset="1" stop-color="#a9afbe"/></linearGradient></defs><rect x="1.8" y="1.8" width="14.4" height="14.4" rx="4.3" fill="#fff" stroke="#454a54" stroke-width="1.25"/><path d="M4.9 7.1h10.5v5.4a3.2 3.2 0 0 1-3.2 3.2H4.9z" fill="url(#bg13)"/></svg>
<div class="row" style="left:76.3px;top:511.0px;width:166.2px"></div>
<svg class="abs" style="left:79.3px;top:515.0px" width="17" height="11" viewBox="0 0 17 11"><path d="M0.3 5.5C2.5 1.8 5.3 0.3 8.5 0.3s6 1.5 8.2 5.2C14.5 9.2 11.7 10.7 8.5 10.7S2.5 9.2 0.3 5.5z" fill="#9b9b9b"/><circle cx="8.5" cy="5.5" r="3.6" fill="#f0f0f0"/><circle cx="8.5" cy="5.5" r="2.1" fill="#9b9b9b"/></svg>
<svg class="abs" style="left:103px;top:510.7px" width="18" height="18" viewBox="0 0 18 18"><defs><linearGradient id="bg14" x1="0" x2="1"><stop offset="0" stop-color="#fff"/><stop offset=".4" stop-color="#e6e8ee"/><stop offset="1" stop-color="#a9afbe"/></linearGradient></defs><rect x="1.8" y="1.8" width="14.4" height="14.4" rx="4.3" fill="#fff" stroke="#454a54" stroke-width="1.25"/><path d="M4.9 7.1h10.5v5.4a3.2 3.2 0 0 1-3.2 3.2H4.9z" fill="url(#bg14)"/></svg>
<div class="row" style="left:76.3px;top:535.0px;width:153.8px"></div>
<svg class="abs" style="left:79.3px;top:539.0px" width="17" height="11" viewBox="0 0 17 11"><path d="M0.3 5.5C2.5 1.8 5.3 0.3 8.5 0.3s6 1.5 8.2 5.2C14.5 9.2 11.7 10.7 8.5 10.7S2.5 9.2 0.3 5.5z" fill="#9b9b9b"/><circle cx="8.5" cy="5.5" r="3.6" fill="#f0f0f0"/><circle cx="8.5" cy="5.5" r="2.1" fill="#9b9b9b"/></svg>
<svg class="abs" style="left:103px;top:534.7px" width="18" height="18" viewBox="0 0 18 18"><defs><linearGradient id="bg15" x1="0" x2="1"><stop offset="0" stop-color="#fff"/><stop offset=".4" stop-color="#e6e8ee"/><stop offset="1" stop-color="#a9afbe"/></linearGradient></defs><rect x="1.8" y="1.8" width="14.4" height="14.4" rx="4.3" fill="#fff" stroke="#454a54" stroke-width="1.25"/><path d="M4.9 7.1h10.5v5.4a3.2 3.2 0 0 1-3.2 3.2H4.9z" fill="url(#bg15)"/></svg>
<div class="row" style="left:76.3px;top:559.0px;width:166.2px"></div>
<svg class="abs" style="left:79.3px;top:563.0px" width="17" height="11" viewBox="0 0 17 11"><path d="M0.3 5.5C2.5 1.8 5.3 0.3 8.5 0.3s6 1.5 8.2 5.2C14.5 9.2 11.7 10.7 8.5 10.7S2.5 9.2 0.3 5.5z" fill="#9b9b9b"/><circle cx="8.5" cy="5.5" r="3.6" fill="#f0f0f0"/><circle cx="8.5" cy="5.5" r="2.1" fill="#9b9b9b"/></svg>
<svg class="abs" style="left:103px;top:558.7px" width="18" height="18" viewBox="0 0 18 18"><defs><linearGradient id="bg16" x1="0" x2="1"><stop offset="0" stop-color="#fff"/><stop offset=".4" stop-color="#e6e8ee"/><stop offset="1" stop-color="#a9afbe"/></linearGradient></defs><rect x="1.8" y="1.8" width="14.4" height="14.4" rx="4.3" fill="#fff" stroke="#454a54" stroke-width="1.25"/><path d="M4.9 7.1h10.5v5.4a3.2 3.2 0 0 1-3.2 3.2H4.9z" fill="url(#bg16)"/></svg>
<div class="row" style="left:76.3px;top:583.0px;width:104.2px"></div>
<svg class="abs" style="left:79.3px;top:587.0px" width="17" height="11" viewBox="0 0 17 11"><path d="M0.3 5.5C2.5 1.8 5.3 0.3 8.5 0.3s6 1.5 8.2 5.2C14.5 9.2 11.7 10.7 8.5 10.7S2.5 9.2 0.3 5.5z" fill="#9b9b9b"/><circle cx="8.5" cy="5.5" r="3.6" fill="#f0f0f0"/><circle cx="8.5" cy="5.5" r="2.1" fill="#9b9b9b"/></svg>
<svg class="abs" style="left:103px;top:582.7px" width="18" height="18" viewBox="0 0 18 18"><defs><linearGradient id="bg17" x1="0" x2="1"><stop offset="0" stop-color="#fff"/><stop offset=".4" stop-color="#e6e8ee"/><stop offset="1" stop-color="#a9afbe"/></linearGradient></defs><rect x="1.8" y="1.8" width="14.4" height="14.4" rx="4.3" fill="#fff" stroke="#454a54" stroke-width="1.25"/><path d="M4.9 7.1h10.5v5.4a3.2 3.2 0 0 1-3.2 3.2H4.9z" fill="url(#bg17)"/></svg>
<div class="row" style="left:76.3px;top:607.0px;width:104.9px"></div>
<svg class="abs" style="left:79.3px;top:611.0px" width="17" height="11" viewBox="0 0 17 11"><path d="M0.3 5.5C2.5 1.8 5.3 0.3 8.5 0.3s6 1.5 8.2 5.2C14.5 9.2 11.7 10.7 8.5 10.7S2.5 9.2 0.3 5.5z" fill="#9b9b9b"/><circle cx="8.5" cy="5.5" r="3.6" fill="#f0f0f0"/><circle cx="8.5" cy="5.5" r="2.1" fill="#9b9b9b"/></svg>
<svg class="abs" style="left:103px;top:606.7px" width="18" height="18" viewBox="0 0 18 18"><defs><linearGradient id="bg18" x1="0" x2="1"><stop offset="0" stop-color="#fff"/><stop offset=".4" stop-color="#e6e8ee"/><stop offset="1" stop-color="#a9afbe"/></linearGradient></defs><rect x="1.8" y="1.8" width="14.4" height="14.4" rx="4.3" fill="#fff" stroke="#454a54" stroke-width="1.25"/><path d="M4.9 7.1h10.5v5.4a3.2 3.2 0 0 1-3.2 3.2H4.9z" fill="url(#bg18)"/></svg>
<div class="row" style="left:76.3px;top:631.0px;width:106.7px"></div>
<svg class="abs" style="left:79.3px;top:635.0px" width="17" height="11" viewBox="0 0 17 11"><path d="M0.3 5.5C2.5 1.8 5.3 0.3 8.5 0.3s6 1.5 8.2 5.2C14.5 9.2 11.7 10.7 8.5 10.7S2.5 9.2 0.3 5.5z" fill="#9b9b9b"/><circle cx="8.5" cy="5.5" r="3.6" fill="#f0f0f0"/><circle cx="8.5" cy="5.5" r="2.1" fill="#9b9b9b"/></svg>
<svg class="abs" style="left:103px;top:630.7px" width="18" height="18" viewBox="0 0 18 18"><defs><linearGradient id="bg19" x1="0" x2="1"><stop offset="0" stop-color="#fff"/><stop offset=".4" stop-color="#e6e8ee"/><stop offset="1" stop-color="#a9afbe"/></linearGradient></defs><rect x="1.8" y="1.8" width="14.4" height="14.4" rx="4.3" fill="#fff" stroke="#454a54" stroke-width="1.25"/><path d="M4.9 7.1h10.5v5.4a3.2 3.2 0 0 1-3.2 3.2H4.9z" fill="url(#bg19)"/></svg>
<div class="row" style="left:76.3px;top:655.0px;width:120.8px"></div>
<svg class="abs" style="left:79.3px;top:659.0px" width="17" height="11" viewBox="0 0 17 11"><path d="M0.3 5.5C2.5 1.8 5.3 0.3 8.5 0.3s6 1.5 8.2 5.2C14.5 9.2 11.7 10.7 8.5 10.7S2.5 9.2 0.3 5.5z" fill="#9b9b9b"/><circle cx="8.5" cy="5.5" r="3.6" fill="#f0f0f0"/><circle cx="8.5" cy="5.5" r="2.1" fill="#9b9b9b"/></svg>
<svg class="abs" style="left:103px;top:654.7px" width="18" height="18" viewBox="0 0 18 18"><defs><linearGradient id="bg20" x1="0" x2="1"><stop offset="0" stop-color="#fff"/><stop offset=".4" stop-color="#e6e8ee"/><stop offset="1" stop-color="#a9afbe"/></linearGradient></defs><rect x="1.8" y="1.8" width="14.4" height="14.4" rx="4.3" fill="#fff" stroke="#454a54" stroke-width="1.25"/><path d="M4.9 7.1h10.5v5.4a3.2 3.2 0 0 1-3.2 3.2H4.9z" fill="url(#bg20)"/></svg>
<div class="row" style="left:76.3px;top:679.0px;width:137.7px"></div>
<svg class="abs" style="left:79.3px;top:683.0px" width="17" height="11" viewBox="0 0 17 11"><path d="M0.3 5.5C2.5 1.8 5.3 0.3 8.5 0.3s6 1.5 8.2 5.2C14.5 9.2 11.7 10.7 8.5 10.7S2.5 9.2 0.3 5.5z" fill="#9b9b9b"/><circle cx="8.5" cy="5.5" r="3.6" fill="#f0f0f0"/><circle cx="8.5" cy="5.5" r="2.1" fill="#9b9b9b"/></svg>
<svg class="abs" style="left:103px;top:678.7px" width="18" height="18" viewBox="0 0 18 18"><defs><linearGradient id="bg21" x1="0" x2="1"><stop offset="0" stop-color="#fff"/><stop offset=".4" stop-color="#e6e8ee"/><stop offset="1" stop-color="#a9afbe"/></linearGradient></defs><rect x="1.8" y="1.8" width="14.4" height="14.4" rx="4.3" fill="#fff" stroke="#454a54" stroke-width="1.25"/><path d="M4.9 7.1h10.5v5.4a3.2 3.2 0 0 1-3.2 3.2H4.9z" fill="url(#bg21)"/></svg>
<div class="row" style="left:76.3px;top:703.0px;width:131.5px"></div>
<svg class="abs" style="left:79.3px;top:707.0px" width="17" height="11" viewBox="0 0 17 11"><path d="M0.3 5.5C2.5 1.8 5.3 0.3 8.5 0.3s6 1.5 8.2 5.2C14.5 9.2 11.7 10.7 8.5 10.7S2.5 9.2 0.3 5.5z" fill="#9b9b9b"/><circle cx="8.5" cy="5.5" r="3.6" fill="#f0f0f0"/><circle cx="8.5" cy="5.5" r="2.1" fill="#9b9b9b"/></svg>
<svg class="abs" style="left:103px;top:702.7px" width="18" height="18" viewBox="0 0 18 18"><defs><linearGradient id="bg22" x1="0" x2="1"><stop offset="0" stop-color="#fff"/><stop offset=".4" stop-color="#e6e8ee"/><stop offset="1" stop-color="#a9afbe"/></linearGradient></defs><rect x="1.8" y="1.8" width="14.4" height="14.4" rx="4.3" fill="#fff" stroke="#454a54" stroke-width="1.25"/><path d="M4.9 7.1h10.5v5.4a3.2 3.2 0 0 1-3.2 3.2H4.9z" fill="url(#bg22)"/></svg>
<div class="row" style="left:76.3px;top:727.0px;width:186.8px"></div>
<svg class="abs" style="left:79.3px;top:731.0px" width="17" height="11" viewBox="0 0 17 11"><path d="M0.3 5.5C2.5 1.8 5.3 0.3 8.5 0.3s6 1.5 8.2 5.2C14.5 9.2 11.7 10.7 8.5 10.7S2.5 9.2 0.3 5.5z" fill="#9b9b9b"/><circle cx="8.5" cy="5.5" r="3.6" fill="#f0f0f0"/><circle cx="8.5" cy="5.5" r="2.1" fill="#9b9b9b"/></svg>
<svg class="abs" style="left:103px;top:726.7px" width="18" height="18" viewBox="0 0 18 18"><defs><linearGradient id="bg23" x1="0" x2="1"><stop offset="0" stop-color="#fff"/><stop offset=".4" stop-color="#e6e8ee"/><stop offset="1" stop-color="#a9afbe"/></linearGradient></defs><rect x="1.8" y="1.8" width="14.4" height="14.4" rx="4.3" fill="#fff" stroke="#454a54" stroke-width="1.25"/><path d="M4.9 7.1h10.5v5.4a3.2 3.2 0 0 1-3.2 3.2H4.9z" fill="url(#bg23)"/></svg>
<div class="row" style="left:76.3px;top:751.0px;width:120.8px"></div>
<svg class="abs" style="left:79.3px;top:755.0px" width="17" height="11" viewBox="0 0 17 11"><path d="M0.3 5.5C2.5 1.8 5.3 0.3 8.5 0.3s6 1.5 8.2 5.2C14.5 9.2 11.7 10.7 8.5 10.7S2.5 9.2 0.3 5.5z" fill="#9b9b9b"/><circle cx="8.5" cy="5.5" r="3.6" fill="#f0f0f0"/><circle cx="8.5" cy="5.5" r="2.1" fill="#9b9b9b"/></svg>
<svg class="abs" style="left:103px;top:750.7px" width="18" height="18" viewBox="0 0 18 18"><defs><linearGradient id="bg24" x1="0" x2="1"><stop offset="0" stop-color="#fff"/><stop offset=".4" stop-color="#e6e8ee"/><stop offset="1" stop-color="#a9afbe"/></linearGradient></defs><rect x="1.8" y="1.8" width="14.4" height="14.4" rx="4.3" fill="#fff" stroke="#454a54" stroke-width="1.25"/><path d="M4.9 7.1h10.5v5.4a3.2 3.2 0 0 1-3.2 3.2H4.9z" fill="url(#bg24)"/></svg>
<div class="row" style="left:76.3px;top:775.0px;width:166.2px"></div>
<svg class="abs" style="left:79.3px;top:779.0px" width="17" height="11" viewBox="0 0 17 11"><path d="M0.3 5.5C2.5 1.8 5.3 0.3 8.5 0.3s6 1.5 8.2 5.2C14.5 9.2 11.7 10.7 8.5 10.7S2.5 9.2 0.3 5.5z" fill="#9b9b9b"/><circle cx="8.5" cy="5.5" r="3.6" fill="#f0f0f0"/><circle cx="8.5" cy="5.5" r="2.1" fill="#9b9b9b"/></svg>
<svg class="abs" style="left:103px;top:774.7px" width="18" height="18" viewBox="0 0 18 18"><defs><linearGradient id="bg25" x1="0" x2="1"><stop offset="0" stop-color="#fff"/><stop offset=".4" stop-color="#e6e8ee"/><stop offset="1" stop-color="#a9afbe"/></linearGradient></defs><rect x="1.8" y="1.8" width="14.4" height="14.4" rx="4.3" fill="#fff" stroke="#454a54" stroke-width="1.25"/><path d="M4.9 7.1h10.5v5.4a3.2 3.2 0 0 1-3.2 3.2H4.9z" fill="url(#bg25)"/></svg>
<div class="row" style="left:76.3px;top:799.0px;width:166.2px"></div>
<svg class="abs" style="left:79.3px;top:803.0px" width="17" height="11" viewBox="0 0 17 11"><path d="M0.3 5.5C2.5 1.8 5.3 0.3 8.5 0.3s6 1.5 8.2 5.2C14.5 9.2 11.7 10.7 8.5 10.7S2.5 9.2 0.3 5.5z" fill="#9b9b9b"/><circle cx="8.5" cy="5.5" r="3.6" fill="#f0f0f0"/><circle cx="8.5" cy="5.5" r="2.1" fill="#9b9b9b"/></svg>
<svg class="abs" style="left:103px;top:798.7px" width="18" height="18" viewBox="0 0 18 18"><defs><linearGradient id="bg26" x1="0" x2="1"><stop offset="0" stop-color="#fff"/><stop offset=".4" stop-color="#e6e8ee"/><stop offset="1" stop-color="#a9afbe"/></linearGradient></defs><rect x="1.8" y="1.8" width="14.4" height="14.4" rx="4.3" fill="#fff" stroke="#454a54" stroke-width="1.25"/><path d="M4.9 7.1h10.5v5.4a3.2 3.2 0 0 1-3.2 3.2H4.9z" fill="url(#bg26)"/></svg>
<div class="row" style="left:76.3px;top:823.0px;width:166.2px"></div>
<svg class="abs" style="left:79.3px;top:827.0px" width="17" height="11" viewBox="0 0 17 11"><path d="M0.3 5.5C2.5 1.8 5.3 0.3 8.5 0.3s6 1.5 8.2 5.2C14.5 9.2 11.7 10.7 8.5 10.7S2.5 9.2 0.3 5.5z" fill="#9b9b9b"/><circle cx="8.5" cy="5.5" r="3.6" fill="#f0f0f0"/><circle cx="8.5" cy="5.5" r="2.1" fill="#9b9b9b"/></svg>
<svg class="abs" style="left:103px;top:822.7px" width="18" height="18" viewBox="0 0 18 18"><defs><linearGradient id="bg27" x1="0" x2="1"><stop offset="0" stop-color="#fff"/><stop offset=".4" stop-color="#e6e8ee"/><stop offset="1" stop-color="#a9afbe"/></linearGradient></defs><rect x="1.8" y="1.8" width="14.4" height="14.4" rx="4.3" fill="#fff" stroke="#454a54" stroke-width="1.25"/><path d="M4.9 7.1h10.5v5.4a3.2 3.2 0 0 1-3.2 3.2H4.9z" fill="url(#bg27)"/></svg>
<div class="row" style="left:76.3px;top:847.0px;width:166.2px"></div>
<svg class="abs" style="left:79.3px;top:851.0px" width="17" height="11" viewBox="0 0 17 11"><path d="M0.3 5.5C2.5 1.8 5.3 0.3 8.5 0.3s6 1.5 8.2 5.2C14.5 9.2 11.7 10.7 8.5 10.7S2.5 9.2 0.3 5.5z" fill="#9b9b9b"/><circle cx="8.5" cy="5.5" r="3.6" fill="#f0f0f0"/><circle cx="8.5" cy="5.5" r="2.1" fill="#9b9b9b"/></svg>
<svg class="abs" style="left:103px;top:846.7px" width="18" height="18" viewBox="0 0 18 18"><defs><linearGradient id="bg28" x1="0" x2="1"><stop offset="0" stop-color="#fff"/><stop offset=".4" stop-color="#e6e8ee"/><stop offset="1" stop-color="#a9afbe"/></linearGradient></defs><rect x="1.8" y="1.8" width="14.4" height="14.4" rx="4.3" fill="#fff" stroke="#454a54" stroke-width="1.25"/><path d="M4.9 7.1h10.5v5.4a3.2 3.2 0 0 1-3.2 3.2H4.9z" fill="url(#bg28)"/></svg>
<div class="row" style="left:76.3px;top:871.0px;width:176.2px"></div>
<svg class="abs" style="left:79.3px;top:875.0px" width="17" height="11" viewBox="0 0 17 11"><path d="M0.3 5.5C2.5 1.8 5.3 0.3 8.5 0.3s6 1.5 8.2 5.2C14.5 9.2 11.7 10.7 8.5 10.7S2.5 9.2 0.3 5.5z" fill="#9b9b9b"/><circle cx="8.5" cy="5.5" r="3.6" fill="#f0f0f0"/><circle cx="8.5" cy="5.5" r="2.1" fill="#9b9b9b"/></svg>
<svg class="abs" style="left:103px;top:870.7px" width="18" height="18" viewBox="0 0 18 18"><defs><linearGradient id="bg29" x1="0" x2="1"><stop offset="0" stop-color="#fff"/><stop offset=".4" stop-color="#e6e8ee"/><stop offset="1" stop-color="#a9afbe"/></linearGradient></defs><rect x="1.8" y="1.8" width="14.4" height="14.4" rx="4.3" fill="#fff" stroke="#454a54" stroke-width="1.25"/><path d="M4.9 7.1h10.5v5.4a3.2 3.2 0 0 1-3.2 3.2H4.9z" fill="url(#bg29)"/></svg>
<div class="row" style="left:76.3px;top:895.0px;width:153.8px"></div>
<svg class="abs" style="left:79.3px;top:899.0px" width="17" height="11" viewBox="0 0 17 11"><path d="M0.3 5.5C2.5 1.8 5.3 0.3 8.5 0.3s6 1.5 8.2 5.2C14.5 9.2 11.7 10.7 8.5 10.7S2.5 9.2 0.3 5.5z" fill="#9b9b9b"/><circle cx="8.5" cy="5.5" r="3.6" fill="#f0f0f0"/><circle cx="8.5" cy="5.5" r="2.1" fill="#9b9b9b"/></svg>
<svg class="abs" style="left:103px;top:894.7px" width="18" height="18" viewBox="0 0 18 18"><defs><linearGradient id="bg30" x1="0" x2="1"><stop offset="0" stop-color="#fff"/><stop offset=".4" stop-color="#e6e8ee"/><stop offset="1" stop-color="#a9afbe"/></linearGradient></defs><rect x="1.8" y="1.8" width="14.4" height="14.4" rx="4.3" fill="#fff" stroke="#454a54" stroke-width="1.25"/><path d="M4.9 7.1h10.5v5.4a3.2 3.2 0 0 1-3.2 3.2H4.9z" fill="url(#bg30)"/></svg>
<div class="row" style="left:76.3px;top:919.0px;width:153.8px"></div>
<svg class="abs" style="left:79.3px;top:923.0px" width="17" height="11" viewBox="0 0 17 11"><path d="M0.3 5.5C2.5 1.8 5.3 0.3 8.5 0.3s6 1.5 8.2 5.2C14.5 9.2 11.7 10.7 8.5 10.7S2.5 9.2 0.3 5.5z" fill="#9b9b9b"/><circle cx="8.5" cy="5.5" r="3.6" fill="#f0f0f0"/><circle cx="8.5" cy="5.5" r="2.1" fill="#9b9b9b"/></svg>
<svg class="abs" style="left:103px;top:918.7px" width="18" height="18" viewBox="0 0 18 18"><defs><linearGradient id="bg31" x1="0" x2="1"><stop offset="0" stop-color="#fff"/><stop offset=".4" stop-color="#e6e8ee"/><stop offset="1" stop-color="#a9afbe"/></linearGradient></defs><rect x="1.8" y="1.8" width="14.4" height="14.4" rx="4.3" fill="#fff" stroke="#454a54" stroke-width="1.25"/><path d="M4.9 7.1h10.5v5.4a3.2 3.2 0 0 1-3.2 3.2H4.9z" fill="url(#bg31)"/></svg>
<div class="row" style="left:58px;top:942.5px;width:111px"></div>
<svg class="abs" style="left:61px;top:947px" width="17" height="11" viewBox="0 0 17 11"><path d="M0.3 5.5C2.5 1.8 5.3 0.3 8.5 0.3s6 1.5 8.2 5.2C14.5 9.2 11.7 10.7 8.5 10.7S2.5 9.2 0.3 5.5z" fill="#9b9b9b"/><circle cx="8.5" cy="5.5" r="3.6" fill="#f0f0f0"/><circle cx="8.5" cy="5.5" r="2.1" fill="#9b9b9b"/></svg>
<svg class="abs" style="left:38px;top:946px" width="13" height="13" viewBox="0 0 13 13"><defs><linearGradient id="trg" x1="0" y1="0" x2="1" y2="1"><stop offset="0.3" stop-color="#ddd"/><stop offset="1" stop-color="#555"/></linearGradient></defs><path d="M11.5 1.5V11.5H1.5z" fill="url(#trg)" stroke="#444" stroke-width="1"/></svg>
<svg class="abs" style="left:86px;top:945px" width="17" height="14" viewBox="0 0 17 14"><path d="M0 1.2h6l1.2 1.6H0z" fill="#a3a3a3"/><rect x="0" y="3.6" width="16" height="9.8" fill="#a3a3a3"/></svg>
<div class="row" style="left:76px;top:966.5px;width:179px"></div>
<svg class="abs" style="left:79px;top:969.5px" width="17" height="13" viewBox="0 0 17 13"><path d="M0.5 6.5C2.7 3 5.4 1.6 8.5 1.6s5.8 1.4 8 4.9C14.3 10 11.6 11.4 8.5 11.4S2.7 10 0.5 6.5z" fill="none" stroke="#9b9b9b" stroke-width="1"/><circle cx="8.5" cy="6.5" r="2.6" fill="none" stroke="#9b9b9b"/><path d="M3 0.8L13.5 12.4" stroke="#9b9b9b" stroke-width="1.1"/></svg>
<svg class="abs" style="left:104px;top:968px" width="16" height="16" viewBox="0 0 16 16"><rect x=".5" y=".5" width="15" height="15" fill="#a9c9ea" stroke="#6b7280"/><circle cx="11.5" cy="4" r="1.6" fill="#f5e9a8"/><path d="M1 15V9l4-3 5 5 2-2 3 3v3z" fill="#8a8f98"/><circle cx="4.6" cy="11.6" r="3" fill="none" stroke="#d0161b" stroke-width="1.3"/><path d="M2.6 9.6l4 4" stroke="#d0161b" stroke-width="1.3"/></svg>
<span class="t" style="left:23.5px;top:5.5px;font-size:12px;color:#000;transform:scaleX(0.978)">Autodesk Fusion 360 (個人用 - 商用利用不可)</span>
<span class="t" style="left:497.0px;top:35.0px;font-size:12px;color:#333;transform:scaleX(0.991)">PAXON_PCT-50_open v2</span>
<span class="t" style="left:1251.0px;top:35.0px;font-size:12px;color:#555;transform:scaleX(0.973)">PAXON_PCT-50 v81</span>
<span class="t" style="left:1732.0px;top:33.0px;font-size:11px;color:#333;transform:scaleX(0.986)">8/10</span>
<span class="t" style="left:148.8px;top:62.0px;font-size:12px;color:#3c3c3c;transform:scaleX(0.685)">ソリッド</span>
<span class="t" style="left:228.5px;top:62.0px;font-size:12px;color:#3c3c3c;transform:scaleX(0.661)">サーフェス</span>
<span class="t" style="left:310.8px;top:62.0px;font-size:12px;color:#3c3c3c;transform:scaleX(0.674)">メッシュ</span>
<span class="t" style="left:388.8px;top:62.0px;font-size:12px;color:#3c3c3c;transform:scaleX(0.660)">フォーム</span>
<span class="t" style="left:466.8px;top:62.0px;font-size:12px;color:#3c3c3c;transform:scaleX(0.686)">シート メタル</span>
<span class="t" style="left:658.5px;top:62.0px;font-size:12px;color:#3c3c3c;transform:scaleX(0.646)">ユーティリティ</span>
<span class="t" style="left:564.8px;top:62.0px;font-size:12px;color:#0696d7;transform:scaleX(0.671)">プラスチック</span>
<span class="t" style="left:44.5px;top:90.5px;font-size:12px;color:#222;font-weight:bold;transform:scaleX(0.708)">デザイン</span>
<span class="t" style="left:265.0px;top:122.0px;font-size:12px;color:#333;transform:scaleX(0.917)">作成</span>
<span class="t" style="left:554.5px;top:122.0px;font-size:12px;color:#333;transform:scaleX(0.917)">修正</span>
<span class="t" style="left:727.8px;top:122.0px;font-size:12px;color:#333;transform:scaleX(0.693)">アセンブリ</span>
<span class="t" style="left:818.5px;top:122.0px;font-size:12px;color:#333;transform:scaleX(0.917)">構築</span>
<span class="t" style="left:877.0px;top:122.0px;font-size:12px;color:#333;transform:scaleX(0.917)">検査</span>
<span class="t" style="left:935.5px;top:122.0px;font-size:12px;color:#333;transform:scaleX(0.917)">挿入</span>
<span class="t" style="left:994.5px;top:122.0px;font-size:12px;color:#333;transform:scaleX(0.917)">選択</span>
<span class="t" style="left:28.8px;top:152.0px;font-size:12px;color:#444;transform:scaleX(0.681)">ブラウザ</span>
<span class="t" style="left:28.3px;top:1019.0px;font-size:12px;color:#444;transform:scaleX(0.674)">コメント</span>
<span class="t" style="left:151.1px;top:179.0px;font-size:12px;color:#333;transform:scaleX(0.676)">キーボード</span>
<span class="t" style="left:151.1px;top:203.0px;font-size:12px;color:#333;transform:scaleX(0.689)">キーボード<span class="d">・</span>コネクタ</span>
<span class="t" style="left:151.8px;top:225.5px;font-size:12px;color:#333;transform:scaleX(0.798)">LED1</span>
<span class="t" style="left:151.8px;top:249.5px;font-size:12px;color:#333;transform:scaleX(0.817)">LED2</span>
<span class="t" style="left:133.3px;top:275.5px;font-size:12px;color:#333;transform:scaleX(0.658)">ジョイスティックポート</span>
<span class="t" style="left:134.0px;top:299.5px;font-size:12px;color:#333;transform:scaleX(0.908)">画面</span>
<span class="t" style="left:134.0px;top:323.5px;font-size:12px;color:#333;transform:scaleX(0.677)">ヘッドフォンコネクタ</span>
<span class="t" style="left:133.3px;top:347.5px;font-size:12px;color:#333;transform:scaleX(0.694)">カートリッジ蓋</span>
<span class="t" style="left:133.3px;top:371.5px;font-size:12px;color:#333;transform:scaleX(0.736)">コネクタ蓋</span>
<span class="t" style="left:134.0px;top:395.5px;font-size:12px;color:#333;transform:scaleX(0.741)">電源スイッチ</span>
<span class="t" style="left:134.0px;top:419.5px;font-size:12px;color:#333;transform:scaleX(0.813)">ボディ<span class="d">・</span>上部<span class="d">・</span>前</span>
<span class="t" style="left:134.0px;top:443.5px;font-size:12px;color:#333;transform:scaleX(0.813)">ボディ<span class="d">・</span>上部<span class="d">・</span>後</span>
<span class="t" style="left:134.0px;top:467.5px;font-size:12px;color:#333;transform:scaleX(0.844)">ボディ<span class="d">・</span>上部<span class="d">・</span>後<span class="d">・</span>尾部</span>
<span class="t" style="left:134.0px;top:491.5px;font-size:12px;color:#333;transform:scaleX(0.844)">ボディ<span class="d">・</span>上部<span class="d">・</span>後<span class="d">・</span>上面</span>
<span class="t" style="left:134.0px;top:515.5px;font-size:12px;color:#333;transform:scaleX(0.844)">ボディ<span class="d">・</span>上部<span class="d">・</span>後<span class="d">・</span>底面</span>
<span class="t" style="left:134.0px;top:539.5px;font-size:12px;color:#333;transform:scaleX(0.822)">ボディ<span class="d">・</span>上部<span class="d">・</span>後<span class="d">・</span>右</span>
<span class="t" style="left:134.0px;top:563.5px;font-size:12px;color:#333;transform:scaleX(0.844)">ボディ<span class="d">・</span>上部<span class="d">・</span>後<span class="d">・</span>背面</span>
<span class="t" style="left:134.0px;top:587.5px;font-size:12px;color:#333;transform:scaleX(0.724)">ボタン<span class="d">・</span>1</span>
<span class="t" style="left:134.0px;top:611.5px;font-size:12px;color:#333;transform:scaleX(0.738)">ボタン<span class="d">・</span>2</span>
<span class="t" style="left:134.0px;top:635.5px;font-size:12px;color:#333;transform:scaleX(0.901)">画面<span class="d">・</span>縁</span>
<span class="t" style="left:134.0px;top:659.5px;font-size:12px;color:#333;transform:scaleX(0.731)">画面フレーム</span>
<span class="t" style="left:134.0px;top:683.5px;font-size:12px;color:#333;transform:scaleX(0.813)">ボディ<span class="d">・</span>下部<span class="d">・</span>前</span>
<span class="t" style="left:133.3px;top:707.5px;font-size:12px;color:#333;transform:scaleX(0.673)">フロントポケット</span>
<span class="t" style="left:134.0px;top:731.5px;font-size:12px;color:#333;transform:scaleX(0.785)">ボディ<span class="d">・</span>下部<span class="d">・</span>前<span class="d">・</span>ポケット内</span>
<span class="t" style="left:133.3px;top:755.5px;font-size:12px;color:#333;transform:scaleX(0.741)">内部フレーム</span>
<span class="t" style="left:134.0px;top:779.5px;font-size:12px;color:#333;transform:scaleX(0.844)">ボディ<span class="d">・</span>下部<span class="d">・</span>後<span class="d">・</span>底面</span>
<span class="t" style="left:134.0px;top:803.5px;font-size:12px;color:#333;transform:scaleX(0.844)">ボディ<span class="d">・</span>下部<span class="d">・</span>後<span class="d">・</span>右底</span>
<span class="t" style="left:134.0px;top:827.5px;font-size:12px;color:#333;transform:scaleX(0.844)">ボディ<span class="d">・</span>下部<span class="d">・</span>後<span class="d">・</span>背面</span>
<span class="t" style="left:134.0px;top:851.5px;font-size:12px;color:#333;transform:scaleX(0.844)">ボディ<span class="d">・</span>下部<span class="d">・</span>後<span class="d">・</span>上面</span>
<span class="t" style="left:134.0px;top:875.5px;font-size:12px;color:#333;transform:scaleX(0.843)">ボディ<span class="d">・</span>下部<span class="d">・</span>後<span class="d">・</span>左底面</span>
<span class="t" style="left:134.0px;top:899.5px;font-size:12px;color:#333;transform:scaleX(0.822)">ボディ<span class="d">・</span>下部<span class="d">・</span>後<span class="d">・</span>左</span>
<span class="t" style="left:134.0px;top:923.5px;font-size:12px;color:#333;transform:scaleX(0.822)">ボディ<span class="d">・</span>下部<span class="d">・</span>後<span class="d">・</span>右</span>
<span class="t" style="left:115.5px;top:947.5px;font-size:12px;color:#333;transform:scaleX(0.700)">キャンバス</span>
<span class="t" style="left:134.4px;top:970.0px;font-size:11px;color:#222;transform:scaleX(0.995)">honbun_shita_syasin2</span>
</div>
<div class="abs" style="left:0;top:1040px;width:1920px;height:8px;background:#111"></div>
<div class="abs" style="left:587px;top:1040px;width:48px;height:8px;background:#343434"></div>
<div class="abs" style="left:1872px;top:1046px;width:9px;height:2px;background:#ddd"></div>
<div class="abs" style="left:1886px;top:1046px;width:9px;height:2px;background:#ddd"></div>
<div class="abs" style="left:1920px;top:0;width:8px;height:34px;background:#eceef4;border-radius:0 0 0 6px"></div>
<div class="abs" style="left:1920px;top:70px;width:8px;height:1px;background:#ddd"></div>
</body></html>
